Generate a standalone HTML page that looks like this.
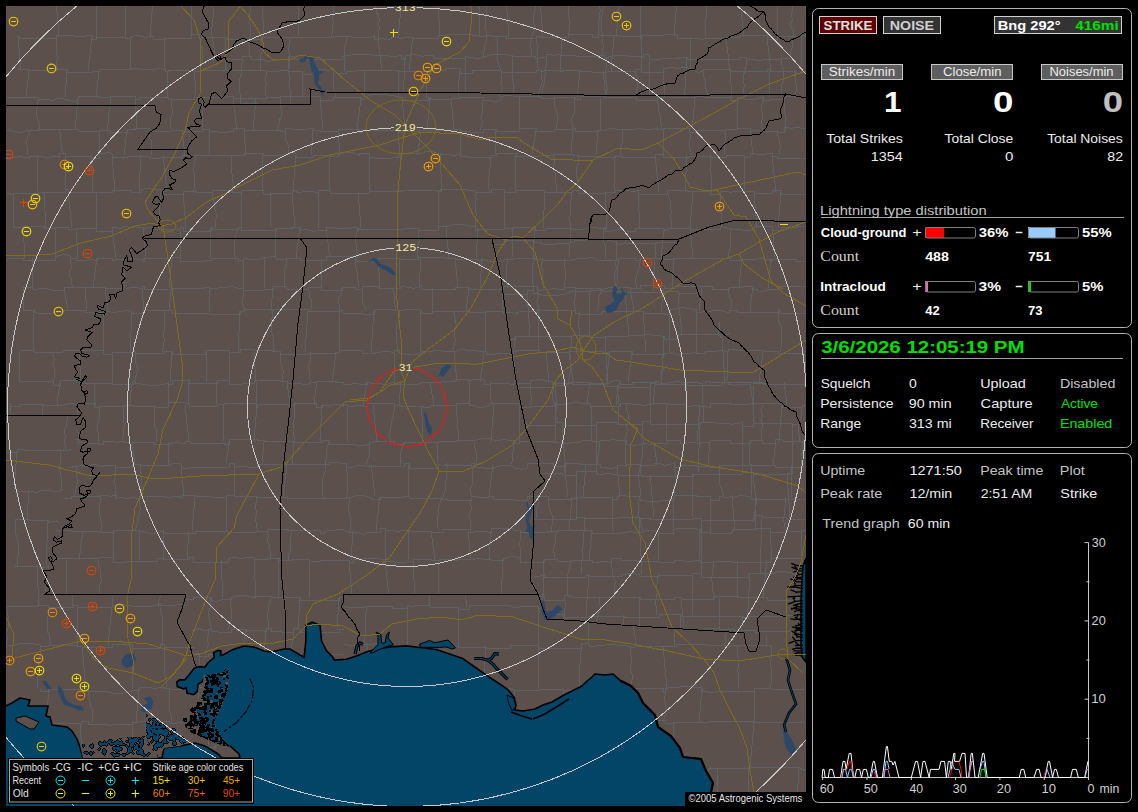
<!DOCTYPE html>
<html><head><meta charset="utf-8"><style>
*{margin:0;padding:0}
html,body{width:1138px;height:812px;background:#000;overflow:hidden;font-family:"Liberation Sans",sans-serif}
</style></head><body>
<svg width="800" height="800" viewBox="6 6 800 800" style="position:absolute;left:6px;top:6px;display:block"><rect x="6" y="6" width="800" height="800" fill="#5b504b"/><defs><clipPath id="cRest"><path clip-rule="evenodd" d="M6,6H806V806H6ZM344,594 L538,594 L547,619 L744,633 L806,640 L806,806 L344,806ZM6,416 L79,416 L44,594 L186,594 L200,680 L150,806 L6,806Z"/></clipPath><clipPath id="cBig"><path d="M344,594 L538,594 L547,619 L744,633 L806,640 L806,806 L344,806ZM6,416 L79,416 L44,594 L186,594 L200,680 L150,806 L6,806Z"/></clipPath><clipPath id="cSmall"><path d="M492,239 L679,239 L663,256 L705,303 L739,343 L766,380 L806,437 L806,633 L744,633 L547,619 L538,594 L530,580 L534,538 L533,503 L545,481 L526,429 L508,328ZM209,6 L806,6 L806,98 L786,94 L636,96 L480,93 L325,92 L310,89 L311,105 L209,104Z"/></clipPath></defs><g clip-path="url(#cRest)"><path d="M18,-3l0,3M474,-3l0,3M556,-3l0,3M624,-3l0,3M56,0l3,37M96,0l1,37M125,0l1,37M153,0l-3,37M191,0l1,37M262,0l2,37M299,0l-1,37M333,0l1,3l0,3l-1,3l0,3l0,3l-1,3l1,3l0,3l-1,3l0,4l0,3l-1,3M374,0l1,3l0,3l1,3l0,3l2,3l1,3l0,3l-1,3l1,3l0,3l-1,3l0,4M402,0l-4,37M438,0l2,37M479,0l1,37M506,0l3,37M540,0l3,37M568,0l0,3l0,3l0,3l0,3l0,3l1,3l0,3l0,3l0,3l0,4l-1,3l0,3M598,0l0,3l1,3l1,3l0,3l-1,3l0,3l0,3l-1,3l0,3l0,4l0,3l0,3M620,0l-4,37M640,0l0,37M677,0l-3,37M707,0l-2,37M740,0l4,37M777,0l1,37M806,0l-1,3l0,3l1,3l1,3l0,3l1,3l-1,3l-1,3l1,4l-1,3l0,3l-1,3M18,37l3,34M56,37l0,3l1,3l-1,3l0,3l0,3l1,3l0,3l0,3l-1,4l1,3l0,3M92,37l-4,34M131,37l-1,34M165,37l-1,34M201,37l0,3l-1,3l1,3l1,3l0,3l1,3l-1,3l0,3l-1,4l-1,3l0,3M225,37l0,34M262,37l-2,34M289,37l0,3l0,3l0,3l-1,3l1,3l1,3l-1,3l0,3l0,4l0,3l-1,3M346,37l0,3l0,3l-1,3l-1,3l0,3l0,3l0,3l0,3l0,3l0,4l0,3M378,37l4,34M413,37l-4,34M497,37l0,3l0,3l0,3l0,3l0,3l0,3l0,4l1,3l1,3l1,3l1,3M536,37l0,3l1,3l0,3l0,3l0,3l0,3l0,3l0,4l0,3l1,3l1,3M562,37l-2,34M614,37l-3,34M641,37l1,34M691,37l-1,34M726,37l4,34M767,37l4,34M801,37l0,34M29,71l-3,27M67,71l-2,27M99,71l-3,27M168,71l-1,27M194,71l0,3l0,3l1,3l0,3l0,3l0,3l0,3l0,3l-1,3M266,71l0,3l0,3l-1,3l1,3l0,3l-1,3l0,3l1,3l0,3M302,71l1,27M333,71l0,3l0,3l0,3l0,3l0,3l1,3l1,3l0,3l0,3M364,71l1,27M398,71l0,27M428,71l-2,27M460,71l-1,3l0,3l0,3l-1,3l0,3l0,3l0,3l1,3l1,3M501,71l0,3l0,3l0,3l0,3l1,3l0,3l-1,3l-2,3l0,3M541,71l0,3l0,3l1,3l0,3l-1,3l-1,3l-1,3l-1,3l0,3M580,71l-3,27M603,71l3,27M635,71l0,3l2,3l0,3l0,3l0,3l0,3l-1,3l0,3l0,3M663,71l2,27M703,71l0,3l1,3l1,3l1,3l-1,3l1,3l1,3l0,3l0,3M730,71l2,27M770,71l-1,27M796,71l-1,3l0,3l0,3l1,3l0,3l0,3l0,3l-1,3l1,3M5,98l-1,3l0,3l-1,4l0,3l0,3l0,3l1,3l0,4l-1,3l0,3M38,98l0,3l-1,3l0,4l-1,3l0,3l1,3l1,3l1,3l0,4l0,3M78,98l-3,32M110,98l0,3l0,3l0,4l-1,3l-1,3l0,3l0,3l0,3l-1,4l0,3M135,98l2,32M171,98l0,3l0,3l1,4l0,3l0,3l-1,3l-1,3l0,3l1,4l0,3M202,98l0,32M233,98l4,32M256,98l-3,32M280,98l0,3l0,3l1,4l0,3l0,3l0,3l-2,3l0,4l-1,3l-1,3M320,98l3,32M361,98l-4,32M402,98l3,32M430,98l-3,32M451,98l3,32M483,98l0,3l-1,3l0,4l0,3l0,3l-1,3l1,3l0,4l-1,3l-1,3M519,98l0,32M554,98l0,3l0,3l1,4l1,3l1,3l0,3l0,3l0,3l-1,4l1,3M575,98l-1,3l0,3l0,4l0,3l0,3l-2,3l-1,3l1,3l1,4l0,3M600,98l1,32M657,98l0,3l1,3l0,4l1,3l1,3l1,3l-1,3l1,3l0,4l0,3M695,98l-3,32M737,98l0,32M763,98l-1,3l0,3l-1,4l1,3l0,3l0,3l0,3l-1,3l1,4l1,3M784,98l2,32M29,130l0,3l-1,3l-1,3l-1,3l1,4l0,3l0,3l1,3M59,130l1,3l0,3l0,3l1,3l0,4l0,3l2,3l0,3M99,130l1,25M127,130l-3,25M149,130l0,3l0,3l1,3l2,3l-1,4l0,3l0,3l1,3M182,130l3,25M209,130l0,25M244,130l2,25M285,130l0,3l0,3l0,3l2,3l1,3l0,4l0,3l0,3M313,130l-2,25M338,130l2,25M398,130l2,25M419,130l1,3l0,3l-1,3l1,4l-2,3l0,3l-1,3l0,3M460,130l1,25M496,130l-1,25M536,130l-4,25M573,130l-2,25M598,130l-2,25M622,130l0,3l0,3l1,3l-1,4l-1,3l-1,3l0,3l0,3M663,130l0,25M689,130l1,3l0,3l0,3l-1,4l0,3l1,3l1,3l1,3M726,130l-2,25M750,130l3,25M777,130l0,3l1,3l1,3l0,3l1,3l0,4l-1,3l0,3M812,130l-1,3l-1,3l0,3l0,3l0,4l0,3l0,3l-1,3M-2,155l1,3l0,3l0,3l1,3l1,3l1,3l-1,3l-1,4l0,3l0,3l0,3l1,3M38,155l-1,37M65,155l1,37M91,155l0,3l0,3l0,3l0,3l1,3l1,3l-1,4l0,3l0,3l0,3l0,3l0,3M112,155l3,37M141,155l-2,37M163,155l4,37M196,155l-1,3l0,3l-1,3l0,3l-1,3l1,3l0,4l0,3l0,3l0,3l0,3l-1,3M231,155l2,37M263,155l-1,37M296,155l-3,37M330,155l-1,37M369,155l0,37M401,155l-3,37M440,155l2,37M491,155l0,3l-1,3l0,3l0,3l-1,3l0,3l0,4l-1,3l0,3l0,3l1,3l0,3M516,155l-1,37M553,155l1,3l0,3l0,3l-1,3l1,4l1,2l0,4l0,3l1,3l0,3l0,3l0,3M578,155l0,3l1,3l-1,3l-1,3l-1,3l0,4l1,3l0,3l1,3l0,3l0,3l1,3M615,155l-1,37M655,155l4,37M687,155l-2,37M710,155l2,37M744,155l1,37M772,155l4,37M812,155l-4,37M13,192l1,36M44,192l2,36M68,192l4,36M96,192l0,36M161,192l-3,36M183,192l3,36M212,192l0,3l1,3l1,3l1,3l-1,3l1,3l1,3l0,3l0,3l-1,3l0,3l0,3M241,192l0,36M271,192l-1,36M292,192l3,36M318,192l1,36M358,192l3,36M438,192l0,36M475,192l0,3l1,3l0,3l-1,3l0,3l0,3l1,3l0,3l-1,3l0,3l0,3l0,3M504,192l0,36M545,192l-2,36M572,192l-1,3l0,3l0,3l-1,3l0,3l0,3l0,3l0,3l-1,3l1,3l0,3l1,3M605,192l2,36M638,192l2,36M667,192l1,3l1,3l1,3l1,3l-1,3l1,3l0,3l-1,3l1,3l0,3l0,3l0,3M693,192l-3,36M720,192l2,36M754,192l3,36M781,192l-3,36M808,192l0,3l1,3l0,3l1,3l0,3l1,3l0,3l0,3l0,3l0,3l0,3l1,3M23,228l2,30M55,228l1,30M76,228l2,30M112,228l4,30M143,228l3,30M180,228l1,30M211,228l-1,30M238,228l-1,3l-1,3l-1,3l0,3l-1,3l1,3l-1,3l0,3l1,3l0,3M276,228l-1,30M300,228l-4,30M326,228l4,30M357,228l0,4l-1,3l-1,3l1,4l1,3l-1,3l1,4l0,3l0,3M418,228l0,4l0,3l1,3l0,4l-1,3l-1,3l0,4l0,3l0,3M446,228l3,30M478,228l-2,30M513,228l-1,30M535,228l-2,30M571,228l-2,30M604,228l-1,4l0,3l0,3l1,4l1,3l0,3l0,4l0,3l0,3M664,228l-3,30M690,228l3,30M730,228l0,4l0,3l0,3l1,4l-1,3l0,3l-1,4l-1,3l0,3M772,228l0,3l1,3l0,3l0,3l0,3l0,3l1,3l1,3l-1,3l0,3M-2,268l-1,3M-2,281l0,4l2,3M32,258l0,30M70,258l0,4l1,3l0,3l-1,3l-1,4l2,3l0,3l1,4l0,3M97,258l-4,30M122,258l1,3l1,4l0,3l0,3l0,4l0,3l0,3l0,3l1,4M172,258l-3,30M243,258l1,30M264,258l1,30M286,258l0,3l0,4l-1,3l-1,3l0,4l0,3l0,3l0,3l0,4M321,258l1,30M355,258l4,30M378,258l2,30M400,258l-1,30M421,258l-2,30M455,258l3,30M482,258l-2,30M507,258l0,3l0,4l-1,3l0,3l0,4l0,3l0,3l1,3l1,4M542,258l0,4l-1,3l0,3l2,3l-1,4l0,3l1,3l0,3l0,4M564,258l0,3l0,4l1,3l0,3l0,4l0,3l0,3l-1,3l0,4M618,258l0,3l0,4l-1,3l0,3l0,4l1,3l-1,3l0,4l-2,3M640,258l0,4l-1,3l0,3l-1,3l-1,3l-1,4l-1,3l1,3l0,4M674,258l-2,30M742,258l-3,30M771,258l-3,30M806,258l2,30M23,288l0,3l0,3l0,4l1,3l-1,4l0,3l1,3M64,288l4,23M85,288l2,23M105,288l3,23M142,288l2,23M172,288l-1,3l-1,3l0,4l0,3l-1,4l0,3l0,3M209,288l0,23M243,288l0,3l0,4l0,3l-1,3l1,4l1,3l2,3M273,288l-2,23M308,288l1,3l0,3l1,4l2,3l-1,3l0,4l-1,3M342,288l-1,3l0,3l-2,4l-1,3l1,3l0,4l1,3M362,288l0,3l0,4l0,3l0,4l2,3l1,3l1,3M392,288l1,3l1,3l0,4l0,3l1,4l0,3l1,3M432,288l0,23M469,288l-3,23M503,288l-1,23M537,288l0,3l1,3l0,4l-1,3l1,4l0,3l1,3M575,288l0,3l0,3l0,4l-1,3l0,4l1,3l0,3M601,288l0,3l-1,3l-2,4l0,3l0,3l0,4l-1,3M630,288l4,23M664,288l-3,23M702,288l-3,23M729,288l-1,3l1,3l1,4l2,3l-1,3l0,4l-1,3M753,288l-1,3l0,3l-1,4l0,3l-1,4l0,3l1,3M808,288l-1,23M34,311l-1,41M103,311l0,41M132,311l-2,41M164,311l0,3l0,4l0,3l0,3l1,3l-1,3l-1,3l0,3l1,3l0,3l-1,4l0,3l-1,3M240,311l-2,41M272,311l0,3l0,4l-1,3l0,3l0,3l0,3l1,3l1,3l0,3l0,3l0,4l1,3l0,3M308,311l-3,41M339,311l0,41M374,311l-3,41M399,311l0,3l0,4l-1,3l0,3l-2,3l0,3l0,3l0,3l0,3l0,3l1,3l0,4l1,3M421,311l-1,41M454,311l0,3l1,4l0,3l1,3l0,3l-1,3l-1,3l0,3l1,3l0,3l-1,4l-1,3l0,3M486,311l-1,41M539,311l-1,41M579,311l0,3l0,4l-1,3l0,3l1,3l0,3l1,3l-1,3l0,3l1,3l0,4l1,3l0,3M643,311l3,41M670,311l-1,41M696,311l1,41M778,311l0,3l0,4l0,3l2,3l1,3l0,3l0,3l0,3l1,3l-1,3l0,3l0,4l-1,3M813,311l0,3l0,4l1,3l-1,3l1,3l0,3l0,3l-1,3l0,3l0,3l1,4l1,3l0,3M19,352l0,30M53,352l0,3l1,3l0,3l-1,3l1,3l1,3l-1,3l0,3l0,3l-1,3M79,352l2,30M112,352l1,30M135,352l0,3l0,3l0,3l1,3l1,3l0,3l0,3l-1,3l-1,3l-1,3M172,352l-2,30M206,352l0,30M229,352l0,30M254,352l2,30M280,352l0,3l1,3l-1,3l1,3l1,3l1,3l0,3l-1,3l0,3l1,3M311,352l-1,3l0,3l0,3l-1,3l-1,3l1,3l0,3l0,3l1,3l0,3M336,352l-4,30M394,352l0,30M454,352l3,30M484,352l-4,30M513,352l3,30M546,352l3,30M569,352l4,30M609,352l0,3l0,3l-1,3l1,3l-1,3l-1,3l0,3l-1,3l0,3l1,3M632,352l-4,30M664,352l-1,3l0,3l-1,3l0,3l1,3l0,3l-1,3l-1,3l0,3l0,3M728,352l-1,3l0,3l0,3l0,3l0,3l0,3l0,3l0,3l0,3l-1,3M763,352l-4,30M804,352l1,3l0,3l0,3l1,3l-1,3l0,3l1,3l0,3l2,3l0,3M60,382l-3,23M94,382l0,4l1,3l-1,3l0,3l0,4l1,3l0,3M133,382l-1,3l-1,4l0,3l-1,3l0,4l0,3l-1,3M168,382l1,23M189,382l-1,23M217,382l-1,23M256,382l0,23M287,382l3,23M316,382l0,4l0,3l-1,3l0,3l-1,3l0,4l0,3M367,382l-4,23M401,382l-2,23M430,382l4,23M469,382l1,23M490,382l0,4l0,3l0,3l0,4l1,3l1,3l2,3M530,382l0,4l1,3l-1,3l1,3l1,3l-1,4l-1,3M552,382l0,4l1,3l0,3l-1,4l1,3l1,3l2,3M590,382l-3,23M620,382l-1,3l-2,4l0,3l0,3l-1,3l0,4l1,3M656,382l-1,4l-1,3l1,3l-1,3l-1,3l0,4l0,3M686,382l1,23M750,382l3,23M784,382l3,23M10,405l4,37M43,405l-3,37M77,405l0,3l0,3l0,3l-1,3l0,3l1,3l-1,4l1,3l1,3l0,3l1,3l1,3M99,405l1,3l-1,3l0,3l1,3l-2,3l0,3l-1,3l0,3l1,3l0,3l0,4l0,3M124,405l-1,3l0,3l0,3l0,3l0,3l1,3l0,3l-1,3l1,4l-1,3l-1,3l0,3M154,405l0,3l0,3l0,3l1,3l-1,3l0,3l0,3l2,3l0,3l0,3l0,4l0,3M185,405l4,37M224,405l-1,37M257,405l-3,37M294,405l1,3l-1,3l0,3l0,3l0,3l-1,3l0,3l0,3l0,3l1,4l0,3l1,3M322,405l-2,37M347,405l1,37M373,405l4,37M394,405l0,3l0,3l-1,3l0,3l-1,3l-1,3l0,3l-1,3l0,3l-1,3l1,3l0,4M422,405l0,3l-1,3l0,3l1,3l0,3l0,3l1,3l-1,3l0,3l1,3l-1,4l0,3M456,405l3,37M494,405l-3,37M519,405l1,37M555,405l1,37M591,405l1,37M626,405l0,3l1,3l1,3l0,3l0,3l-1,3l-1,3l1,3l0,4l-1,3l-1,3l0,3M667,405l-1,37M700,405l-3,37M762,405l0,3l-1,3l1,3l0,3l-1,3l1,3l1,3l-1,3l-1,3l0,3l1,4l0,3M782,405l-3,37M802,405l0,3l-1,3l0,3l0,3l-1,3l-1,3l-1,3l0,3l0,3l1,3l0,4l0,3M10,442l-1,3l-1,3l0,4l-1,3l0,3l1,4l0,3M38,442l1,23M132,442l3,23M169,442l-1,23M229,442l-3,23M264,442l-2,23M294,442l-2,23M329,442l-1,3l-1,3l-1,4l0,3l0,4l-1,3l0,3M369,442l0,3l0,3l1,4l-1,3l-1,4l-1,3l-1,3M404,442l-1,3l-1,3l-1,4l-1,3l0,3l0,4l0,3M438,442l-1,23M474,442l0,3l1,3l1,4l1,3l-1,3l0,4l0,3M514,442l-1,3l0,3l0,4l-1,3l0,4l0,3l-1,3M600,442l-3,23M626,442l-1,23M654,442l3,23M710,442l-2,23M750,442l-1,23M775,442l0,3l0,3l-1,4l0,3l0,3l-1,4l1,3M803,442l-2,23M7,465l1,32M39,465l-3,32M76,465l0,3l0,4l0,3l1,3l0,3l0,4l-1,3l-1,3l0,3l-1,3M115,465l0,3l0,4l0,3l0,3l-1,3l1,4l0,3l0,3l1,3l0,3M140,465l3,32M181,465l3,32M234,465l1,32M287,465l-4,32M325,465l0,3l0,4l-1,3l-1,3l-1,3l1,4l-1,3l0,3l1,3l-1,3M346,465l0,3l1,4l0,3l0,3l0,3l0,4l1,3l-1,3l0,3l-1,3M371,465l4,32M409,465l-1,32M447,465l0,3l-1,4l0,3l0,3l0,3l-1,4l0,3l0,3l-1,3l-1,3M471,465l1,3l0,4l1,3l-1,3l0,3l0,4l-1,3l-1,3l1,3l1,3M493,465l-4,32M564,465l4,32M586,465l-3,32M617,465l3,32M640,465l0,3l-1,4l-1,3l0,3l1,3l0,4l1,3l1,3l-1,3l1,3M674,465l0,3l1,4l0,3l1,3l0,3l0,4l-1,3l-1,3l0,3l0,3M719,465l0,3l1,4l-1,3l0,3l0,4l1,3l1,3l1,3l1,3l0,3M751,465l1,32M792,465l-1,32M813,465l-1,3l-1,4l-1,3l-1,3l0,3l-1,3l0,4l0,3l1,3l0,3M19,497l-4,34M44,497l4,34M100,497l0,3l0,3l-1,4l0,3l0,3l1,3l0,3l1,3l0,3l0,3l0,3M139,497l0,3l0,4l1,3l0,3l-1,3l0,3l-1,3l-1,3l0,3l-1,3l-1,3M195,497l-3,34M226,497l0,34M257,497l-1,3l0,3l-1,4l1,3l1,3l-1,3l-1,3l1,3l0,3l1,3l0,3M349,497l0,3l0,3l-1,4l0,3l1,3l1,3l0,3l0,3l1,3l-1,3l1,3M380,497l-4,34M442,497l-1,3l-1,3l-1,3l-1,3l0,3l0,3l-1,3l0,3l0,4l1,3l0,3M471,497l0,3l-1,3l1,3l0,4l-1,3l-1,3l1,3l1,3l-1,3l0,3l0,3M548,497l0,3l0,3l1,3l1,3l1,3l1,3l0,3l0,3l0,4l-1,3l0,3M572,497l-3,34M612,497l1,34M639,497l0,3l-1,4l1,3l-1,3l0,3l0,3l2,3l0,3l1,3l1,3l0,3M673,497l1,34M710,497l0,34M732,497l3,34M756,497l-1,34M786,497l-1,3l1,3l-1,4l-1,3l0,3l0,3l-1,3l1,3l0,3l1,3l1,3M814,497l-1,3l0,3l-1,3l1,4l0,3l1,3l-1,3l-1,3l-1,3l0,3l0,3M53,531l-1,3l-1,3l0,3l1,4l0,3l0,3l0,3l-1,4l0,3M83,531l-4,29M113,531l1,29M139,531l1,29M163,531l1,29M189,531l-2,29M267,531l1,3l0,3l-1,4l2,3l0,3l1,3l0,3l0,4l0,3M291,531l0,3l0,3l-1,3l0,4l0,3l1,3l-2,3l-1,4l0,3M353,531l-2,29M385,531l0,29M409,531l-1,29M431,531l4,29M468,531l3,29M491,531l-2,29M520,531l0,3l0,3l0,4l-1,3l1,3l0,3l0,3l0,4l1,3M557,531l-1,3l-1,3l0,3l0,4l-1,3l-1,3l1,3l0,4l0,3M592,531l-3,29M658,531l0,3l0,3l0,3l0,4l0,3l0,3l1,3l-1,4l0,3M700,531l-1,29M770,531l2,29M801,531l0,29M6,560l0,38M43,560l3,38M66,560l0,38M98,560l0,3l1,3l1,3l0,4l0,3l1,3l0,3l-1,3l-1,4l0,3l0,3l0,3M221,560l2,38M254,560l2,38M279,560l-1,38M309,560l0,38M349,560l3,38M385,560l4,38M413,560l2,38M439,560l-1,38M503,560l-2,38M544,560l-1,38M571,560l-1,3l0,3l-1,3l-1,4l-1,3l0,3l0,3l0,3l0,3l0,4l1,3l0,3M611,560l0,3l0,3l1,3l0,4l1,3l1,3l1,3l0,3l-1,3l0,4l0,3l0,3M713,560l0,3l0,3l0,3l-1,4l0,3l-1,3l1,3l0,3l0,4l1,3l1,3l0,3M737,560l1,38M767,560l-4,38M802,560l0,3l1,3l1,3l0,4l1,3l0,3l0,3l-1,3l0,4l0,3l0,3l-1,3M15,598l0,3l0,3l0,4l0,3l-1,3l-1,3l-1,3l0,3l0,4l1,3M46,598l0,3l-1,3l0,4l-1,3l1,3l1,3l0,3l1,4l-1,3l-1,3M91,598l1,3l1,3l1,3l0,4l0,3l1,3l0,3l1,3l-1,4l0,3M123,598l0,3l0,3l0,4l-1,3l1,3l-1,3l0,3l0,3l0,4l0,3M149,598l-1,32M187,598l2,32M211,598l-1,3l0,3l0,4l-1,3l-1,3l1,3l0,3l1,3l1,4l0,3M231,598l-1,3l0,3l1,4l0,3l0,3l0,3l0,4l-1,3l-1,3l-1,3M271,598l-1,3l-1,3l-1,3l0,4l-1,3l0,3l1,3l0,3l0,4l0,3M300,598l-2,32M339,598l-2,32M371,598l0,3l0,3l1,4l0,3l1,3l-1,3l0,3l0,3l-1,4l0,3M411,598l-3,32M451,598l0,3l1,3l-1,4l1,3l0,3l-1,3l1,3l0,3l-1,4l0,3M473,598l4,32M499,598l-1,32M523,598l-3,32M564,598l1,3l0,3l0,4l-1,3l0,3l-1,3l1,3l1,3l0,4l0,3M600,598l-1,3l1,4l0,3l0,3l-2,3l0,3l-1,3l-1,3l-1,4l1,3M640,598l-1,32M681,598l3,32M719,598l1,32M798,598l0,3l0,3l-1,4l-1,3l1,3l0,3l0,3l0,3l1,4l1,3M0,630l-1,25M42,630l3,25M72,630l0,25M132,630l0,3l0,3l-1,4l0,3l1,3l1,3l1,3l1,3M153,630l-4,25M180,630l0,3l0,3l0,3l1,3l1,4l0,3l0,3l1,3M208,630l0,3l0,3l-1,3l1,4l0,3l-1,3l-1,3l-1,3M246,630l-4,25M266,630l-2,25M293,630l0,3l0,3l0,3l-1,3l-1,4l0,3l1,3l1,3M320,630l-2,25M355,630l1,25M394,630l-1,25M425,630l3,25M463,630l-1,3l0,3l0,3l0,3l-2,4l0,3l0,3l1,3M492,630l0,3l1,3l0,3l-1,4l0,3l1,3l0,3l0,3M523,630l0,3l0,3l1,3l0,3l0,4l-1,3l1,3l1,3M550,630l-1,25M575,630l2,25M614,630l2,25M648,630l3,25M674,630l-1,25M705,630l-3,25M734,630l2,25M755,630l1,25M791,630l3,25M-3,680l0,3l1,3M17,655l-1,31M46,655l0,3l0,3l-1,3l1,3l-2,3l1,4l1,3l1,3l-1,3l-1,3M71,655l3,31M95,655l2,31M121,655l-2,31M161,655l0,3l-1,3l0,3l-1,3l-2,3l0,3l0,3l1,4l-1,3l0,3M199,655l1,31M237,655l0,3l1,3l2,3l0,3l-1,3l2,3l0,3l0,4l0,3l0,3M277,655l0,3l0,3l0,3l1,4l-1,3l0,3l1,3l2,3l1,3l0,3M300,655l-1,3l0,3l-1,3l-1,3l0,3l0,4l1,3l1,3l0,3l0,3M325,655l0,3l0,3l0,3l-1,4l1,3l0,3l-1,3l-1,3l-1,3l-1,3M346,655l1,31M366,655l0,31M400,655l0,31M461,655l-2,31M500,655l0,3l-1,3l-1,3l-1,3l0,3l-1,3l0,3l0,4l1,3l0,3M527,655l0,3l0,3l0,3l1,3l2,3l-1,3l1,4l0,3l-1,3l-1,3M552,655l0,3l1,3l0,4l0,3l-1,3l0,3l0,3l-1,3l-1,3l-1,3M611,655l-3,31M651,655l0,31M700,655l-2,31M724,655l-1,31M746,655l-3,31M785,655l-2,31M806,655l2,31M19,686l0,3l0,3l0,4l0,3l1,3l1,3l1,3l0,3l1,3M46,686l1,28M83,686l1,28M113,686l0,3l0,3l1,4l-1,3l-1,3l-1,3l0,3l0,3l-1,3M175,686l1,28M198,686l1,28M220,686l3,28M258,686l0,3l0,3l1,4l0,3l0,3l-1,3l-2,3l-1,3l0,3M281,686l2,28M303,686l1,28M326,686l1,28M358,686l0,3l0,3l1,4l-2,3l1,3l-1,3l-1,3l-1,3l-1,3M393,686l1,3l0,3l1,3l1,3l-1,4l0,3l0,3l1,3l0,3M424,686l0,3l0,3l1,3l0,4l0,3l-1,3l-1,3l-1,3l-1,3M457,686l4,28M488,686l2,28M582,686l0,3l1,3l1,3l-1,4l0,3l0,3l0,3l2,3l1,3M609,686l1,3l0,3l1,3l1,3l1,3l-1,4l0,3l0,3l-1,3M651,686l-4,28M681,686l1,28M716,686l-4,28M739,686l1,3l0,3l0,3l2,3l1,3l1,4l-1,3l0,3l0,3M774,686l3,28M810,686l0,3l1,3l0,3l0,3l0,4l-1,3l0,3l1,3l1,3M33,714l0,3l1,3l1,3l0,4l1,3l0,3l0,3l-1,3l-1,3l0,3M61,714l0,3l0,3l0,4l0,3l1,3l1,3l-1,3l0,3l0,3l1,3M95,714l-1,31M136,714l-4,31M206,714l0,3l1,3l0,4l1,3l1,3l0,3l0,3l0,3l0,3l-1,3M258,714l0,3l0,4l0,3l1,3l0,3l-1,3l0,3l0,3l2,3l0,3M330,714l2,31M355,714l-4,31M385,714l-3,31M419,714l1,31M454,714l0,3l1,4l-1,3l-1,3l1,3l0,3l0,3l-1,3l0,3l0,3M475,714l-3,31M514,714l1,31M576,714l1,31M615,714l0,31M648,714l3,31M680,714l0,31M708,714l0,3l0,3l0,4l-1,3l0,3l0,3l0,3l0,3l0,3l0,3M736,714l-1,31M811,714l1,31M28,745l-3,39M68,745l-2,39M109,745l-3,39M149,745l-1,39M177,745l0,3l0,3l0,4l1,3l0,3l1,3l1,3l0,4l-1,3l-1,3l0,3l0,4M215,745l-4,39M250,745l3,39M290,745l-1,39M326,745l-3,39M364,745l-3,39M402,745l0,39M470,745l1,39M520,745l3,39M558,745l-1,3l0,3l-1,4l1,3l-1,3l0,3l1,4l1,3l0,3l1,3l0,3l0,4M580,745l0,3l1,3l0,4l1,3l0,3l0,3l0,3l1,4l-1,3l0,3l0,3l1,4M607,745l0,3l0,3l0,4l-1,3l0,3l1,3l-1,4l0,3l2,3l0,3l0,3l1,4M641,745l0,3l0,3l0,4l1,3l1,3l0,3l-1,3l1,4l0,3l-1,3l0,3l-1,4M716,745l-3,39M751,745l4,39M783,745l0,3l0,3l0,4l2,3l-1,3l1,3l-1,3l0,4l-1,3l0,3l0,3l0,4M4,784l-1,29M30,784l-3,29M70,784l-2,29M101,784l-2,29M135,784l0,3l1,3l0,4l1,3l0,3l-1,3l-1,4l-1,3l-1,3M187,784l0,3l1,3l0,3l0,4l1,3l0,3l1,4l0,3l0,3M227,784l0,3l0,3l-2,3l-1,4l-1,3l0,3l0,3l0,4l1,3M268,784l-3,29M297,784l-1,29M323,784l-1,29M364,784l1,29M395,784l-1,29M456,784l0,3l0,3l0,4l1,3l0,3l0,4l-1,3l-1,3l-1,3M489,784l1,3l0,3l1,3l0,4l1,3l1,3l0,3l0,4l-1,3M515,784l3,29M536,784l0,3l0,3l0,4l-1,3l2,3l1,3l0,4l1,3l0,3M566,784l4,29M607,784l0,3l-1,3l-1,3l0,4l0,3l1,3l0,4l1,3l1,3M637,784l0,3l0,3l1,3l0,4l1,3l0,3l1,4l0,3l1,3M662,784l3,29M697,784l2,29M737,784l-1,3l0,3l-1,3l-1,4l0,3l-1,3l1,4l0,3l1,3M773,784l1,29M799,784l0,29M19,-1l0,1l1,0l3,0l3,-1l3,1l3,-1l3,-1l3,0l3,0l3,0l3,1l3,0l3,1l3,0l0,1l1,0l36,0l0,-2l3,0l3,0l3,0l4,0l3,1l3,1l3,0l4,-1l3,0l3,-1l0,2l1,0l0,-1l27,0l5,0l0,1l3,-1l3,1l3,0l3,-1l3,1l3,-1l3,1l3,0l3,0l3,0l3,0l0,1l8,0l0,-4l28,0l0,3l3,1l4,0l4,0l3,-1l0,1l3,0l3,1l3,0l3,-1l3,0l3,0l3,0l0,1l6,0l0,-1l26,0l0,-4l5,0l0,1l32,0l0,1l2,0l0,2l19,0l0,-4l3,0l3,0l3,1l4,1l3,-1l3,0l3,-1l0,2l7,0l0,-1l21,0l0,-1l3,1l3,0l3,0l3,-1l3,0l3,0l3,0l3,0l3,0l0,4l9,0l0,-2l13,0l0,2l3,-1l4,1l3,-1l3,1l3,-1l3,1l4,0l3,0l0,-1l2,0l27,0l0,-1l9,0l25,0l0,2l3,-1l3,-1l3,0l3,1l3,1l0,-1l3,1l4,0l3,0l3,-1l0,-2l24,0l0,3l3,-1l3,1l0,-2l3,0l3,0l3,1l4,0l3,1l3,-1l3,-1l0,1l4,0l0,1l16,0l0,-4l18,0l0,4l19,0l0,-1l9,0l0,-1l21,0l0,-2l3,0l0,4l29,0l0,-3l1,0l0,1l35,0l0,-1l2,0l0,-1l20,0l0,4l3,0l3,-1l3,1l0,-4M18,36l0,1l2,0l0,1l36,0l0,-3l3,0l3,0l3,0l3,0l3,0l3,1l3,1l3,-1l3,0l3,0l3,-1l3,0l0,4l4,0l0,-2l29,0l0,1l3,1l3,-1l0,-2l3,0l3,-1l3,1l4,1l3,0l3,-1l3,0l0,3l12,0l0,-1l26,0l0,-4l10,0l0,3l24,0l0,1l2,0l0,1l35,0l0,-2l27,0l10,0l20,0l14,0l0,-1l13,0l3,0l3,1l3,0l3,1l4,-1l3,1l3,-1l3,0l3,-1l0,3l4,0l0,-1l3,0l3,1l3,1l3,-1l3,-2l3,0l3,1l3,0l0,-1l11,0l0,1l25,0l0,-3l7,0l0,-1l27,0l0,1l7,0l0,2l3,-1l3,0l3,-1l3,1l3,0l3,1l0,-1l9,0l0,2l30,0l0,-2l4,0l0,1l22,0l6,0l0,-3l24,0l0,3l6,0l0,-1l3,-1l3,0l4,0l3,0l3,1l0,-1l6,0l0,1l20,0l0,2l1,0l0,-3l22,0l0,-1l14,0l0,4l14,0l3,0l3,0l4,1l3,0l3,-1l19,0l0,-1l14,0l0,-2l27,0l0,4l10,0l0,-3l24,0l0,-1l5,0l0,4M18,70l0,-1l11,0l0,1l27,0l0,-1l11,0l0,3l25,0l0,-1l7,0l0,-2l32,0l0,-1l8,0l0,1l3,0l4,0l3,0l3,0l3,0l3,-1l4,1l3,0l0,2l3,0l0,-1l26,0l0,1l7,0l0,-1l24,0l0,-1l1,0l0,1l36,0l4,0l0,1l3,0l4,0l3,0l3,0l3,-1l4,0l3,1l13,0l0,2l3,1l4,0l3,0l4,-1l3,0l0,-4l3,0l4,1l4,0l3,-1l0,4l13,0l0,-2l3,0l3,0l3,0l3,-1l3,0l3,1l0,-1l4,0l3,0l3,0l4,0l20,0l0,1l15,0l15,0l0,-1l3,0l4,0l3,-2l4,2l3,0l0,-2l15,0l0,5l12,0l0,-3l25,0l4,0l0,2l35,0l0,-2l5,0l0,1l3,0l3,-1l3,0l3,0l3,0l3,1l3,0l0,-1l3,0l3,0l3,0l3,0l3,0l3,0l0,2l3,-1l3,0l3,0l3,1l11,0l4,0l3,-1l4,1l0,-1l21,0l0,-2l3,0l3,0l0,3l22,0l0,-3l3,-1l3,0l3,-1l3,1l4,0l3,-1l3,0l3,1l3,1l0,1l3,1l3,1l3,0l3,-2l0,-1l23,0l4,0l0,2l37,0l0,-2l3,0l0,2l26,0l0,2l5,0l0,-4M5,98l0,-1l24,0l9,0l0,2l3,0l3,0l4,0l3,1l3,0l3,-1l4,-1l3,1l3,0l0,1l4,1l3,1l4,-2l0,-4l21,0l0,1l11,0l0,-1l25,0l0,3l4,0l0,-2l29,0l0,2l3,0l23,0l0,-2l4,0l4,0l24,0l0,-1l4,0l3,0l0,2l23,0l10,0l0,-1l14,0l0,-1l22,0l18,0l0,4l13,0l0,-3l28,0l0,2l3,0l0,-3l3,0l3,-1l3,-1l3,0l3,0l4,0l3,0l3,1l3,0l3,1l3,0l0,1l4,0l0,3l26,0l0,-3l2,0l0,2l21,0l0,-1l9,0l0,-1l23,0l0,3l3,1l3,-1l3,1l3,0l3,0l3,-1l0,-3l3,-1l3,-1l3,0l3,1l3,0l3,1l0,-1l22,0l0,2l13,0l0,-1l21,0l0,2l5,0l0,-3l20,0l3,0l0,2l3,-1l3,0l4,0l3,0l3,0l3,0l3,0l4,1l3,-1l3,1l1,0l0,2l21,0l0,-3l6,0l32,0l0,-1l8,0l0,1l27,0l0,3l7,0l0,-3l3,1l4,1l3,0l3,1l3,-1l3,0l4,-1l3,-1l0,3l7,0l0,-1l14,0l0,-3l12,0l0,2M-1,130l0,-2l6,0l0,2l3,0l3,1l3,0l3,1l3,0l3,0l3,-1l3,-1l9,0l0,-1l21,0l19,0l0,2l21,0l0,-1l11,0l0,2l17,0l0,-3l8,0l0,-1l14,0l0,3l22,0l4,-1l3,0l4,1l20,0l0,-2l7,0l0,2l3,0l3,0l3,1l3,0l3,0l3,0l3,-1l3,0l0,-3l4,1l3,-1l4,0l0,2l12,0l24,0l0,1l5,0l0,-3l3,0l3,1l3,1l3,-1l4,0l3,0l3,0l3,-1l3,0l0,2l7,0l0,2l3,-1l3,0l3,0l3,1l3,-1l3,1l0,-3l21,0l0,3l2,0l0,-2l37,0l0,2l4,0l0,-1l17,0l4,-1l3,1l4,0l0,-1l21,0l0,-1l9,0l0,3l3,-1l4,0l3,1l3,0l3,0l4,0l3,0l0,-3l13,0l0,2l23,0l0,-3l17,0l0,3l18,0l0,-2l19,0l0,-1l2,0l0,3l23,0l0,-1l2,0l3,0l3,0l3,-1l4,-1l3,1l3,0l3,1l0,-1l14,0l0,-1l3,0l3,1l3,0l3,1l3,-1l3,0l3,-1l0,1l3,0l3,0l0,-1l26,0l0,4l6,0l0,-2l31,0l4,-1l3,0l4,1l0,-2l13,0l0,3l3,0l3,-1l4,1l3,0l14,0l0,1l7,0l0,-5l3,0l3,1l3,0l3,-1l4,1l3,1l3,-1l3,-1l3,0M-2,155l0,-2l1,0l0,5l3,-1l3,0l3,0l3,1l3,-1l3,0l3,-1l3,1l3,0l3,1l0,-2l9,0l0,1l3,-1l3,1l3,1l3,-1l3,-1l3,0l3,1l0,-4l6,0l0,3l26,0l0,2l8,0l0,-4l3,-1l4,0l3,-1l3,2l0,3l15,0l0,-1l14,0l8,0l0,1l3,1l4,1l4,-1l3,-1l19,0l0,-2l14,0l13,0l22,0l13,0l0,-2l19,0l0,2l22,0l0,-1l4,-1l3,-1l4,2l0,3l17,0l0,-2l3,0l4,1l3,-1l4,1l3,-1l0,1l8,0l0,-1l3,-1l3,-1l3,-1l3,0l3,1l3,1l3,1l0,-2l10,0l0,4l3,0l3,1l4,0l3,0l3,1l3,-1l4,0l3,-1l3,0l0,-3l3,0l0,-1l18,0l3,0l3,-1l3,-1l3,0l3,1l3,1l3,0l0,1l3,0l4,0l3,1l3,0l4,0l3,-1l0,2l4,0l4,0l0,1l23,0l0,-2l5,0l0,-2l20,0l0,3l20,0l3,0l4,-1l3,0l4,0l3,1l0,-2l20,0l0,1l5,0l0,1l20,0l0,1l3,0l4,0l3,0l4,0l3,0l0,-1l7,0l0,1l33,0l0,-3l8,0l0,3l24,0l2,0l0,-1l21,0l0,1l16,0l0,-2l18,0l0,2l3,1l3,-1l0,-4l3,0l3,1l3,0l4,1l3,-1l3,-1l3,0l0,3l5,0l0,2l35,0M-2,194l3,-1l3,1l3,-1l3,1l3,0l0,-1l25,0l0,-1l6,0l21,0l0,-3l3,0l0,3l23,0l5,0l16,0l0,-2l3,1l3,-1l4,0l3,0l3,0l3,0l0,2l10,0l0,-2l3,-1l4,-1l3,1l3,0l4,0l3,1l0,1l2,0l0,3l20,0l0,-3l3,0l4,0l3,1l3,-1l0,1l16,0l0,-2l19,0l0,2l10,0l0,-2l22,0l0,4l4,0l4,0l0,-1l21,0l0,-3l4,0l0,2l3,1l3,-1l3,-1l4,0l3,0l3,1l3,0l0,-2l12,0l0,3l28,0l11,0l0,-2l29,0l3,0l0,-1l37,0l0,1l2,0l0,-2l28,0l0,2l4,-1l3,1l0,1l16,0l0,-3l13,0l0,3l12,0l0,-2l29,0l0,3l4,-1l4,1l0,-1l19,0l0,-1l3,-1l3,1l0,2l27,0l0,-1l10,0l0,-2l3,0l4,0l3,0l3,0l3,1l4,0l3,-1l0,4l17,0l12,0l0,-4l20,0l0,1l6,0l17,0l0,3l3,0l4,1l3,-1l0,-3l3,0l3,0l3,1l3,0l3,-1l3,1l3,-1l3,0l10,0l0,2l18,0l0,-3l9,0l0,4l27,0l4,0l0,-1M13,227l10,0l0,-1l21,0l0,2l11,0l0,-1l13,0l0,2l8,0l0,-1l20,0l0,3l16,0l0,-4l3,0l3,1l4,0l3,-2l3,1l3,0l12,0l0,1l3,0l3,-1l3,1l3,1l3,0l3,-1l0,1l19,0l0,-2l3,0l0,4l28,0l0,-4l1,0l0,2l26,0l0,-2l3,0l0,3l30,0l5,0l0,-2l16,0l0,-1l8,0l0,3l3,0l3,-1l3,1l3,1l3,0l3,-1l8,0l0,-3l3,0l3,0l3,1l3,0l4,1l3,-1l3,1l3,-1l3,-1l3,0l0,1l1,0l0,1l38,0l2,0l3,0l4,0l3,-1l3,0l4,0l3,1l0,1l20,0l0,-4l4,1l4,-1l3,0l3,-1l4,-1l3,0l3,0l3,1l4,1l3,0l3,0l0,4l3,0l0,-1l26,0l0,-1l9,0l0,-1l22,0l0,3l10,0l0,-2l26,0l0,1l1,0l3,0l3,0l4,1l3,-1l3,-1l3,-1l3,0l4,1l3,0l3,1l0,-2l1,0l0,4l3,0l3,0l3,-1l3,0l3,-1l3,1l3,1l3,0l3,0l3,0l0,-3l3,0l26,0l0,2l3,0l0,-2l23,0l0,2l3,0l0,-1l27,0l0,-1l3,-1l4,1l3,0l0,1l3,0l3,0l3,0l3,1l3,1l3,-1l3,0l3,-1l0,-3l18,0l0,4l3,0l3,0l3,0l0,-3l15,0l0,-1l12,0l0,3M-1,258l3,1l3,1l3,-1l3,-1l3,0l3,1l3,-1l3,0l0,2l9,0l23,0l0,-4l3,0l3,-1l3,-1l3,1l3,1l0,2l6,0l0,2l3,0l3,1l3,-1l3,0l3,-1l3,1l3,0l0,-2l15,0l0,2l3,0l4,-1l3,1l0,-1l3,0l3,0l3,-1l3,0l3,1l3,0l3,0l0,2l1,0l0,-3l28,0l0,-1l8,0l0,4l24,0l0,-1l7,0l0,-2l27,0l0,2l5,0l0,-2l3,0l3,1l3,0l3,1l3,-1l3,0l3,-1l3,-1l3,0l3,-1l3,2l0,1l10,0l0,-1l14,0l0,2l21,0l5,0l0,-4l29,0l0,3l2,0l0,2l21,0l0,-3l18,0l4,0l0,1l18,0l0,-2l3,0l3,0l3,1l3,-1l4,0l3,0l3,0l3,0l3,0l0,1l9,0l0,1l23,0l0,1l4,0l0,-1l3,1l3,1l3,0l3,0l4,0l3,0l3,-1l3,-1l6,0l0,-1l22,0l0,1l3,1l4,-1l0,1l22,0l7,0l0,-1l3,0l3,0l3,-1l4,1l3,-1l3,-1l3,1l3,1l0,1l8,0l14,0l0,-2l17,0l0,2l5,0l0,-2l24,0l0,1l10,0l0,-1l16,0l22,0l18,0l0,2l12,0l0,-1l3,0l3,0l4,0l3,0l3,0l3,-1l4,1l3,0l3,0l0,2l1,0l0,-2l24,0l0,2l10,0l0,-1M23,286l0,1l9,0l0,3l3,-1l3,0l4,-1l3,0l3,1l3,1l3,0l4,0l3,0l3,0l0,-3l6,0l15,0l12,0l4,0l4,0l0,1l17,0l0,1l3,0l4,-1l3,-1l3,0l4,1l3,1l0,-3l2,0l0,3l28,0l0,-1l32,0l0,-1l5,0l0,1l3,1l3,-1l3,0l3,-1l3,0l4,0l3,-1l3,1l3,1l3,0l3,0l0,2l21,0l0,-1l3,0l3,0l3,0l0,-3l13,0l0,3l22,0l0,-2l13,0l0,3l21,0l0,-3l13,0l0,2l7,0l0,-3l16,0l0,2l14,0l8,0l0,-2l3,0l3,1l3,0l3,1l3,0l3,-1l3,-1l0,3l11,0l23,0l0,-2l14,0l0,2l13,0l21,0l0,-3l4,0l30,0l0,4l5,0l3,-1l3,1l3,-1l4,-1l3,1l3,0l3,1l0,-3l11,0l0,1l21,0l5,0l0,1l3,0l4,-1l3,-1l4,1l3,1l0,-2l12,0l0,1l10,0l0,-3l24,0l0,3l3,1l4,-1l3,0l0,-2l28,0l10,0l0,3l17,0l0,-2l13,0l0,-1l11,0l0,3l3,0l3,2l3,0l3,0l3,-1l3,-1l8,0l0,-3l27,0l0,-1l2,0l0,5M23,311l0,-1l11,0l0,2l3,1l3,0l3,0l3,0l4,0l3,0l3,-1l3,0l3,0l0,-2l2,0l21,0l0,2l3,0l3,0l3,1l3,0l3,-1l3,0l0,2l2,0l0,-2l3,-1l3,1l3,1l3,-1l3,-1l3,0l3,-1l3,1l3,1l0,1l10,0l0,-3l22,0l8,0l0,3l33,0l4,0l0,1l31,0l0,-3l3,0l0,-2l29,0l0,1l1,0l0,-1l35,0l0,2l31,0l0,-1l3,0l0,3l20,0l0,1l12,0l0,-5l18,0l0,1l7,0l3,0l3,0l3,-1l4,0l3,0l3,0l3,1l0,3l11,0l0,-2l22,0l15,0l0,1l17,0l0,-1l17,0l0,3l3,-1l4,-1l3,1l3,1l0,-1l3,-1l3,-1l3,0l3,0l3,0l3,1l3,1l0,-4l2,0l0,1l36,0l0,3l4,0l0,1l22,0l0,-1l1,0l0,-2l28,0l13,0l0,2l21,0l0,1l6,0l0,-5l3,0l3,0l4,-1l3,-1l3,1l4,0l3,1l3,0l0,3l6,0l3,-1l3,0l3,0l3,-1l3,0l3,0l3,1l3,1l3,0l0,-2l4,1l4,-1l0,2l3,0l3,0l4,0l3,0l3,0l25,0l0,-3l1,0l0,4l29,0l0,-3l5,0M19,350l15,0l0,2l19,0l9,0l0,-2l17,0l24,0l0,4l3,1l3,-1l3,0l0,-2l20,0l0,-1l3,0l0,2l29,0l0,-2l8,0l0,3l33,0l0,-4l1,0l23,0l0,2l4,0l3,0l4,0l0,-3l14,0l0,1l18,0l0,1l8,0l0,3l28,0l0,-1l3,0l25,0l0,-1l3,0l0,-2l23,0l0,4l3,-1l3,0l3,0l3,1l0,-1l3,-1l4,0l3,-1l3,0l4,1l3,1l0,-3l5,0l0,4l3,-1l3,1l3,0l4,0l3,0l3,0l0,-1l3,0l0,-2l3,0l3,1l3,-1l3,0l3,-1l3,0l3,1l3,0l3,0l3,0l3,0l3,0l3,-1l3,-1l3,1l3,1l3,-1l3,0l3,1l3,0l3,0l2,0l0,3l3,0l3,0l3,0l3,-1l3,1l3,-1l3,0l3,1l3,0l0,-3l3,0l0,-1l23,0l0,2l7,0l23,0l3,-1l4,0l3,1l0,-1l23,0l0,1l4,1l3,-1l0,-1l23,0l0,3l11,0l21,0l0,-1l6,0l0,-1l3,1l3,1l4,0l3,-1l3,0l4,0l3,0l3,-1l0,2l3,-1l3,0l3,1l0,-3l3,1l4,-1l3,0l3,0l3,-1l4,1l3,0l0,-2l9,0l0,1l26,0l0,1l15,0l0,2l26,0l0,-2l3,1l3,1l3,-2l0,1M19,381l1,0l33,0l0,4l7,0l0,-5l19,0l0,3l15,0l18,0l0,1l21,0l0,-3l2,0l0,2l3,0l3,1l3,0l3,1l3,0l3,0l3,0l3,0l3,-1l3,0l3,-1l0,1l4,0l0,-4l3,0l4,1l3,-1l4,1l3,-1l0,3l17,0l11,0l0,-3l12,0l0,4l3,0l3,0l3,0l4,0l3,-1l3,0l3,0l3,1l0,-3l2,0l0,-1l24,0l0,1l7,0l0,2l3,0l3,0l3,0l3,0l3,1l3,0l3,0l3,-1l0,-1l5,0l0,-1l20,0l0,1l7,0l0,2l3,0l3,0l3,0l4,-1l3,1l3,0l5,0l0,-2l3,1l3,0l3,0l3,0l3,1l3,0l3,0l3,-1l3,-1l0,2l7,0l17,0l0,-1l3,0l3,-1l3,0l3,1l0,-1l3,0l3,0l3,1l3,-1l3,-1l3,0l3,0l3,1l0,-1l3,-1l3,-1l3,0l3,0l3,2l0,-1l3,0l3,-1l3,0l3,0l3,1l0,4l6,0l3,-1l4,1l3,-1l3,0l3,0l4,1l3,0l0,-1l17,0l0,-3l3,0l3,0l4,-1l3,1l3,0l0,1l6,0l0,2l3,1l4,2l3,-1l4,0l3,-2l0,-1l21,0l0,2l3,-1l3,1l4,-1l3,0l3,0l3,1l0,-3l4,0l3,-1l4,1l0,3l12,0l0,-2l24,0l0,2l4,1l4,-1l22,0l0,1l19,0l0,-4l5,0l0,1l18,0l0,2l3,0l3,1l3,0l4,-1l3,1l3,-1l3,0l0,-2l13,0l0,2l21,0l0,1l3,-1l4,0l3,1l3,-1l4,0l3,1l0,-4l5,0l0,2M10,403l0,3l10,0l0,-2l23,0l0,1l17,0l3,0l4,-1l3,-1l4,1l3,1l0,-2l17,0l0,4l5,0l0,-1l25,0l0,-1l9,0l0,1l21,0l0,1l4,0l3,0l3,1l4,-1l0,-4l3,-1l4,0l3,0l4,0l3,1l4,0l0,3l28,0l0,-2l7,0l0,-1l32,0l0,4l1,0l0,-3l30,0l0,1l7,0l0,-2l22,0l0,4l3,0l3,0l0,-1l3,-1l3,0l3,0l3,-1l3,0l3,1l3,1l0,-2l4,0l0,3l3,-1l4,0l3,-1l3,0l4,1l3,1l0,-4l6,0l21,0l0,2l7,0l0,1l21,0l0,1l8,0l0,-2l26,0l0,-2l13,0l0,2l3,0l3,1l3,1l3,0l3,0l3,-1l3,-1l0,-2l4,0l25,0l0,4l4,0l3,0l4,0l0,-1l22,0l0,-1l3,0l0,-1l3,0l3,0l4,0l3,-1l3,0l3,-1l3,0l3,1l4,0l3,0l3,1l0,3l1,0l0,-1l29,0l0,-2l3,-1l3,1l0,-1l3,0l3,1l3,1l3,-1l3,1l3,0l3,0l3,-1l3,0l3,-1l11,0l0,1l19,0l0,2l4,1l3,-1l3,-1l4,1l0,1l3,-1l4,1l3,0l0,-4l3,1l4,-1l3,0l3,0l4,1l3,-1l0,1l20,0l0,-1l12,0l20,0l0,4l2,0l18,0l0,-1l4,-1l3,1l0,-3M0,441l3,1l4,0l3,0l0,-2l28,0l5,0l0,2l29,0l0,-3l5,0l0,4l3,0l3,-1l3,1l4,0l3,0l3,0l3,0l0,1l4,0l0,-3l3,0l3,0l3,0l3,1l3,1l3,-2l3,0l0,1l4,0l4,0l22,0l0,2l15,0l0,-1l3,0l3,-1l4,1l3,0l3,0l0,-2l5,0l0,2l34,0l0,1l5,0l0,-5l28,0l0,1l7,0l0,1l30,0l0,1l28,0l0,-2l7,0l0,4l18,0l3,0l3,0l3,1l4,0l3,0l3,0l3,-1l0,-2l4,0l0,-1l21,0l0,3l10,0l0,-2l18,0l16,0l0,-1l18,0l0,-1l18,0l3,0l4,-1l3,-1l3,0l4,1l3,1l3,0l4,0l3,-1l3,1l4,0l3,0l0,3l5,0l0,-2l34,0l0,1l2,0l3,0l3,1l3,0l3,0l3,0l3,-1l3,0l3,0l0,-1l3,0l3,-1l3,0l3,1l3,1l3,-1l3,0l0,-1l3,0l3,1l4,-1l3,-1l3,1l4,0l3,0l3,0l0,4l3,0l3,1l3,0l3,0l4,-1l3,-1l3,1l3,0l3,0l0,-1l13,0l0,-3l13,0l0,4l3,-1l4,0l3,-1l3,0l4,1l3,1l0,-2l10,0l0,-2l20,0l0,3l20,0l0,-3l12,0l0,3l13,0l0,-3l3,-1l4,1l0,1l20,0l0,2l1,0l0,-4M7,467l0,-2l3,0l0,-1l28,0l0,1l1,0l0,2l33,0l0,-1l4,0l3,0l3,-1l3,1l3,0l3,-1l3,-1l3,1l3,1l3,0l0,-1l12,0l0,2l3,0l4,0l3,0l4,0l3,0l0,-3l4,0l4,0l0,1l29,0l0,-1l3,0l3,-1l3,0l3,1l0,4l9,0l0,-1l21,0l18,0l0,-4l5,0l0,4l3,0l4,-1l3,0l3,1l3,0l4,0l3,0l0,-3l7,0l23,0l0,1l3,-1l4,1l0,-1l31,0l4,0l0,-1l3,-1l4,0l3,1l4,0l3,0l0,4l3,0l4,0l3,-1l3,-1l3,0l4,1l3,1l0,-2l2,0l0,1l33,0l0,-3l5,0l0,5l29,0l0,-4l3,1l3,1l3,-2l0,1l24,0l0,-2l3,0l0,5l3,-1l3,0l4,1l3,0l3,0l3,0l0,-1l3,0l3,-1l3,-1l3,0l3,0l3,1l3,1l0,1l3,0l3,1l4,0l3,-1l0,-5l26,0l0,3l4,0l3,0l4,0l0,-3l3,0l3,0l3,0l3,0l3,0l0,1l7,0l14,0l0,3l3,0l4,1l3,1l4,-1l3,-1l0,-2l9,0l0,-1l14,0l0,1l14,0l0,-2l3,0l4,1l3,1l3,0l4,-1l3,-1l0,4l6,0l0,-2l16,0l0,1l14,0l0,1l9,0l0,-2l31,0l0,-1l1,0l0,1l24,0l0,2l17,0l4,0l3,1l4,-1l0,-1l3,0l4,-1l3,1l0,1M-3,500l3,-1l4,0l3,-1l0,1l12,0l0,-2l3,0l4,0l3,1l3,-1l4,0l3,0l0,2l5,0l0,-1l27,0l0,-2l5,0l24,0l0,-1l3,0l3,0l3,1l3,0l3,-1l0,3l3,0l3,-1l3,1l3,0l3,0l3,-1l3,1l3,0l0,-1l1,0l0,-1l25,0l0,2l3,-1l3,0l4,-1l3,0l3,2l0,-3l14,0l0,1l16,0l0,2l3,-1l3,1l3,-1l3,0l3,1l0,-3l8,0l0,1l23,0l0,1l30,0l0,1l37,0l0,-1l1,0l0,1l21,0l0,-1l3,0l3,0l3,-1l3,-1l4,0l3,1l3,1l3,0l0,2l9,0l0,-2l23,0l0,-1l6,0l0,2l33,0l0,1l5,0l0,1l24,0l0,-4l3,0l3,0l3,2l4,-1l3,1l3,-2l3,0l0,3l20,0l0,1l3,0l4,0l4,1l3,-1l0,-4l21,0l0,3l16,0l8,0l0,-1l4,0l3,0l3,-1l4,1l0,-1l26,0l0,2l5,0l0,-3l3,0l3,-1l3,1l4,0l3,0l3,0l3,0l0,3l1,0l0,1l3,0l3,1l3,0l3,0l3,0l3,1l3,-1l3,-1l3,0l3,0l3,0l0,-2l1,0l0,-3l22,0l0,1l4,0l3,0l3,0l4,0l0,4l9,0l0,-4l3,1l4,1l3,-1l3,-1l0,2l3,-1l3,-1l4,-1l3,1l3,0l3,2l0,1l5,0l30,0l3,0l3,0l21,0l0,-3l1,0l0,3M11,529l0,2l8,0l0,-2l3,0l3,0l3,-1l4,-1l3,1l3,0l3,0l3,1l0,2l9,0l0,-1l18,0l0,1l3,0l3,0l3,0l3,0l17,0l0,1l13,0l0,-2l26,0l0,1l3,0l3,1l3,1l3,0l3,0l3,0l3,-1l3,-1l0,1l2,0l0,1l24,0l6,0l0,-2l31,0l2,0l0,1l29,0l3,-1l4,0l3,1l0,-3l20,0l0,1l4,0l29,0l0,3l4,0l0,-2l3,0l3,-1l3,0l3,0l4,-1l3,1l3,1l3,0l0,1l4,0l3,0l3,1l3,1l3,0l3,-2l3,1l3,-1l3,0l3,0l0,-4l5,0l0,2l3,0l3,0l3,1l3,1l3,-1l3,-1l6,0l0,1l22,0l0,1l11,0l0,-3l26,0l0,3l3,0l3,0l4,-1l3,0l3,0l4,1l3,0l0,-4l22,0l0,2l7,0l0,2l28,0l0,-1l9,0l0,-1l15,0l20,0l0,3l20,0l9,0l0,-1l3,0l3,0l3,-1l3,1l3,0l3,0l3,0l3,-1l3,-1l4,0l3,1l3,1l0,1l3,0l3,0l3,0l3,0l3,0l0,-4l3,0l3,-1l3,0l3,0l3,0l3,0l3,0l3,1l3,0l0,3l10,0l0,1l21,0l0,-1l1,0l0,-3l24,0l0,-1l4,0l3,0l3,0l4,0l0,4l16,0l0,-1l15,0l0,-1l13,0M6,562l0,-4l5,0l0,3l3,0l3,0l4,-2l3,0l3,1l3,1l3,0l4,0l3,0l3,0l0,-1l10,0l0,-2l13,0l17,0l15,0l0,-1l15,0l0,5l13,0l0,-1l13,0l18,0l0,-2l3,-1l3,1l26,0l0,-2l4,0l0,5l28,0l7,0l0,-4l3,0l3,-1l4,1l3,0l3,0l4,-1l3,0l3,1l0,1l3,1l3,-1l4,0l3,0l0,-1l12,0l0,2l12,0l0,-1l18,0l0,2l11,0l0,-1l29,0l0,2l4,0l0,-3l3,1l3,-1l4,0l3,-1l3,0l3,0l3,0l4,1l3,0l3,0l0,2l3,0l3,0l3,1l3,0l3,0l3,0l3,0l3,-1l4,0l0,-2l18,0l0,1l8,0l0,-1l3,0l3,0l4,0l3,1l3,1l3,-1l4,-1l3,0l3,0l4,0l3,0l3,-1l4,1l3,0l3,0l3,0l0,1l12,0l0,-2l3,0l4,-1l3,-1l4,1l3,1l0,4l24,0l0,-3l3,1l3,-1l4,1l3,-1l0,2l14,0l0,-1l21,0l0,2l3,0l3,1l4,-2l3,0l3,1l3,0l0,-4l10,0l0,2l15,0l0,1l3,0l3,0l3,0l4,1l3,-1l3,0l3,0l0,1l16,0l0,-2l3,0l3,0l4,1l3,0l3,1l4,-1l3,-1l3,0l0,2l13,0l0,-1l18,0l0,1l6,0l30,0l3,0l0,-4l31,0l0,1l1,0l0,-1l3,0l3,0l4,-1l3,-1M-0,597l3,0l3,0l3,0l3,-1l3,1l0,1l28,0l0,-1l3,0l0,3l20,0l0,-3l4,0l0,3l3,1l3,1l3,-1l3,1l3,0l3,-1l3,-1l0,-3l7,0l0,2l25,0l3,0l0,-3l23,0l0,4l8,0l0,-1l3,-1l3,-1l3,0l3,0l3,0l3,0l3,1l3,1l3,0l3,0l6,0l0,-2l18,0l0,3l3,1l4,0l3,-1l0,-1l10,0l0,-2l3,0l4,-1l3,-1l3,0l3,1l4,1l3,0l0,-1l17,0l0,1l8,0l3,0l3,0l3,0l3,0l3,0l3,0l3,0l0,3l9,0l30,0l0,-3l10,0l0,1l3,0l3,1l3,-1l4,1l3,0l3,-1l3,0l0,-1l14,0l0,3l26,0l0,-4l2,0l0,1l26,0l3,-1l3,0l3,1l3,0l0,1l21,0l0,-2l1,0l0,1l26,0l0,3l4,0l0,-1l20,0l0,-3l21,0l0,4l20,0l0,-4l4,-1l3,1l0,1l29,0l11,0l25,0l4,0l0,2l34,0l0,-2l7,0l0,2l32,0l0,-3l6,0l18,0l0,1l21,0l9,0l0,3l31,0l0,-4l4,0l0,4M0,629l0,-1l3,-1l3,1l3,0l3,0l3,0l0,4l3,0l3,-1l3,0l3,1l3,0l3,1l3,0l3,0l3,-1l0,-5l4,0l0,4l24,0l2,0l3,0l3,0l4,-1l3,1l3,0l3,0l0,-2l6,0l0,3l26,0l0,-1l3,1l3,1l3,-2l0,-2l3,-1l4,0l3,1l4,0l3,0l0,2l4,0l0,-3l27,0l0,3l4,-1l3,1l3,0l3,-1l3,0l3,-2l3,2l3,0l3,1l0,-2l3,0l0,3l3,-1l4,1l3,0l3,0l4,0l3,0l0,-3l15,0l0,3l3,-1l4,-1l3,0l3,0l4,1l3,1l0,-4l5,0l0,4l3,-1l3,1l3,-1l4,2l3,-1l3,0l3,0l0,-2l3,-2l4,2l0,2l3,0l4,0l3,-2l3,0l4,2l3,0l19,0l0,-2l3,-1l3,0l4,1l3,0l3,0l0,-2l3,0l3,0l4,1l3,-1l3,0l0,1l23,0l3,0l4,-2l3,1l4,0l3,1l0,-1l3,0l4,0l4,-1l3,1l0,2l3,-1l4,0l3,-1l3,0l3,0l3,1l4,0l3,1l0,1l12,0l0,1l10,0l19,0l0,-4l4,-1l3,1l3,0l3,-1l3,0l3,-1l3,1l3,1l3,0l3,0l0,2l27,0l0,1l14,0l0,-4l4,1l3,0l4,-1l0,4l25,0l0,-3l4,-1l3,0l3,0l4,1l0,1l26,0l0,2l4,-1l4,1l0,1l3,0l3,0l4,-1l3,-1l3,0l4,0l3,1l3,1l0,-3l7,0l0,3l24,0l0,-4l14,0l0,1l15,0l0,1l21,0l0,2l3,0l0,-1l33,0l7,0l0,-3M0,656l17,0l0,-1l25,0l0,1l4,0l0,1l25,0l1,0l23,0l0,1l2,0l0,-4l24,0l0,1l11,0l0,1l21,0l0,1l8,0l0,-4l19,0l19,0l0,3l9,0l0,-2l29,0l0,2l9,0l0,-2l20,0l0,3l4,0l3,0l4,0l0,1l16,0l0,-4l3,1l4,-1l0,1l3,0l4,0l3,1l3,0l4,-1l3,0l0,-1l5,0l0,2l3,-1l3,0l3,-1l3,0l3,0l3,1l3,1l0,-2l9,0l0,3l4,1l3,1l4,-2l0,-1l28,0l3,-2l3,2l25,0l0,-3l4,0l0,3l3,0l3,0l4,-1l3,1l3,-2l3,2l3,-1l4,1l3,0l3,0l0,-1l2,0l0,-2l29,0l0,4l8,0l0,1l23,0l0,-3l4,0l0,-2l3,1l4,0l3,0l3,0l3,0l4,0l3,-1l0,4l2,0l0,-1l3,0l4,0l3,0l3,1l3,0l4,-1l3,0l0,1l15,0l0,-2l21,0l0,2l3,0l0,-3l34,0l3,0l0,4l23,0l0,-4l5,0l21,0l0,3l5,0l0,-2l19,0l0,-1l10,0l0,1l12,0l0,-1l3,-1l3,0l3,1l0,2l30,0l0,-1l6,0l0,2l15,0l0,-3M17,686l0,1l2,0l0,-2l3,0l3,0l3,0l3,1l3,0l3,1l3,-1l3,0l3,-1l25,0l0,1l12,0l0,2l3,0l3,1l3,0l3,-1l0,-1l18,0l0,-2l8,0l28,0l0,2l12,0l0,-2l14,0l0,-2l3,1l4,0l3,-1l3,2l3,-2l4,0l3,0l0,1l1,0l0,3l21,0l0,1l17,0l21,0l0,-1l3,0l3,-1l4,-1l3,1l3,0l3,1l0,-2l4,0l0,1l19,0l3,0l0,-2l3,0l3,0l3,1l4,1l3,-1l3,0l3,-1l0,2l1,0l0,-2l20,0l0,3l3,1l3,-1l3,1l3,-1l0,-1l4,1l4,-1l0,1l27,0l0,1l7,0l0,-3l24,0l0,-1l5,0l0,3l3,1l3,1l3,0l3,0l4,0l3,-1l3,0l3,0l3,-1l0,-3l4,0l3,1l3,0l3,0l3,0l3,-1l3,1l3,0l3,-1l3,0l3,-1l3,1l3,0l3,0l0,3l24,0l0,-1l3,0l0,-2l25,0l0,4l6,0l0,-2l24,0l8,0l0,-1l3,0l3,0l4,1l3,1l3,0l3,-2l0,1l2,0l40,0l0,-2l28,0l0,2l2,0l0,-2l19,0l0,4l16,0l0,-3l8,0l0,1l15,0l0,-2l7,0l0,3l3,-1l3,1l3,-1l3,1l4,-1l3,1l3,0l3,0l3,0l4,0l3,0l4,0l0,-2l3,1l3,-1l3,0l3,1l3,0l3,0l3,-1l4,0l0,1M4,713l0,3l15,0l0,-3l14,0l0,1l13,0l0,-1l3,0l3,0l3,0l3,0l3,0l3,1l3,-1l3,1l4,-1l3,1l3,0l3,-1l12,0l0,2l18,0l0,1l3,0l4,0l3,0l3,0l3,-1l4,1l3,0l0,-4l13,0l25,0l0,3l1,0l0,1l3,0l4,-1l3,0l3,1l3,0l4,0l3,0l8,0l0,-3l4,-1l3,-1l3,1l4,1l8,0l30,0l0,2l23,0l0,-3l11,0l0,4l11,0l0,-4l3,0l4,0l3,0l3,0l3,1l4,-1l3,0l0,2l4,0l0,1l25,0l0,-3l3,0l0,1l27,0l0,1l4,0l4,0l0,2l26,0l0,-4l5,0l0,3l30,0l0,-1l3,0l0,3l3,-1l3,0l3,1l3,0l3,0l3,0l0,-3l13,0l3,0l3,0l4,1l3,0l3,-1l4,-1l3,1l3,0l0,-2l10,0l13,0l0,3l3,1l3,1l3,0l3,0l3,0l3,-1l3,-1l0,-1l3,0l3,0l3,-1l3,1l3,0l3,0l6,0l0,-1l27,0l0,2l6,0l0,-3l33,0l0,4l3,0l0,-1l29,0l0,1l1,0l0,-2l3,0l3,0l3,0l3,0l3,0l3,-1l3,1l3,0l3,0l4,1l4,-1l3,0l4,0l3,-2l3,1l4,1l3,0l0,1l3,0l0,-1l3,0l3,1l4,0l3,0l3,-1l3,0l3,1l3,0l4,0l3,-1l3,0l0,-2l2,0l0,1l3,0l3,-1l3,0l3,-1l3,0l4,0l3,1l3,0l3,1l3,0l3,0l0,-1l1,0l0,3l3,0M-2,746l3,-1l3,-1l0,-1l24,0l0,1l5,0l0,-1l28,0l0,4l7,0l0,-4l27,0l0,4l3,1l4,-1l4,0l3,0l0,-1l27,0l13,0l0,1l25,0l0,-2l3,0l29,0l0,2l9,0l0,-1l3,-1l4,0l3,1l3,0l0,-3l22,0l0,1l8,0l32,0l0,-1l2,0l0,2l34,0l0,-2l4,0l0,1l3,0l3,0l3,-1l3,-1l4,0l3,0l3,1l3,1l3,0l3,0l3,0l3,0l3,-1l3,0l3,0l3,1l3,0l3,0l0,3l17,0l3,0l4,0l3,-1l4,1l3,0l0,-4l3,1l3,0l4,-1l3,0l3,0l0,4l3,0l3,1l3,1l4,0l3,-1l3,-1l0,-2l16,0l0,2l5,0l0,-4l17,0l0,2l22,0l0,-1l3,1l3,-1l0,-1l3,1l4,1l3,0l4,-1l3,-1l0,1l3,0l3,0l3,1l3,-1l3,1l3,0l3,-1l18,0l0,2l4,0l27,0l0,1l8,0l0,-3l26,0l0,3l7,0l23,0l0,-1l9,0l13,0l0,-1l3,0l3,1l3,1l3,-1l3,-1l0,-1l4,0l4,0l0,-1l20,0l0,4l15,0l0,-1l3,0l3,0l3,0l4,-1l3,0l3,1l3,-1l3,1l0,1l7,0l0,-3l28,0l0,1M4,784l3,-1l3,1l3,-1l3,0l3,0l3,1l3,0l3,0l0,-2l2,0l0,3l3,0l3,0l4,0l3,0l3,-1l3,-1l3,0l3,0l3,1l4,0l3,1l3,0l2,0l0,-2l31,0l0,2l8,0l0,-2l26,0l0,3l14,0l0,-3l9,0l19,0l0,2l10,0l28,0l0,-1l12,0l23,0l0,-1l18,0l0,1l3,0l3,0l3,-1l4,1l3,0l3,0l3,0l4,1l3,-1l0,-2l3,0l4,0l3,-1l3,0l3,-1l3,1l4,1l3,0l0,1l3,0l0,1l38,0l0,1l31,0l0,-1l7,0l0,1l3,1l3,-1l3,-1l3,0l3,0l3,0l3,0l3,0l3,1l3,0l3,0l0,-3l21,0l0,4l14,0l0,-2l19,0l0,2l3,0l0,-3l23,0l0,-1l5,0l0,-1l3,0l3,1l4,0l3,-1l3,0l0,1l22,0l0,1l8,0l14,0l27,0l30,0l0,1l4,0l0,-3l21,0l0,5l9,0l0,-4l22,0l0,-1l4,0l0,3l19,0l0,2l3,-1l3,-1l3,0l3,0l3,0l3,1l3,1l0,-3l3,-1l4,1l4,0l3,0l0,-1l3,1l3,0l3,-1l4,0l3,-1l3,1l3,0l0,4l10,0l16,0l0,-1M-1,813l5,0l0,-1l25,0l0,1l1,0l3,0l3,0l3,0l3,1l3,1l3,0l3,-1l3,1l3,-1l3,-1l3,0l3,0l4,0l0,1l17,0l14,0l0,-3l3,1l4,1l3,-2l0,1l24,0l0,2l5,0l18,0l0,1l22,0M187,812l28,0M227,814l23,0M268,811l20,0l0,3l3,0M324,812l21,0l0,1l19,0l3,0l3,0l3,-1l3,-1l3,0l3,1l3,1l0,-1l10,0l0,3l27,0M435,815l11,0l0,-1l3,1M480,813l9,0M509,815l3,-1l3,1l3,-1l3,1M530,815l6,0l0,-4l3,1l3,0l3,0l3,0l3,1l3,0l3,0l3,-1l3,0l3,-1l0,2l2,0M595,812l3,0l3,-1l3,1l3,0l0,2l22,0l0,-2l4,-1l4,1l0,-1l3,0l3,0l3,0l4,1l3,1l3,-1l3,0l3,-1l0,2l5,0l3,0l3,-1l3,0l3,1l3,-1l3,1l3,-1l3,0l3,0l3,1l0,2l10,0l0,-2l30,0l0,1l2,0M769,812l4,0l0,2l16,0l0,1l10,0l0,-3l13,0l0,-1" fill="none" stroke="#5e6264" stroke-width="1" shape-rendering="crispEdges"/></g><g clip-path="url(#cBig)"><path d="M68,414l-1,3l0,3l-1,3l0,3l-1,3l-1,3l1,3l0,4l-1,3l1,3l0,3l0,3M101,414l0,3l0,3l0,3l0,3l-1,3l1,4l-2,3l0,3l0,3l0,3l-1,3l0,3M138,414l0,3l1,3l-1,3l0,3l1,3l-1,3l-2,4l0,3l1,3l0,3l-1,3l0,3M348,414l-1,3l0,3l-1,3l0,3l1,3l1,3l-1,4l0,3l0,3l0,3l-1,3l0,3M431,414l0,3l-1,3l1,3l0,3l-1,3l0,3l1,4l0,3l1,3l-1,3l-1,3l0,3M467,414l0,3l0,3l-1,3l-1,3l-1,3l-1,3l0,3l0,4l0,3l1,3l0,3l0,3M518,414l0,3l0,3l1,3l-1,3l0,3l0,3l1,4l-1,3l0,3l0,3l0,3l0,3M641,414l0,3l0,3l-1,3l1,3l-1,3l1,3l0,4l0,3l0,3l0,3l-1,3l0,3M673,413l1,4l1,3l-1,3l0,3l-1,3l-1,4l0,3l2,3l0,3l0,3l1,3l0,3M17,451l-3,39M60,451l1,4l-1,3l0,3l0,3l-1,4l1,3l0,3l1,3l0,4l0,3l0,3l1,3M102,451l2,39M151,451l0,3l0,3l0,3l-1,3l1,3l1,3l0,3l-1,3l0,3l-1,3l-1,3l-1,3l0,3M184,451l-3,39M215,451l0,4l1,3l1,3l0,3l1,3l-1,4l1,3l0,3l-1,3l0,4l0,3l-1,3M256,451l0,4l0,3l1,3l1,3l-1,4l1,3l0,3l0,3l0,4l0,3l0,3l0,3M289,451l0,4l0,3l0,3l-1,3l0,4l0,3l0,3l1,3l0,4l1,3l0,3l0,3M327,451l-1,39M357,451l1,39M399,451l3,39M449,451l0,4l0,3l0,3l1,3l0,4l-1,3l1,3l0,3l1,4l0,3l0,3l1,3M500,451l-3,39M553,451l0,3l-1,3l0,3l-1,3l1,3l0,3l0,3l1,3l-2,3l0,3l0,3l-1,3l0,3M595,451l-1,39M636,451l1,39M684,451l0,39M728,451l4,39M759,451l0,39M797,451l0,4l-1,3l0,3l-1,3l1,4l1,3l-1,3l1,3l0,4l1,3l0,3l0,3M29,490l-2,30M68,490l1,30M121,490l1,30M173,490l3,30M203,490l0,4l1,3l1,3l1,3l0,4l-1,3l1,3l-1,4l0,3M285,490l-2,30M386,490l0,30M436,490l1,30M462,490l-2,30M513,490l1,30M579,490l0,4l0,3l1,3l-1,4l-1,3l0,3l-1,3l0,4l0,3M665,490l-1,4l0,3l1,3l0,4l1,3l-1,3l-1,3l0,4l-1,3M696,490l-3,30M727,490l-2,30M781,490l1,30M808,490l0,30M15,520l0,3l1,3l-1,3l0,3l1,3l1,3l1,4l0,3l0,3l0,3l0,3l0,3l-1,3l0,3l0,3M48,520l-2,46M126,520l1,46M159,520l-1,46M203,520l0,3l0,3l1,3l0,3l0,3l-1,4l-1,3l1,3l-1,3l1,3l0,3l-1,3l0,3l0,3l0,3M239,520l2,46M265,520l1,46M298,520l0,3l-1,3l0,3l-1,3l1,3l-1,3l1,4l0,3l-1,3l-1,3l0,3l1,3l0,3l-1,3l0,3M347,520l3,46M413,520l0,3l1,3l1,3l1,3l0,3l0,3l0,3l1,4l-1,3l1,3l-1,3l0,3l0,3l0,3l0,3M466,520l1,3l0,3l0,3l0,3l0,3l1,4l0,3l0,3l0,3l-1,3l-1,3l1,3l0,3l0,3l0,3M511,520l-1,3l0,3l0,3l-1,3l-1,3l0,3l0,4l0,3l0,3l0,3l1,3l0,3l1,3l0,3l0,3M555,520l-4,46M607,520l0,3l0,3l1,3l1,3l0,3l0,3l-1,4l-1,3l0,3l1,3l0,3l1,3l1,3l0,3l0,3M659,520l0,3l-1,3l0,3l0,3l0,3l-1,3l-1,3l-1,3l-1,4l0,3l1,3l0,3l0,3l0,3l0,3M747,520l0,3l1,3l1,3l1,3l0,3l1,3l0,3l0,4l0,3l-1,3l1,3l0,3l0,3l-1,3l0,3M781,520l-3,46M37,566l2,41M73,566l-1,41M116,566l-4,41M160,566l0,3l-1,3l1,4l0,3l0,3l1,3l1,3l-2,3l1,3l-1,3l-1,3l-1,4l1,3M213,566l0,41M257,566l-3,41M294,566l0,3l0,3l1,4l0,3l1,3l-1,3l0,3l-1,3l0,3l-1,3l1,3l-1,4l0,3M430,566l-1,41M469,566l0,3l-1,3l0,4l-1,3l0,3l-2,3l1,3l-1,3l0,3l0,3l1,3l0,3l0,4M652,566l0,3l0,3l-1,4l0,3l-1,3l0,3l0,3l-1,3l1,3l1,3l0,3l0,4l0,3M688,566l1,41M725,566l0,3l0,3l0,4l-1,3l-1,3l0,3l0,3l0,3l0,3l0,3l1,3l0,4l0,3M759,566l1,3l1,3l-1,4l0,3l0,3l1,3l1,3l0,3l0,3l-1,3l0,3l0,4l-1,3M803,566l-4,41M6,607l1,3l0,3l1,3l0,3l0,3l1,3l-1,3l-2,3l0,3l1,3l0,3l-1,3l0,3M48,607l0,3l0,3l0,3l-1,3l0,3l0,3l0,3l0,3l2,3l0,3l0,3l1,3l0,3M77,607l1,39M112,607l-4,39M160,607l0,3l1,3l1,3l0,3l1,3l-1,3l0,3l0,3l1,3l-1,3l0,3l0,3l0,3M200,607l-1,39M253,607l-2,39M328,607l0,39M366,607l0,3l0,3l-1,3l0,3l0,3l0,3l0,3l0,3l0,3l0,3l-1,3l0,3l0,3M407,607l1,39M458,607l0,39M538,607l0,39M589,607l-1,39M634,607l1,3l-1,3l1,3l-1,3l-1,3l0,3l0,3l1,3l0,3l1,3l0,3l1,3l1,3M676,607l-2,39M728,607l0,3l-1,3l-1,3l0,3l0,3l-1,3l0,3l1,3l0,3l-1,3l0,3l0,3l-1,3M765,607l2,39M40,646l0,3l0,3l0,3l-1,3l-1,3l0,3l0,3l1,4l-1,3l-1,3l1,3l-1,3l0,3l0,3M82,646l4,43M132,646l0,43M164,646l0,3l0,3l0,3l0,3l0,3l1,3l-1,4l0,3l1,3l0,3l1,3l0,3l0,3l1,3M210,646l-3,43M259,646l0,43M288,646l0,3l0,3l1,3l0,3l1,3l-1,3l1,4l0,3l0,3l0,3l0,3l-1,3l0,3l-1,3M338,646l0,3l-1,3l1,3l0,3l1,3l0,3l1,3l0,4l-1,3l0,3l0,3l0,3l1,3l0,3M367,646l0,3l0,3l0,3l0,3l0,3l-1,3l0,4l0,3l1,3l-1,3l1,3l1,3l0,3l1,3M395,646l2,43M434,646l2,43M486,646l-3,43M539,646l-1,43M581,646l0,3l0,3l-1,3l0,3l0,3l0,3l-1,3l0,4l0,3l0,3l0,3l0,3l0,3l0,3M630,646l0,3l0,3l1,3l0,3l1,3l-1,3l-1,4l1,3l1,3l0,3l0,3l-1,3l0,3l-1,3M663,646l4,43M738,646l0,3l-1,3l0,3l1,3l0,3l0,3l0,4l-1,3l2,3l-1,3l0,3l0,3l0,3l1,3M771,646l0,3l0,3l0,3l0,3l-1,3l0,3l1,4l1,3l-1,3l0,3l0,3l0,3l-1,3l0,3M49,689l-3,33M88,689l0,4l1,3l0,3l1,3l0,4l2,3l0,3l0,3l0,4l0,3M139,689l-3,33M169,689l0,3l0,4l1,3l-1,3l0,4l0,3l1,3l1,3l0,4l0,3M210,689l2,33M252,689l-3,33M279,689l-1,33M328,689l1,3l0,4l0,3l0,3l0,4l1,3l-1,3l0,3l0,4l0,3M362,689l-1,33M414,689l0,3l0,4l-1,3l-1,3l0,4l0,3l1,3l1,3l0,4l1,3M466,689l-1,33M514,689l3,33M563,689l1,33M598,689l0,3l1,4l0,3l1,3l-1,4l-1,3l1,3l0,3l0,4l-1,3M628,689l0,3l1,4l0,3l1,3l0,4l0,3l0,3l-1,3l-1,4l0,3M665,689l0,3l0,4l-1,3l1,3l0,4l1,3l0,3l-1,3l-1,4l-1,3M702,689l-3,33M754,689l1,33M42,722l0,3l0,3l0,3l-1,4l0,3l0,3l0,3l-1,3l0,3l1,3l0,4l1,3l0,3l0,3l0,3M81,722l0,3l-1,3l0,3l0,4l1,3l0,3l0,3l1,3l0,3l0,4l-1,3l0,3l-1,3l-1,3l0,3M132,722l0,47M185,722l4,47M223,722l4,47M274,722l0,3l-1,3l0,3l-1,3l0,4l0,3l-1,3l1,3l0,3l-1,3l0,3l0,4l1,3l0,3l0,3M320,722l-1,47M364,722l0,47M405,722l0,3l0,3l0,3l-1,4l1,3l0,3l1,3l-1,3l0,3l1,3l-1,4l0,3l0,3l0,3l1,3M457,722l1,3l0,3l0,3l1,3l0,4l0,3l0,3l0,3l-1,3l0,3l0,4l0,3l1,3l0,3l0,3M494,722l1,47M523,722l0,3l0,3l1,3l0,4l0,3l2,3l-1,3l1,3l1,3l1,3l0,3l0,4l-1,3l0,3l0,3M551,722l0,3l0,3l-1,3l0,4l0,3l1,3l1,3l0,3l1,3l0,3l0,4l-1,3l0,3l0,3l0,3M600,722l-3,47M641,722l-2,47M674,722l-2,47M754,722l-4,47M34,769l2,31M82,769l0,3l0,3l1,4l-1,3l0,3l-1,3l0,3l0,3l0,3l-1,3M145,769l3,31M192,769l-4,31M229,769l-1,3l0,3l0,3l0,4l-2,3l1,3l0,3l0,3l0,3l0,3M345,769l2,31M380,769l0,31M412,769l-4,31M459,769l1,31M487,769l3,31M516,769l3,31M543,769l-3,31M591,769l0,3l0,3l-1,4l0,3l1,3l0,3l0,3l0,3l0,3l0,3M627,769l-1,3l0,3l-1,3l-1,3l-1,3l-1,4l0,3l0,3l1,3l0,3M659,769l0,3l0,3l-1,3l0,4l-2,3l-1,3l0,3l0,3l0,3l0,3M685,769l0,3l0,3l0,4l0,3l-1,3l0,3l1,3l1,3l0,3l0,3M718,769l-1,31M748,769l0,31M799,769l-2,31M64,800l0,3l1,4M131,800l1,3l0,4M274,800l0,3l1,4M344,800l0,3l0,4M379,800l0,3l0,4M457,800l0,3l0,4M669,800l-1,3l0,4M5,451l3,1l3,1l3,-1l3,0l0,-3l7,0l0,1l36,0l9,0l0,-1l32,0l0,4l1,0l0,-3l37,0l0,3l12,0l0,-3l33,0l0,2l3,0l3,1l3,0l3,1l4,0l3,0l3,0l3,-1l3,-1l3,0l12,0l0,2l29,0l0,-3l14,0l0,-2l19,0l0,5l8,0l0,-5l3,0l3,0l3,1l3,0l3,-1l3,1l3,1l3,-1l3,0l3,-1l0,5l21,0l0,-4l3,-1l3,-1l3,2l0,2l42,0l31,0l0,1l3,0l3,0l4,-1l3,0l3,0l3,1l0,-2l3,0l3,1l3,-1l3,1l3,0l3,-1l0,-1l3,0l3,0l3,1l3,0l3,0l3,0l3,0l3,-1l3,0l3,0l3,0l0,3l19,0l0,1l3,0l3,0l3,0l3,0l3,-1l4,0l3,0l3,0l3,0l3,0l3,1l0,-2l4,0l0,1l38,0l0,-4l41,0l5,0l0,1l31,0l0,1l12,0l0,-1l38,0l6,0l0,2l3,0l4,-1l3,0l3,-1l4,1l3,1l0,-2l11,0l0,2l17,0l0,-2l21,0M17,488l0,3l12,0l3,0l3,1l3,0l3,-1l3,-1l4,0l3,1l3,0l3,0l3,0l0,-2l8,0l0,1l3,0l3,1l3,-1l3,-1l3,-1l4,0l3,0l3,0l3,1l3,1l3,0l0,2l19,0l0,-3l30,0l0,1l22,0l0,-2l4,0l3,-1l4,1l0,1l19,0l0,-1l12,0l0,5l31,0l0,-1l10,0l0,-2l29,0l0,1l4,0l0,1l3,0l3,0l3,-1l4,0l3,0l3,-1l3,1l3,0l4,1l3,0l3,0l3,0l0,-4l3,1l4,-1l0,1l3,0l4,0l3,1l3,1l3,-1l4,0l3,-1l0,1l29,0l0,1l13,0l0,1l37,0l0,-4l13,0l0,3l13,0l0,-1l3,0l3,1l4,-1l3,-1l3,0l3,-1l3,0l3,1l3,1l4,0l3,0l3,0l0,3l13,0l0,-1l31,0l0,-4l3,0l3,0l3,0l0,2l3,0l4,1l3,-1l3,0l3,-1l3,0l4,1l3,0l0,3l16,0l0,-5l21,0l0,1l20,0l0,2l3,1l3,-1l4,0l3,-1l3,0l3,1l4,0l3,0l3,0l0,1l19,0l0,-1l12,0l0,1l31,0l0,-3l1,0l0,2l31,0l0,-1l22,0l0,-2l16,0l4,-1l3,1l4,0M15,519l14,0l0,1l19,0l0,2l3,0l4,-1l3,0l3,1l4,0l3,0l0,-4l3,1l3,1l3,-2l0,1l44,0l0,1l5,0l0,1l33,0l0,-1l14,0l0,-2l3,0l3,0l3,-1l3,-1l3,0l3,0l3,1l3,0l3,1l3,0l0,1l36,0l0,1l3,0l4,0l0,2l19,0l0,-3l20,0l0,1l13,0l0,2l3,0l3,-1l3,0l3,-1l3,0l3,0l3,0l3,0l3,0l3,1l3,1l3,0l13,0l0,-3l38,0l0,2l1,0l0,-1l3,1l3,-1l3,0l3,0l3,-1l3,1l3,0l3,0l3,0l0,1l3,-1l4,0l3,1l3,0l3,1l4,-1l3,0l0,-2l26,0l0,1l4,0l0,1l3,0l3,0l3,-1l3,0l3,1l3,-1l3,1l3,1l3,0l3,-1l3,0l3,0l3,0l3,0l3,0l0,-1l2,0l0,-1l31,0l0,1l11,0l24,0l0,1l28,0l0,-2l9,0l43,0l0,2l6,0l0,-2l3,0l3,0l3,1l3,-1l3,0l4,1l3,0l3,0l3,-1l3,0l0,1l4,1l3,-1l3,0l4,0l0,1l17,0l3,-1l4,-1l3,1l3,-1l4,1l3,1l3,0l3,0l3,0l3,0l3,1l4,0l3,1l3,0l3,-1l3,0l3,-1l0,-2l27,0l0,2M15,565l0,1l22,0l4,1l3,1l4,-2l0,2l3,0l3,1l3,0l3,0l4,-1l3,1l3,-1l3,0l4,0l0,-2l39,0l0,1l3,0l4,0l3,0l33,0l0,2l1,0l0,-4l43,0l0,2l3,-1l4,0l3,1l0,-2l26,0l0,1l18,0l0,3l8,0l0,-3l29,0l0,2l4,0l0,-1l48,0l1,0l0,2l38,0l0,-2l7,0l0,-2l3,-1l3,1l3,0l3,-1l3,1l3,0l3,0l0,2l3,-1l4,0l3,0l4,1l3,0l0,1l36,0l0,-2l3,0l0,-1l3,0l3,1l3,0l3,0l3,1l3,-1l3,1l3,0l3,-1l3,0l3,0l3,-1l3,0l3,0l0,1l12,0l0,-2l32,0l21,0l0,3l26,0l5,0l0,-2l3,0l3,0l3,0l3,0l3,1l3,1l3,0l3,0l3,0l3,-1l3,0l3,0l3,0l3,-1l3,0l0,3l7,0l0,-2l29,0l0,-1l22,0l15,0l0,3l22,0l0,-1l3,0l3,0l3,1l3,-1l0,1l3,0l3,1l3,0l4,1l3,0l3,-1l3,-1l0,-1l22,0l0,-1M6,608l0,-2l31,0l0,-1l11,0l0,2l25,0l0,-2l4,0l0,2l35,0l0,-2l4,0l0,-1l3,0l3,0l3,1l4,0l3,1l3,0l3,0l3,0l3,0l3,0l4,0l3,-1l3,0l3,-1l0,1l3,0l3,0l3,0l3,0l3,0l3,-1l4,0l3,1l3,1l3,0l3,0l3,-1l3,0l0,1l3,0l3,0l4,-1l3,1l0,1l40,0l4,0l0,-1l37,0l0,-1l5,0l0,1l29,0l18,0l0,1l20,0l0,-1l26,0l0,2l15,0l0,-3l3,1l4,0l3,-1l3,0l3,1l4,-1l3,0l0,2l28,0l0,2l11,0l0,-4l41,0l0,1l3,1l3,0l4,0l3,-1l15,0l0,2l38,0l0,-4l3,0l3,1l4,0l3,-1l0,4l13,0l0,-1l3,-1l3,0l4,-1l3,0l3,0l3,2l3,0l4,0l3,-1l3,1l3,0l3,-1l3,1l3,-1l3,0l3,1l24,0l0,2l12,0l0,-3l3,-1l3,1l3,-1l3,-1l3,0l3,-1l4,0l3,1l3,0l3,1l3,0l3,1l0,-1l3,0l0,-1l31,0l0,4l6,0l3,0l3,0l3,-1l4,0l3,0l3,0l3,1l3,1l4,-1l3,0l3,0l3,0l0,-2M6,648l0,-3l3,0l3,0l3,0l3,-1l3,-1l4,0l3,0l3,0l3,1l3,0l3,1l0,1l8,0l0,-1l3,0l3,0l4,0l3,0l3,-1l3,1l4,0l3,0l3,0l0,1l5,0l0,1l30,0l0,-3l20,0l0,4l28,0l0,-4l4,0l0,3l36,0l0,1l3,-1l4,0l3,1l0,-4l43,0l0,4l3,-1l3,1l3,0l3,1l4,0l3,0l3,1l3,-1l4,0l3,-1l3,0l11,0l0,-1l29,0l0,-2l10,0l0,-1l3,0l3,0l3,1l3,0l4,0l3,1l3,-1l3,0l3,-1l0,1l1,0l3,-1l3,0l3,-1l3,1l4,-1l3,0l3,0l3,1l3,1l12,0l0,3l3,0l3,0l3,1l3,0l3,0l3,-1l3,0l3,0l3,0l0,-2l24,0l0,1l28,0l0,1l24,0l0,-3l28,0l0,2l1,0l0,1l42,0l0,-4l4,-1l4,1l0,2l3,0l3,0l3,-1l4,0l3,0l3,-1l3,0l3,0l3,1l4,0l3,0l3,1l3,0l0,1l4,0l0,-1l29,0l13,0l0,-2l31,0l0,1l21,0l0,2l3,-1l4,-1l3,2l0,-2l27,0l3,0l3,0l0,2M40,689l0,2l9,0l0,-2l33,0l0,2l3,0l3,0l3,0l3,0l3,0l4,0l3,0l3,1l3,0l3,1l3,0l3,0l4,0l3,-1l3,0l3,-1l0,-1l7,0l0,-3l3,0l3,0l3,0l4,1l3,0l3,0l3,-1l3,0l0,1l5,0l0,1l3,0l3,0l3,0l4,0l3,-1l3,0l3,1l3,1l3,-1l4,1l3,0l3,0l3,-1l0,1l42,0l0,-2l4,0l3,0l20,0l0,3l9,0l0,-3l40,0l10,0l0,3l24,0l0,-3l5,0l0,-1l28,0l0,4l3,0l3,1l3,1l4,-1l3,-1l3,0l20,0l0,-2l32,0l0,1l20,0l3,0l3,-1l3,-1l3,0l4,0l3,0l3,0l3,1l3,1l25,0l0,-1l24,0l0,1l18,0l0,-1l17,0l30,0l0,-2l2,0l0,1l33,0l0,4l2,0l0,-4l3,0l3,-1l3,0l3,0l3,0l4,-1l3,1l3,-1l3,1l3,0l3,0l3,1l0,3l5,0l0,1l3,0l3,0l3,0l3,-1l3,0l4,0l3,0l3,0l3,0l3,1l0,-1l16,0l0,-3l17,0l0,1l32,0l0,-2M42,721l0,-1l7,0l0,3l32,0l0,-2l3,0l4,0l0,3l3,0l3,0l3,1l4,-1l3,1l3,-1l3,2l3,-1l3,-1l3,0l4,0l3,1l3,-1l3,0l0,-2l4,1l3,-1l0,-1l30,0l0,3l3,-1l3,1l4,-2l3,1l3,1l0,-2l25,0l0,-1l13,0l0,-1l29,0l0,2l22,0l5,0l0,-2l3,0l3,0l3,0l4,0l3,0l3,0l3,0l3,1l3,-1l4,0l3,0l3,0l3,0l0,3l8,0l0,-2l34,0l0,-1l2,0l0,2l41,0l0,1l3,-1l3,0l3,1l0,-3l43,0l0,2l3,0l3,-1l3,1l0,-1l28,0l0,-1l3,0l4,-1l3,1l3,0l4,1l3,-1l0,2l9,0l0,-2l28,0l12,0l0,4l35,0l0,-1l2,0l0,-1l28,0l3,-1l3,-1l4,0l3,2l0,-2l24,0l0,3l9,0l0,-1l28,0l7,0l0,-1l45,0l0,1l47,0l0,-1l2,0l0,3M34,769l0,3l8,0l0,-3l39,0l1,0l0,1l3,0l3,0l4,-1l3,-1l3,0l3,0l3,1l4,1l3,0l3,0l3,0l3,-1l3,0l3,1l3,-1l3,1l0,-1l13,0l0,1l3,0l3,0l3,0l3,-1l3,-1l3,0l4,0l3,0l3,0l3,1l3,0l3,1l3,0l0,1l7,0l0,1l31,0l0,-1l6,0l0,-1l29,0l0,1l3,-1l3,-1l4,1l3,0l3,1l0,-3l3,1l3,0l3,0l4,0l3,1l3,-1l3,-1l0,2l24,0l25,0l0,2l19,0l0,-4l16,0l0,2l25,0l0,1l7,0l0,-1l45,0l0,1l2,0l0,-2l28,0l0,-1l7,0l0,-1l3,-1l3,0l3,0l4,1l3,0l3,0l3,0l0,4l4,0l3,0l0,-3l20,0l0,1l4,0l4,0l0,-1l40,0l0,-1l9,0l3,0l3,0l3,0l3,1l3,-1l3,0l3,0l3,0l3,0l0,2l14,0l18,0l15,0l0,3l4,0l3,-1l4,1l0,-3l24,0l0,-1l9,0l30,0l0,-1l6,0l45,0l0,1l2,0l0,1l3,1l3,-1M3,799l3,-1l3,0l3,0l4,0l3,2l3,-1l3,0l3,1l3,0l3,-1l0,2l3,0l0,-3l27,0l0,4l18,0l0,-1l4,0l3,0l3,0l4,0l0,1l3,1l3,-1l3,1l3,0l3,0l3,-1l17,0l0,-2l3,0l4,0l4,0l3,0l0,-1l3,0l4,0l3,1l3,1l3,-1l4,0l3,-1l0,2l3,0l3,0l3,0l3,1l3,0l3,-1l3,0l3,0l0,-1l10,0l0,2l27,0l0,-3l17,0l0,1l12,0l0,-2l3,0l3,1l4,-1l3,0l3,0l22,0l7,0l0,1l41,0l0,2l1,0l0,-2l34,0l1,0l0,1l3,0l3,-1l4,0l3,0l3,0l3,1l3,0l4,-1l3,0l3,1l0,2l11,0l0,-1l34,0l0,-1l2,0l0,1l3,0l3,0l3,0l3,-1l4,1l3,1l3,1l3,-1l3,-1l0,-1l3,0l3,-1l3,0l3,1l3,0l0,-1l4,0l3,0l3,1l4,-1l0,3l3,0l3,0l3,0l3,-1l3,0l3,0l3,0l3,0l3,1l0,-1l3,0l4,-1l3,1l0,-2l3,0l3,0l3,0l3,-1l3,-1l3,1l3,1l3,-1l3,-1l3,1l3,1l3,0l0,3l2,0l0,-3l31,0l0,1l5,0l0,-2l32,0l0,1l10,0l0,2l16,0l0,-3l14,0l0,4l19,0l0,-3l21,0l0,3l9,0l0,-2l3,0l3,0l3,-1l3,0l3,-1l3,1l4,-1l3,0l3,1l3,0l3,0l3,1l3,0l3,0l0,1l4,-1l4,1l0,-3" fill="none" stroke="#5e6264" stroke-width="1" shape-rendering="crispEdges"/></g><g clip-path="url(#cSmall)"><path d="M212,6l1,3l0,3l0,3l0,3l-1,3l1,3l-1,3l-1,3l0,3l1,3l0,3l1,3l0,3l1,3l0,3l1,3l0,3M251,6l-1,3l0,3l-1,3l0,3l0,3l1,3l0,3l0,3l0,3l0,3l-1,3l-1,3l1,3l0,3l0,3l0,3l0,3M486,6l0,3l0,3l0,3l-1,3l0,3l0,3l0,3l1,3l0,3l1,3l-1,3l0,3l-1,3l-1,3l0,3l-1,3l0,3M535,6l0,3l-1,3l0,3l-1,3l0,3l1,3l0,3l0,3l-1,3l-1,3l-1,3l0,3l-1,3l1,3l0,3l0,3l0,3M604,6l-1,3l-1,3l0,3l-1,3l1,3l-1,3l1,3l-1,3l1,3l0,3l0,3l0,3l1,3l0,3l-1,3l0,3l-1,3M792,6l0,3l0,3l-1,3l1,3l0,3l-2,3l1,3l2,3l0,3l0,3l0,3l-1,3l0,3l0,3l-1,3l-1,3l0,3M242,57l0,3l0,3l-1,3l0,3l0,3l0,3l-1,3l-1,3l0,3l0,3l0,3l1,3l0,3l0,3l0,4l1,3M288,57l3,49M405,57l-2,49M465,57l0,49M512,57l2,49M546,57l0,3l0,3l0,3l-1,3l1,3l-1,3l-1,3l0,3l0,3l-1,3l-1,3l0,3l0,3l0,3l1,4l0,3M606,57l0,3l0,3l0,3l0,3l-1,3l1,3l-1,3l1,3l0,3l1,3l0,3l-1,3l1,3l-1,4l0,3l0,3M649,57l0,49M687,57l-3,49M746,57l0,3l0,3l0,3l-1,3l0,3l-2,3l1,3l-1,3l1,3l0,3l-1,3l1,3l-1,3l0,4l0,3l-1,3M781,57l0,3l0,3l1,3l1,3l0,3l0,3l0,3l0,3l-1,3l-1,3l0,3l0,3l0,3l-1,4l0,3l0,3M221,106l0,3l-1,3l-1,3l-1,3l0,3l1,3l-1,3l1,4l-1,3l1,3l-1,3l0,3l1,3l-1,4l-1,3M257,106l2,47M302,106l1,47M344,106l3,47M406,106l-1,47M441,106l-2,47M500,106l2,47M552,106l0,3l0,3l0,3l0,3l0,3l-1,3l0,4l2,3l1,3l-1,3l-1,3l1,3l0,3l0,4l0,3M586,106l0,47M620,106l0,3l0,3l0,3l0,3l0,3l0,3l0,4l0,3l1,3l0,3l0,3l0,3l1,3l0,4l0,3M719,106l1,47M752,106l0,47M237,153l2,40M328,153l0,3l-1,3l0,3l0,3l-1,3l1,4l1,3l0,3l1,3l0,3l0,3l1,3l0,3M363,153l0,40M401,153l0,3l0,3l0,3l-1,3l-1,3l0,4l0,3l2,3l-1,3l1,3l1,3l0,3l1,3M433,153l-2,40M489,153l3,40M525,153l0,40M598,153l3,40M669,153l-3,40M708,153l-2,40M761,153l-4,40M228,193l-2,49M286,193l-3,49M319,193l1,49M355,193l1,3l0,4l0,3l1,3l1,3l1,3l0,3l0,3l1,3l0,3l-1,3l0,3l0,3l0,3l0,3l0,3M413,193l-3,49M462,193l-3,49M504,193l0,3l1,4l0,3l1,3l1,3l0,3l0,3l0,3l0,3l1,3l-1,3l0,3l-1,3l0,3l0,3l0,3M540,193l0,3l0,4l1,3l0,3l0,3l1,3l-1,3l1,3l-1,3l1,3l0,3l0,3l-1,3l0,3l-1,3l1,3M574,193l0,3l0,4l-1,3l-1,3l0,3l0,3l0,3l0,3l0,3l0,3l1,3l0,3l0,3l1,3l0,3l1,3M623,193l0,3l-1,4l1,3l0,3l1,3l1,3l1,3l0,3l0,3l0,3l0,3l0,3l-1,3l0,3l0,3l0,3M738,193l0,3l1,4l1,3l0,3l1,3l-1,3l-1,3l0,3l1,3l1,3l0,3l1,3l0,3l0,3l-1,3l0,3M793,193l2,49M244,242l-3,49M284,242l0,3l0,3l0,4l-1,3l1,3l1,3l-1,3l-1,3l-1,3l1,3l0,3l0,3l1,3l0,3l1,3l1,3M322,242l3,49M362,242l-3,49M397,242l0,3l0,3l0,3l0,4l0,3l-1,3l0,3l1,3l1,3l0,3l0,3l0,3l-1,3l1,3l-1,3l0,3M451,242l-1,3l0,3l1,4l-1,3l1,3l-1,3l-2,3l1,3l-1,3l-1,3l0,3l0,3l-1,3l1,3l0,3l0,3M483,242l0,3l-1,3l-1,3l0,3l0,4l0,3l0,3l0,3l0,3l-2,3l0,3l1,3l0,3l1,3l-1,3l0,3M533,242l0,3l0,3l0,3l1,4l0,3l0,3l-1,3l-1,3l0,3l0,3l0,3l0,3l0,3l1,3l0,3l0,3M616,242l1,3l-1,3l0,3l0,4l0,3l0,3l-1,3l1,3l0,3l-1,3l-1,3l0,3l1,3l0,3l1,3l0,3M656,242l-3,49M699,242l-1,49M746,242l1,49M781,242l-3,49M243,291l0,3l0,3l-1,3l0,3l-1,3l0,3l0,4l0,3l1,3l1,3l0,3l0,3l0,3l0,3l0,3M277,291l-1,46M387,291l0,46M496,291l-3,46M527,291l3,46M590,291l-1,46M625,291l4,46M678,291l1,3l0,3l-1,3l0,4l0,3l1,2l0,4l1,3l0,3l0,3l1,3l0,3l0,3l0,3l1,3M720,291l0,3l-1,3l1,3l0,3l1,4l-1,3l1,3l0,3l0,3l-1,3l-1,3l0,3l0,3l-1,3l0,3M756,291l-1,46M792,291l-1,3l0,3l0,3l1,3l-1,3l-1,3l0,3l0,3l0,4l0,3l0,3l1,3l-1,3l-1,3l0,3M254,337l2,48M316,337l1,48M351,337l1,3l1,3l1,3l0,3l0,3l0,3l0,3l1,3l1,3l0,2l0,4l0,3l0,3l-1,3l0,3l0,3M397,337l0,3l0,3l0,3l1,3l1,3l0,3l0,3l1,3l-1,3l0,3l-1,3l1,3l1,3l0,3l-1,3l0,3M437,337l0,3l-1,3l0,3l0,3l0,4l0,3l0,3l-1,3l1,3l1,4l-1,3l1,3l-1,3l0,3l-1,4M474,337l0,3l0,3l1,3l1,3l0,3l1,3l0,3l1,3l1,2l0,4l0,3l-1,3l0,3l0,3l0,3l0,3M515,337l-4,48M572,337l-1,3l0,3l0,3l0,3l-2,3l1,3l0,3l1,3l-1,3l0,3l0,3l0,3l-1,3l0,3l-1,3l0,3M605,337l3,48M664,337l-3,48M722,337l3,48M775,337l4,48M222,385l-1,38M260,385l0,3l0,3l0,3l1,4l1,3l-1,3l1,3l0,3l-1,4l0,3l0,3l0,3M314,385l-3,38M373,385l2,38M461,385l2,38M518,385l-2,38M555,385l1,3l-1,3l0,3l1,4l0,3l0,3l0,3l0,4l-1,3l1,3l1,3l1,3M617,385l0,3l0,3l1,3l0,4l0,3l1,3l0,3l-1,4l0,3l0,3l0,3l0,3M650,385l0,38M702,385l2,38M753,385l1,38M799,385l-2,38M242,423l3,51M297,423l0,4l0,3l0,3l0,3l0,3l0,3l1,3l0,4l0,3l1,3l1,3l-1,3l1,3l0,3l0,3l0,4M338,423l0,4l0,3l0,3l0,3l2,3l0,3l0,3l1,3l1,4l-1,3l0,3l-1,3l1,3l0,3l-1,3l0,4M377,423l0,4l1,3l0,3l1,3l-1,3l-1,3l1,3l0,4l-1,3l1,3l0,3l-1,3l0,3l-1,3l0,3l-1,4M433,423l1,51M486,423l0,4l1,3l0,3l1,3l0,3l0,3l1,3l0,3l0,4l1,3l0,3l0,3l-1,3l0,3l0,3l0,4M526,423l0,4l0,3l1,3l0,3l1,3l0,3l0,3l-1,4l1,3l-1,3l-1,3l-1,3l0,3l-1,3l0,3l1,4M562,423l4,51M596,423l0,51M642,423l0,4l0,3l0,3l0,3l1,3l0,3l0,3l-1,4l0,3l0,3l0,3l-1,3l0,3l0,3l-1,3l0,4M700,423l-2,51M742,423l1,51M792,423l0,51M263,474l-3,44M315,474l0,3l1,3l-1,3l0,3l0,3l-1,4l1,3l-1,3l1,3l0,3l0,3l1,3l1,4l0,3M374,474l3,44M464,474l0,3l0,3l-1,3l1,3l1,3l0,3l0,4l0,3l0,3l0,3l0,3l0,3l0,4l0,3M499,474l-3,44M536,474l0,3l-1,3l1,3l0,3l1,3l0,3l1,4l0,3l0,3l0,3l-1,3l-1,3l0,4l0,3M576,474l0,44M650,474l4,44M693,474l-1,44M753,474l0,3l0,3l1,3l1,3l-1,3l1,3l1,4l0,3l0,3l0,3l-1,3l0,3l-1,4l0,3M787,474l3,44M233,518l0,56M292,518l2,56M342,518l-3,56M399,518l1,56M446,518l-4,56M484,518l0,3l0,3l0,3l-1,3l-1,3l0,4l0,3l1,3l-1,3l1,3l0,3l0,3l-1,4l-1,3l0,3l1,3l0,3l0,3M585,518l-4,56M639,518l3,56M701,518l0,56M762,518l-2,56M216,574l0,3l0,4l0,3l0,3l0,3l1,3l-1,4l-1,3l-1,3l0,3l0,3l0,3l0,3M263,574l0,3l0,4l-1,3l0,3l-1,3l1,3l0,3l0,4l1,3l-1,3l0,3l0,3l0,3M301,574l-1,3l0,4l1,3l-1,3l0,3l-1,3l-1,3l1,4l-1,3l0,3l0,3l1,3l0,3M352,574l-1,3l1,4l-1,3l-1,3l0,3l0,3l1,4l1,3l0,3l1,3l0,3l0,3l0,3M382,574l4,41M420,574l-1,41M468,574l-3,41M544,574l-2,41M589,574l-3,41M659,574l-1,3l-1,4l0,3l-1,3l1,3l0,3l-1,3l0,4l-1,3l1,3l0,3l0,3l1,3M692,574l0,41M748,574l1,3l0,4l0,3l0,3l0,3l-1,3l0,3l0,4l0,3l0,3l0,3l-1,3l0,3M795,574l2,41M227,615l1,51M305,615l1,51M347,615l-3,51M397,615l-1,4l0,3l0,3l0,3l-1,3l0,3l0,4l0,3l0,3l-1,3l0,3l-1,3l-1,4l1,3l0,3l0,3M471,615l1,51M513,615l-3,51M564,615l2,51M624,615l-3,51M680,615l0,4l0,3l0,3l1,3l0,3l0,3l-1,4l1,3l-1,3l1,3l0,3l-1,4l1,3l0,3l1,3l1,3M743,615l-4,51M787,615l-1,51M245,666l0,3l0,4l0,3l-1,3l-1,3l-1,3l1,4l0,3l1,3l0,3l1,4l-1,3l0,3M290,666l3,42M345,666l0,3l0,4l0,3l0,3l0,3l1,4l-1,3l1,3l0,3l0,3l-1,4l0,3l-1,3M399,666l4,42M451,666l4,42M492,666l4,42M530,666l-3,42M576,666l0,42M632,666l1,42M668,666l2,42M699,666l-3,42M733,666l0,3l-1,4l0,3l1,3l-1,3l-1,3l0,4l1,3l0,3l0,3l0,4l-1,3l0,3M206,753l0,3M258,708l-3,48M292,708l-3,48M348,708l1,3l0,3l0,3l-1,3l0,3l0,3l0,3l0,3l0,3l0,3l1,3l1,3l1,3l0,3l0,3l1,3M392,708l0,3l0,3l-1,3l1,3l-1,3l1,3l0,3l0,3l0,3l-1,3l0,3l1,3l0,3l0,3l-1,3l0,3M427,708l2,48M490,708l0,3l0,3l-1,3l-1,3l-1,3l0,3l0,3l-1,3l0,3l1,3l0,3l0,3l0,3l0,3l0,3l0,3M525,708l0,48M560,708l0,3l0,3l-1,3l-1,3l-1,3l1,3l0,3l-1,3l1,3l1,3l0,3l-1,3l0,3l0,3l1,3l-1,3M619,708l1,48M673,708l3,48M706,708l2,48M757,708l0,3l0,3l0,3l1,3l0,3l0,3l-1,3l1,3l-1,3l0,3l1,3l-1,3l0,3l-1,3l0,3l0,3M802,708l-3,48M249,756l2,43M391,756l0,3l-1,3l-1,3l0,3l-1,3l0,3l1,4l1,3l-1,3l0,3l0,3l0,3l0,3l0,3M424,756l-1,43M470,756l0,3l0,3l0,3l1,3l0,4l1,3l0,3l1,3l0,3l1,3l0,3l-1,3l0,3l0,3M505,756l2,43M559,756l0,3l0,3l0,3l0,4l0,3l-1,3l0,3l1,3l1,3l0,3l0,3l1,3l1,3l0,3M597,756l3,43M686,756l3,43M742,756l4,43M795,756l3,43M337,799l0,3l0,3l0,3M398,799l0,3l0,3l1,3M672,799l0,3l0,3l1,3M212,3l39,0M294,3l3,0l3,0l3,0M315,3l3,0l27,0l0,1l4,0M401,4l3,0M433,4l3,0l3,0l3,-1l3,1l4,0l3,-1l3,0l3,1l3,0l0,1l3,0l4,1l3,0l3,-1l3,1l3,0l4,-1l3,0M535,4l11,0M604,5l36,0l0,-1l3,0M678,5l3,0l3,0l3,0l3,0l3,0l3,1l3,-1l3,0l0,-1l31,0l6,0M771,3M212,57l0,2l30,0l0,-3l9,0l0,3l3,0l3,0l3,0l3,0l3,2l4,0l3,-1l3,0l3,0l3,-1l3,0l3,0l0,-3l3,0l3,0l0,3l48,0l0,-3l3,0l0,-1l3,0l3,0l3,-1l3,0l4,0l3,0l3,0l3,0l3,1l3,0l3,0l3,0l3,0l4,1l3,0l3,0l3,0l3,-1l0,4l4,0l0,-4l3,0l3,0l3,-1l3,1l4,1l3,0l3,-1l3,0l3,0l0,3l32,0l0,-2l3,1l3,0l3,1l4,0l3,0l3,-1l3,-1l0,-1l3,0l3,-1l3,0l4,0l3,0l3,0l3,1l3,0l0,1l23,0l0,2l4,0l3,-1l4,1l0,-3l3,-1l3,1l3,0l3,-1l3,1l3,0l3,0l3,0l3,0l3,1l3,0l3,0l3,0l4,1l3,-1l3,0l3,0l3,-1l3,0l0,3l2,0l0,-1l3,0l3,-1l3,-1l3,0l3,1l3,-1l4,1l3,1l3,-1l3,0l3,0l3,1l0,-3l3,0l3,0l0,5l3,0l3,0l4,0l3,0l3,-1l3,0l4,0l3,0l3,1l0,-2l9,0l0,2l52,0l0,-2l3,0l4,0l0,2l3,0l3,0l4,1l3,0l3,0l3,-1l3,0l3,1l4,-1l3,0l3,0l0,-1l11,0l0,1M221,106l21,0l0,-3l15,0l0,5l31,0l0,-1l14,0l0,-3l3,1l3,0l3,0l3,-1l3,0l3,0l4,0l3,0l3,0l3,0l3,0l3,0l3,0l2,0l0,2l61,0l0,1l1,0l0,-3l35,0l0,3l3,-1l3,0l3,-1l3,1l3,1l3,1l3,-1l3,0l0,-2l3,0l3,0l4,0l3,-1l3,0l3,0l3,0l3,1l4,1l3,-1l3,0l12,0l3,0l3,-1l3,1l3,-1l3,0l4,1l3,0l3,0l3,0l3,0l3,0l6,0l34,0l0,-1l3,0l4,0l3,0l3,-1l4,1l3,0l14,0l0,3l3,0l3,0l4,-1l3,-1l3,0l3,0l4,1l3,1l3,0l0,-1l33,0l0,-1l5,0l0,2l32,0l27,0l0,-1l6,0l0,-1l3,0l3,0l4,1l3,0l3,-1l3,1l4,1l3,-1l3,-1l0,2l11,0l0,1M221,153l3,0l3,0l4,1l3,0l3,-1l0,-3l20,0l0,2l18,0l27,0l0,3l26,0l0,-4l3,-1l3,0l4,0l3,1l3,0l0,3l3,0l3,1l4,0l3,-2l3,0l3,1l0,1l38,0l5,0l0,-2l27,0l0,1l8,0l0,-3l3,-1l3,0l3,-1l3,0l3,0l3,0l3,-1l3,0l3,0l3,1l3,0l3,0l3,0l3,1l3,1l3,0l11,0l3,1l3,0l3,-1l3,-1l4,-1l3,1l3,1l3,0l0,3l3,1l3,0l3,1l3,-1l3,1l3,0l3,0l3,-1l3,-1l0,-3l8,0l26,0l0,2l12,0l0,-2l22,0l0,3l3,0l4,1l3,0l4,-1l3,0l3,1l3,-1l4,0l3,-1l3,-1l3,1l3,0l4,0l3,1l3,0l0,-2l13,0l26,0l0,-1l4,0l3,1l4,-1l0,3l33,0l0,-3l9,0l3,0l3,0l3,0l3,0l3,0l4,0l3,0l3,0l3,0l3,0l0,2M228,194l0,-3l3,0l3,0l3,0l3,0l3,0l3,2l4,-1l3,0l3,-1l3,0l3,-1l4,0l3,1l3,0l3,0l0,4l11,0l0,-1l33,0l0,-1l3,-1l3,1l3,0l0,3l27,0l8,0l38,0l12,0l0,-5l3,-1l4,0l3,0l3,1l4,0l3,0l29,0l0,4l27,0l0,-4l15,0l0,4l21,0l0,1l15,0l0,-5l20,0l0,4l14,0l0,-2l24,0l0,1l3,0l3,-1l3,-1l3,0l4,0l3,1l3,1l3,0l0,-1l14,0l0,-1l32,0l0,2l3,-1l4,1l0,2l32,0l0,-1l30,0l0,-2l23,0l0,-2l3,0l3,0l4,1l3,-1l3,1l3,1l3,-1l4,-1l3,0l3,0l0,3M208,243l0,-3l3,0l4,1l3,1l3,-1l4,0l3,-1l0,4l3,0l3,1l4,1l3,-1l3,-1l0,-2l3,0l3,1l3,0l3,1l3,0l3,0l4,0l3,0l3,-1l3,-1l3,0l3,0l3,0l0,1l2,0l3,0l3,0l3,1l3,1l3,0l3,0l3,0l3,0l3,-1l3,0l3,-1l0,2l3,0l0,-2l3,1l3,0l3,0l3,1l3,0l3,-1l3,0l3,0l3,0l3,0l3,-1l3,-1l4,1l0,-3l3,0l3,-1l4,-1l3,1l3,0l3,-1l3,1l3,0l4,0l3,0l3,1l0,4l16,0l38,0l0,-2l11,0l0,2l3,0l3,-1l3,1l3,-1l3,0l3,1l3,0l21,0l0,-4l29,0l0,2l7,0l0,1l3,1l3,0l4,0l3,0l3,0l3,-1l4,1l3,-1l3,0l0,-1l5,0l0,-1l3,-1l3,0l3,0l3,0l3,-1l3,0l3,0l3,0l3,0l3,0l3,1l3,0l3,1l3,0l0,2l4,2l3,-2l33,0l0,-1l20,0l0,-2l23,0l0,2l3,0l3,0l3,0l3,1l3,-1l3,0l3,1l3,1l3,-1l3,0l3,0l3,-1l3,0l0,2l8,0l0,-3l3,0l3,0l4,0l3,-1l3,-1l3,1l3,1l3,-1l4,0l3,0l3,1l0,1l12,0l0,-1M208,290l0,1l35,0l1,0l0,-1l33,0l0,1l3,0l4,0l0,-2l3,0l3,0l4,1l3,-1l3,-1l3,-1l3,0l3,1l3,0l4,1l3,0l3,0l3,0l3,0l3,0l3,0l3,0l0,1l3,1l3,0l3,0l4,-1l3,0l3,0l3,0l3,0l25,0l0,2l10,0l0,-2l50,0l0,1l4,0l0,1l32,0l13,0l0,2l31,0l0,-4l6,0l0,3l3,0l3,1l3,1l3,0l3,0l3,0l3,0l3,0l3,0l3,-1l3,0l3,-1l0,-2l21,0l0,-1l3,0l3,0l4,0l3,1l3,1l4,-1l3,-1l3,0l0,1l9,0l0,1l31,0l3,0l3,0l3,0l4,-1l3,0l3,0l3,1l0,1l21,0l0,-1l21,0l0,-1l26,0l0,3l10,0l0,-1l25,0l0,-3l11,0M207,334l3,0l3,-1l3,-1l3,1l3,0l3,0l3,-1l3,1l3,0l3,0l3,1l3,0l0,4l4,0l3,0l4,0l0,-1l3,0l4,0l3,0l3,0l3,0l4,0l3,0l0,-3l39,0l0,3l21,0l0,-1l14,0l0,-1l3,0l3,0l3,1l3,0l3,1l3,0l3,0l3,0l3,-1l3,0l3,-1l3,0l0,4l10,0l0,-1l40,0l0,-3l3,1l4,-1l3,0l0,3l27,0l22,0l0,1l19,0l0,-3l12,0l45,0l0,-1l18,0l0,2l15,0l0,-1l20,0l3,0l3,-1l3,0l3,1l3,-1l3,0l3,-1l3,0l3,1l3,0l3,0l3,1l3,0l0,3l14,0l0,-5l42,0l0,3l2,0l0,-2l3,-1l3,0l3,-1l3,0l3,0l4,0l3,0l3,1l3,0l3,0l3,1l0,4l19,0l0,-2l17,0l0,1M207,388l3,1l3,0l3,0l3,-1l3,-1l32,0l0,-1l6,0l0,-1l3,0l3,-1l3,0l3,0l3,0l3,-1l3,0l3,0l3,1l3,-1l3,0l3,0l3,1l3,1l3,0l3,-1l3,1l3,0l2,0l35,0l0,2l3,-1l3,-1l3,1l4,0l3,1l3,0l3,0l0,-4l3,0l3,0l3,0l3,1l3,-1l3,0l3,0l3,0l0,2l3,0l3,-1l4,1l3,0l3,0l3,1l4,-1l3,0l3,0l4,0l3,1l4,-1l0,-3l24,0l0,5l3,0l4,-1l3,1l3,0l0,-2l3,0l3,-1l3,0l4,0l3,-1l3,1l3,-1l3,1l3,1l4,-1l3,1l3,-1l3,1l0,-2l3,0l0,4l37,0l0,-4l17,0l0,1l33,0l0,2l12,0l0,1l33,0l0,-4l4,0l3,-2l3,2l4,0l3,0l3,-1l4,0l3,-1l3,1l3,1l3,-1l3,0l3,0l4,0l3,1l3,0l0,2l20,0l0,-3l31,0l0,1l22,0l0,4l24,0l0,-3l3,0l4,2M206,424l3,0l3,0l4,0l3,0l3,1l0,-2l20,0l0,-1l18,0l0,3l37,0l0,-2l17,0l0,-1l24,0l0,2l35,0l0,2l4,0l0,-1l49,0l0,-1l4,1l3,-1l28,0l0,-2l25,0l0,-1l32,0l0,1l8,0l0,3l29,0l0,-3l7,0l0,3l34,0l0,-3l21,0l0,2l25,0l0,-3l4,1l4,-1l0,3l50,0l0,-2l2,0l3,0l3,0l3,1l3,-1l3,1l3,0l4,1l3,-1l3,1l3,0l3,-1l3,0l3,-1l0,4l11,0l0,-3l39,0l0,1l7,0l0,1M206,473l3,1l4,-1l3,-1l3,1l3,1l4,-1l3,0l3,0l10,0l0,1l21,0l34,0l0,-1l3,0l3,-1l3,-1l3,0l3,1l3,1l3,0l4,-1l3,0l3,1l3,-1l4,1l3,0l0,2l3,0l3,0l3,1l3,0l3,1l3,0l3,-1l3,0l3,0l3,0l3,-1l3,0l0,-4l3,0l0,4l56,0l0,-3l31,0l0,2l22,0l13,0l0,1l27,0l0,-2l10,0l26,0l0,2l14,0l0,-4l20,0l0,3l3,0l3,0l3,0l3,-1l3,1l3,0l3,0l0,1l25,0l0,1l8,0l43,0l0,-2l7,0l42,0l0,-2l4,0l3,0l4,0l0,2l34,0l0,-1l5,0l0,-1M232,516l0,-1l1,0l0,3l30,0l29,0l0,-2l3,0l4,-1l3,-1l3,0l3,1l4,1l3,0l0,4l3,-1l3,0l3,0l3,0l3,1l3,0l3,0l3,0l3,0l0,-1l32,0l0,-4l25,0l0,2l34,0l0,1l13,0l0,1l18,0l20,0l15,0l37,0l7,0l33,0l0,-2l9,0l0,1l32,0l0,-1l22,0l0,1l11,0l0,1l43,0l0,-1l8,0l0,2l52,0l0,-5l9,0l0,2l25,0l0,2l22,0M207,572l3,-1l3,0l3,1l17,0l0,3l3,0l3,1l3,-1l3,0l3,0l3,-1l3,1l3,0l3,0l3,0l0,-2l29,0l9,0l41,0l0,3l10,0l0,-3l30,0l0,1l17,0l0,1l21,0l0,-1l3,0l3,0l4,0l3,0l3,-1l4,0l3,1l3,0l0,2l22,0l0,-1l16,0l0,1l21,0l0,-1l3,0l3,0l3,0l4,2l3,-1l3,1l3,0l3,0l4,0l3,-1l3,0l3,-1l0,-2l1,0l0,4l41,0l0,-2l4,0l0,1l32,0l0,-2l3,0l3,0l3,-1l3,0l3,1l3,0l0,2l20,0l0,-1l33,0l0,-2l9,0l0,4l47,0l0,-4l14,0l3,0l3,0l3,0l3,0l3,-1l3,-1l3,0l3,1l3,0l3,1l3,0l0,2l14,0M207,618l3,0l3,0l3,-1l0,-2l11,0l0,1l3,0l3,0l3,1l3,-1l3,0l3,1l3,1l3,0l3,0l3,-1l3,0l3,-1l0,-2l2,0l0,1l36,0l0,1l4,0l42,0l0,-2l5,0l0,3l3,1l3,0l3,0l3,0l3,0l3,0l3,0l3,0l3,0l3,-1l0,-4l15,0l0,5l23,0l0,-1l4,1l4,-1l40,0l3,0l34,0l8,0l0,-3l3,0l3,0l3,-1l3,1l3,1l4,1l3,-1l3,0l3,0l3,-1l20,0l0,3l25,0l0,-1l32,0l3,0l0,1l35,0l0,-3l21,0l0,2l12,0l51,0l0,1l5,0l0,-1l39,0l0,-1l4,1l4,-1l3,0l3,0l3,-1l3,0M227,665l0,-1l3,0l3,0l3,-1l3,1l3,0l3,0l0,4l20,0l0,-1l3,-1l3,1l3,-1l4,1l3,0l3,-1l3,0l3,1l0,-1l15,0l0,2l40,0l0,-4l2,0l50,0l0,1l2,0l0,2l29,0l0,-3l3,0l4,0l3,1l3,-1l3,0l4,0l3,0l0,4l20,0l0,-2l3,0l3,1l3,-1l3,0l3,1l3,0l3,-1l21,0l0,1l3,0l4,-1l3,1l4,1l3,-1l0,-1l3,0l3,0l3,0l3,1l3,-2l4,0l3,1l3,-1l3,1l3,0l3,0l0,-2l12,0l0,4l48,0l0,-2l4,1l4,-1l0,2l3,0l3,0l3,1l3,-1l3,-1l3,-1l3,0l3,0l3,1l3,0l3,1l3,0l0,-3l12,0l0,-1l19,0l0,1l34,0l3,0l4,0l3,0l0,3l3,0l3,0l3,1l4,0l3,0l3,0l3,0l3,-1l0,-4l19,0l0,2M208,708l3,1l3,0l3,0l3,1l3,0l4,0l3,-1l3,0l3,-1l3,0l3,0l3,0l0,2l3,0l4,0l3,1l3,-1l0,-3l32,0l0,3l2,0l0,-3l53,0l3,0l0,1l44,0l7,0l0,-2l28,0l0,3l3,-1l3,0l3,0l3,0l3,-1l3,1l3,0l3,1l0,1l3,0l3,-1l3,0l3,0l3,0l3,1l3,-1l3,0l3,1l3,0l3,0l3,0l3,0l2,0l0,-4l33,0l0,1l5,0l30,0l0,3l16,0l0,-4l43,0l0,3l13,0l0,1l36,0l0,-4l5,0l0,2l26,0l7,0l27,0l0,1l24,0l0,-3l11,0l3,1l3,-1l3,0l3,-1l3,0l4,-1l3,0l3,1l3,0l3,1l3,0l0,4M249,756l0,-2l9,0l0,2l34,0l0,2l4,0l0,-2l52,0l0,-1l8,0l0,3l35,0l0,-1l1,0l0,-1l32,0l0,-2l3,0l43,0l20,0l0,1l15,0l0,-1l20,0l34,0l0,3l1,0l0,1l3,0l3,1l3,0l3,-1l3,0l3,0l4,0l3,1l3,1l3,-1l3,0l3,-1l0,-3l3,0l3,-1l3,-1l4,1l3,1l3,0l3,0l16,0l0,3l3,0l3,0l3,0l4,-1l3,0l3,0l3,0l3,0l4,-1l3,1l3,1l3,0l0,-3l3,-1l4,1l3,1l3,-1l0,1l20,0l0,2l36,0l3,0l3,0l3,0l3,1l3,-1l0,-3l3,0l3,0l3,1l4,0l3,0l3,-1l3,0l3,1l4,0l3,0l3,0l3,-1l0,4l3,-1l4,1l0,-1M247,800l2,0l0,-3l47,0l6,0l3,0l3,0l4,0l3,-1l3,0l3,2l3,0l3,-1l4,0l3,0l3,0l0,2l19,0l0,1l3,1l3,0l4,1l3,0l3,0l3,0l3,0l3,0l4,-1l3,0l3,-1l0,-2l7,0l0,2l3,-1l3,1l4,0l3,-1l3,0l4,-1l3,1l3,1l0,-1l37,0l0,-2l3,-1l3,0l3,1l0,2l3,-1l3,1l4,0l3,1l3,-1l3,-1l4,0l3,1l3,0l0,-1l3,0l3,0l0,3l31,0l0,-2l23,0l0,-2l3,0l3,-1l3,1l29,0l18,0l0,5l20,0l3,0l3,0l3,0l3,1l3,1l4,0l3,0l3,-1l3,0l3,0l3,-1l3,0l0,-3l14,0l0,2l38,0l0,-2l18,0l0,2l17,0l0,-1l3,0l3,0l3,-1l3,1l3,0l3,1l3,1l3,-1l3,0l3,-1l3,0l3,0l0,-2" fill="none" stroke="#5e6264" stroke-width="1" shape-rendering="crispEdges"/></g><path d="M299.5,59.2 L303.6,58.6 L304.9,56.5 L307.6,55.2 L312.4,56.5 L314.4,57.9 L313.7,60.6 L316.4,66.7 L319.1,70.7 L323.2,71.4 L322.5,73.5 L319.1,74.1 L319.1,78.9 L317.8,82.9 L322.5,89 L323.9,92.4 L322.5,96.5 L321.2,92.4 L318.5,89 L314.4,82.9 L314.4,76.2 L311.7,70.7 L310.3,66.7 L309.6,60.6 L308.3,58.6 L305.6,59.9 L304.2,62.6 L301.5,62.6 L299.5,60.6Z" fill="#2b4868"/><path d="M368.1,261.8 L371.1,259.2 L374,258.1 L377.4,259.6 L380.7,264 L385.9,265.5 L390.7,267.7 L395.1,272.9 L396.6,276.6 L393.2,275.1 L389.6,272.9 L385.9,270.3 L381.8,268.5 L377.7,265.9 L374.8,261.8 L371.1,261.1 L368.9,262.6Z" fill="#2b4868"/><path d="M438.3,377.2 L441.6,368.3 L447.2,363.9 L451.6,366.1 L447.2,371.6 L442.7,377.2 L440.5,375Z" fill="#2b4868"/><path d="M423.9,412.6 L426,413 L427.2,417.1 L428.8,422.6 L432.1,428.2 L431,434.8 L427.2,431.5 L425,421.5Z" fill="#2b4868"/><path d="M526.1,502.4 L527.9,502.4 L527.9,505.5 L530.4,507.3 L532.9,500.5 L534.1,501.2 L533.5,507.3 L531,513.5 L528.6,520.9 L531,526.4 L536.6,525.2 L532.3,530.1 L534.7,533.8 L532.9,539.4 L529.8,537.5 L529.2,532.6 L525.5,531.4 L527.3,527 L525.5,519.6 L527.3,513.5 L528.6,509.2 L526.7,506.7Z" fill="#2b4868"/><path d="M604.8,306.9 L609.7,304.5 L614.6,300.8 L612.8,295.9 L612.8,288.5 L614.6,285.4 L618.3,289.7 L615.9,292.2 L617.1,294.6 L622,293.4 L620.8,286.6 L623.3,290.9 L627.6,293.4 L623.9,296.5 L623.3,299.6 L618.9,303.3 L616.5,310 L609.7,313.1 L606.6,312.5Z" fill="#2b4868"/><path d="M541,600 L544,601 L546,612 L552,611 L557,605 L563,609 L557,614 L549,620 L545,620 L542,612Z" fill="#2b4868"/><path d="M122,659.2 L126.4,653.7 L133,653.7 L136.2,658.1 L133,665.7 L126.4,667.9 L122,664.6Z" fill="#2b4868"/><path d="M42.5,681 L45.8,681 L50.2,686.4 L51.3,689.7 L46.9,688.6 L43.6,684.2Z" fill="#2b4868"/><path d="M58.9,685.3 L63.2,690.8 L64.3,696.2 L67.6,701.6 L74.1,705 L81.8,706 L83.9,710.4 L79.6,710.4 L70.9,707.1 L64.3,704.9 L61.1,698.4 L57.8,691.8Z" fill="#2b4868"/><path d="M143.8,698.4 L150.4,696.2 L153.6,701.6 L151.5,708.2 L144.9,712.5 L140.6,710.4 L142.8,706 L148.2,702.7Z" fill="#2b4868"/><path d="M783,730 L788,733 L793,742 L796,750 L792,755 L786,748 L784,740Z" fill="#2b4868"/><path d="M0,706 L6,706 L12,703 L20,698 L30,700 L28,706 L45,706 L48,706 L46,716 L50,717 L52,725 L60,726 L67,727 L72,731 L77,739 L80,747 L83,758 L162,758 L164,748 L180,746 L195,743 L205,746 L218,754 L222,758 L240,758 L239,754 L230,746 L218,744 L199,736 L187,731 L182,717 L194,705 L201.8,697.6 L204.7,685.8 L205.5,676 L204.7,677 L202.5,681.4 L198.1,684.3 L197.3,691.7 L193.7,694.7 L187,693.2 L186.3,688 L183.3,688.8 L177.4,686.6 L176.7,682.1 L179.6,679.9 L184.8,679.9 L188.5,675.5 L194.4,668.1 L199.6,666.6 L204.7,667.3 L208.4,662.2 L214.3,657.7 L213.6,652.6 L218,650.3 L221,651.1 L220.3,655.5 L223.2,654.8 L234.3,648.9 L244,646 L254,647 L264,651 L271,652 L284,649 L290,649 L300,655 L304.2,657 L305.8,641.1 L305.8,625.3 L312.2,622.2 L320,625.3 L321.6,641.1 L326.4,650.6 L332.7,657 L334.3,660.1 L346.5,659.3 L357,655.8 L367.6,651.6 L378.2,648.7 L392.2,646.6 L406.3,645.9 L420,647.5 L436.4,649.5 L462.7,658.5 L485.4,674.5 L507.6,689.3 L514,697 L516,705 L515,710 L523,711 L535,709 L543,705 L552,702 L564,695 L574,690 L582,686 L586,682 L592,677 L595,674 L605,675 L613,674 L621,681 L631,686 L638,693 L643,703 L655,715 L658,727 L671,736 L680,748 L683,757 L701,759 L706,771 L713,783 L711,792 L711,812 L0,812Z" fill="#024567" stroke="#000" stroke-width="1.6"/><path d="M806,558 L803,566 L802,580 L801,600 L801,625 L801,645 L802,657 L806,662Z" fill="#024567" stroke="#000" stroke-width="1.5"/><path d="M370,653 L378,644.5 L378,636 L376,632 L381,634.7 L381.7,643 L385,643 L386.6,634.7 L389.4,632 L388,638 L392,643 L393.6,644.5 L385,647.3 L378,650 L372.6,653Z" fill="#024567" stroke="#000" stroke-width="1"/><path d="M419.5,644.2 L429.5,640.5 L434.8,642.7 L448,640 L453.8,645.8 L455.3,647.9 L452.2,649 L445.8,646.9 L439.5,647.4 L431.1,647.4 L420.5,647.4Z" fill="#024567" stroke="#000" stroke-width="1"/><path d="M507,695 L513.7,698 L515.7,706 L512.4,711 L508.5,703Z" fill="#024567" stroke="#000" stroke-width="1"/><path d="M355,654 L357,646 L360,643 L363,644.5M474.3,658.5 L481.7,658.5 L487.9,660.3 L491.6,658.5 L494.7,653.6 L499,654.2M487.9,660.3 L492.8,664 L497,669 L507.6,679.4" fill="none" stroke="#000" stroke-width="3.2" stroke-linejoin="round"/><path d="M355,654 L357,646 L360,643 L363,644.5M474.3,658.5 L481.7,658.5 L487.9,660.3 L491.6,658.5 L494.7,653.6 L499,654.2M487.9,660.3 L492.8,664 L497,669 L507.6,679.4" fill="none" stroke="#024567" stroke-width="1.2"/><path d="M230,746 L222,738 L214,722 L222,705 L228,690 L229,670 L226,668 L222,672.5 L206.5,675.7 L206.4,675.6 L206.4,675.5 L206.3,675.3 L206.3,675.2 L206.2,675.1 L206.1,675 L206,674.9 L205.9,674.8 L205.7,674.7 L205.6,674.6 L205.5,674.6 L205.3,674.5 L205.2,674.5 L205,674.5 L204.9,674.5 L204.8,674.5 L204.6,674.6 L204.5,674.6 L204.3,674.7 L204.2,674.7 L204.1,674.8 L204,674.9 L203.9,675 L203.8,675.1 L203.7,675.3 L203.6,675.4 L203.6,675.5 L203.5,675.7 L203.5,675.8 L203.5,676 L203.2,685.6 L200.4,696.8 L193,703.9 L192.9,703.9 L180.9,715.9 L180.8,716.1 L180.7,716.2 L180.7,716.3 L180.6,716.5 L180.6,716.6 L180.5,716.7 L180.5,716.9 L180.5,717.1 L180.5,717.2 L180.5,717.4 L180.6,717.5 L185.6,731.5 L185.6,731.6 L185.7,731.8 L185.8,731.9 L185.9,732 L186,732.1 L186.1,732.2 L186.3,732.3 L186.4,732.4 L198.4,737.4 L217.4,745.4 L217.6,745.4 L217.7,745.5 L217.8,745.5 L218,745.5 L218.1,745.5 L218.3,745.5 L218.4,745.4 L218.6,745.4 L218.7,745.3 L218.8,745.3 L218.9,745.2 L219.1,745.1 L219.2,745 L219.2,744.8 L219.3,744.7 L219.4,744.6 L219.4,744.4 L219.5,744.3 L219.5,744.2 L230,746Z" fill="#5b504b"/><path d="M226,668h1v1h-1zM226,669h2v1h-2zM225,670h3v1h-3zM223,671h3v1h-3zM228,671h1v1h-1zM225,672h1v1h-1zM228,672h1v1h-1zM226,673h3v1h-3zM216,674h1v1h-1zM226,674h3v1h-3zM216,675h3v1h-3zM226,675h1v1h-1zM205,676h3v1h-3zM216,676h10v1h-10zM208,677h1v1h-1zM218,677h8v1h-8zM208,678h4v1h-4zM219,678h4v1h-4zM225,678h2v1h-2zM208,679h4v1h-4zM219,679h4v1h-4zM225,679h4v1h-4zM209,680h1v1h-1zM218,680h10v1h-10zM209,681h1v1h-1zM220,681h8v1h-8zM209,682h1v1h-1zM221,682h7v1h-7zM209,683h2v1h-2zM221,683h6v1h-6zM208,684h3v1h-3zM215,684h1v1h-1zM220,684h5v1h-5zM206,685h5v1h-5zM213,685h4v1h-4zM219,685h6v1h-6zM208,686h9v1h-9zM219,686h7v1h-7zM208,687h12v1h-12zM223,687h3v1h-3zM213,688h7v1h-7zM223,688h2v1h-2zM213,689h8v1h-8zM223,689h2v1h-2zM213,690h5v1h-5zM223,690h2v1h-2zM213,691h5v1h-5zM223,691h2v1h-2zM213,692h5v1h-5zM221,692h4v1h-4zM207,693h15v1h-15zM206,694h15v1h-15zM206,695h4v1h-4zM212,695h3v1h-3zM218,695h3v1h-3zM204,696h3v1h-3zM209,696h1v1h-1zM212,696h2v1h-2zM218,696h3v1h-3zM202,697h1v1h-1zM205,697h2v1h-2zM209,697h5v1h-5zM218,697h5v1h-5zM206,698h1v1h-1zM209,698h5v1h-5zM218,698h7v1h-7zM206,699h1v1h-1zM209,699h10v1h-10zM223,699h1v1h-1zM211,700h8v1h-8zM212,701h7v1h-7zM212,702h1v1h-1zM220,703h1v1h-1zM200,704h1v1h-1zM210,704h1v1h-1zM200,705h1v1h-1zM207,705h3v1h-3zM214,705h1v1h-1zM218,705h1v1h-1zM207,706h3v1h-3zM214,706h1v1h-1zM207,707h3v1h-3zM207,708h3v1h-3zM212,708h2v1h-2zM217,708h1v1h-1zM196,709h3v1h-3zM207,709h7v1h-7zM217,709h3v1h-3zM196,710h8v1h-8zM206,710h3v1h-3zM215,710h2v1h-2zM194,711h1v1h-1zM197,711h7v1h-7zM206,711h3v1h-3zM198,712h5v1h-5zM207,712h4v1h-4zM200,713h3v1h-3zM207,713h3v1h-3zM201,714h2v1h-2zM207,714h3v1h-3zM197,715h1v1h-1zM201,715h11v1h-11zM215,715h1v1h-1zM197,716h16v1h-16zM215,716h2v1h-2zM197,717h2v1h-2zM203,717h2v1h-2zM208,717h8v1h-8zM192,718h1v1h-1zM196,718h3v1h-3zM209,718h6v1h-6zM197,719h4v1h-4zM209,719h4v1h-4zM185,720h1v1h-1zM197,720h3v1h-3zM209,720h4v1h-4zM192,721h1v1h-1zM208,721h4v1h-4zM206,722h6v1h-6zM206,723h6v1h-6zM214,723h1v1h-1zM195,724h2v1h-2zM201,724h1v1h-1zM206,724h1v1h-1zM210,724h5v1h-5zM205,725h2v1h-2zM210,725h2v1h-2zM215,725h1v1h-1zM205,726h1v1h-1zM209,726h3v1h-3zM215,726h1v1h-1zM191,727h1v1h-1zM209,727h8v1h-8zM213,728h4v1h-4zM214,729h1v1h-1zM214,730h1v1h-1zM207,731h1v1h-1zM210,731h1v1h-1zM214,731h2v1h-2zM204,732h5v1h-5zM211,732h5v1h-5zM201,733h6v1h-6zM212,733h3v1h-3zM218,733h2v1h-2zM202,734h5v1h-5zM214,734h1v1h-1zM219,734h1v1h-1zM202,735h6v1h-6zM214,735h2v1h-2zM205,736h3v1h-3zM214,736h3v1h-3zM213,737h2v1h-2zM218,737h2v1h-2zM211,738h4v1h-4zM218,738h2v1h-2zM211,739h4v1h-4zM218,739h2v1h-2zM218,740h1v1h-1zM218,741h1v1h-1zM222,741h1v1h-1zM215,742h5v1h-5zM222,742h1v1h-1zM222,743h1v1h-1z" fill="#024567"/><path d="M225,669h1v1h-1zM224,670h1v1h-1zM228,670h1v1h-1zM226,671h2v1h-2zM222,672h3v1h-3zM226,672h2v1h-2zM217,673h3v1h-3zM223,673h3v1h-3zM212,674h4v1h-4zM217,674h9v1h-9zM207,675h3v1h-3zM211,675h5v1h-5zM219,675h7v1h-7zM227,675h2v1h-2zM208,676h8v1h-8zM226,676h2v1h-2zM205,677h3v1h-3zM209,677h9v1h-9zM226,677h3v1h-3zM206,678h2v1h-2zM212,678h3v1h-3zM216,678h3v1h-3zM223,678h2v1h-2zM227,678h2v1h-2zM206,679h2v1h-2zM212,679h7v1h-7zM223,679h2v1h-2zM206,680h3v1h-3zM210,680h8v1h-8zM207,681h2v1h-2zM210,681h10v1h-10zM206,682h3v1h-3zM210,682h11v1h-11zM205,683h4v1h-4zM211,683h10v1h-10zM227,683h1v1h-1zM205,684h3v1h-3zM211,684h4v1h-4zM216,684h4v1h-4zM225,684h3v1h-3zM205,685h1v1h-1zM211,685h2v1h-2zM217,685h2v1h-2zM225,685h3v1h-3zM205,686h3v1h-3zM217,686h2v1h-2zM226,686h2v1h-2zM204,687h4v1h-4zM220,687h3v1h-3zM226,687h2v1h-2zM205,688h8v1h-8zM220,688h3v1h-3zM225,688h2v1h-2zM206,689h3v1h-3zM210,689h3v1h-3zM221,689h2v1h-2zM225,689h2v1h-2zM204,690h9v1h-9zM218,690h5v1h-5zM225,690h3v1h-3zM203,691h10v1h-10zM218,691h5v1h-5zM225,691h2v1h-2zM203,692h10v1h-10zM218,692h3v1h-3zM225,692h1v1h-1zM204,693h3v1h-3zM222,693h5v1h-5zM203,694h3v1h-3zM221,694h5v1h-5zM202,695h4v1h-4zM210,695h2v1h-2zM215,695h3v1h-3zM221,695h5v1h-5zM202,696h2v1h-2zM207,696h2v1h-2zM210,696h2v1h-2zM214,696h4v1h-4zM221,696h4v1h-4zM203,697h2v1h-2zM207,697h2v1h-2zM214,697h4v1h-4zM223,697h2v1h-2zM201,698h5v1h-5zM207,698h2v1h-2zM214,698h4v1h-4zM203,699h3v1h-3zM207,699h2v1h-2zM219,699h4v1h-4zM203,700h8v1h-8zM219,700h5v1h-5zM207,701h5v1h-5zM219,701h4v1h-4zM197,702h5v1h-5zM207,702h5v1h-5zM213,702h9v1h-9zM197,703h5v1h-5zM204,703h16v1h-16zM221,703h1v1h-1zM197,704h3v1h-3zM201,704h1v1h-1zM204,704h6v1h-6zM211,704h11v1h-11zM196,705h4v1h-4zM201,705h1v1h-1zM204,705h3v1h-3zM210,705h4v1h-4zM215,705h3v1h-3zM219,705h2v1h-2zM196,706h11v1h-11zM210,706h4v1h-4zM215,706h6v1h-6zM192,707h1v1h-1zM194,707h13v1h-13zM210,707h11v1h-11zM191,708h16v1h-16zM210,708h2v1h-2zM214,708h3v1h-3zM218,708h2v1h-2zM190,709h6v1h-6zM199,709h8v1h-8zM214,709h3v1h-3zM190,710h6v1h-6zM204,710h2v1h-2zM209,710h6v1h-6zM217,710h2v1h-2zM191,711h3v1h-3zM195,711h2v1h-2zM204,711h2v1h-2zM209,711h3v1h-3zM213,711h6v1h-6zM192,712h6v1h-6zM203,712h4v1h-4zM211,712h1v1h-1zM213,712h3v1h-3zM194,713h6v1h-6zM203,713h4v1h-4zM210,713h7v1h-7zM194,714h7v1h-7zM203,714h4v1h-4zM210,714h8v1h-8zM190,715h3v1h-3zM194,715h3v1h-3zM198,715h3v1h-3zM212,715h3v1h-3zM216,715h1v1h-1zM190,716h7v1h-7zM213,716h2v1h-2zM190,717h7v1h-7zM199,717h4v1h-4zM205,717h3v1h-3zM183,718h4v1h-4zM190,718h2v1h-2zM193,718h3v1h-3zM199,718h10v1h-10zM215,718h1v1h-1zM183,719h4v1h-4zM190,719h7v1h-7zM201,719h4v1h-4zM206,719h3v1h-3zM213,719h2v1h-2zM183,720h2v1h-2zM186,720h1v1h-1zM190,720h7v1h-7zM200,720h9v1h-9zM213,720h2v1h-2zM184,721h3v1h-3zM189,721h3v1h-3zM193,721h15v1h-15zM212,721h2v1h-2zM188,722h18v1h-18zM212,722h2v1h-2zM187,723h19v1h-19zM212,723h2v1h-2zM185,724h10v1h-10zM197,724h1v1h-1zM199,724h2v1h-2zM202,724h4v1h-4zM207,724h3v1h-3zM185,725h13v1h-13zM199,725h6v1h-6zM207,725h3v1h-3zM212,725h3v1h-3zM185,726h2v1h-2zM188,726h6v1h-6zM200,726h5v1h-5zM206,726h3v1h-3zM212,726h3v1h-3zM186,727h1v1h-1zM188,727h3v1h-3zM192,727h2v1h-2zM199,727h10v1h-10zM188,728h5v1h-5zM199,728h6v1h-6zM206,728h7v1h-7zM193,729h3v1h-3zM199,729h15v1h-15zM215,729h3v1h-3zM190,730h6v1h-6zM198,730h16v1h-16zM215,730h2v1h-2zM190,731h6v1h-6zM198,731h9v1h-9zM208,731h2v1h-2zM211,731h3v1h-3zM216,731h3v1h-3zM191,732h5v1h-5zM198,732h6v1h-6zM209,732h2v1h-2zM216,732h3v1h-3zM193,733h3v1h-3zM197,733h4v1h-4zM207,733h5v1h-5zM215,733h3v1h-3zM197,734h5v1h-5zM207,734h7v1h-7zM215,734h4v1h-4zM198,735h4v1h-4zM208,735h2v1h-2zM211,735h3v1h-3zM216,735h5v1h-5zM200,736h5v1h-5zM208,736h6v1h-6zM217,736h4v1h-4zM203,737h10v1h-10zM215,737h3v1h-3zM220,737h2v1h-2zM205,738h3v1h-3zM209,738h2v1h-2zM215,738h3v1h-3zM220,738h2v1h-2zM207,739h1v1h-1zM209,739h2v1h-2zM215,739h3v1h-3zM220,739h3v1h-3zM210,740h8v1h-8zM219,740h5v1h-5zM212,741h6v1h-6zM219,741h3v1h-3zM223,741h2v1h-2zM214,742h1v1h-1zM220,742h2v1h-2zM223,742h3v1h-3zM217,743h5v1h-5zM223,743h4v1h-4zM221,744h4v1h-4zM226,744h2v1h-2zM227,745h2v1h-2z" fill="#000"/><path d="M146,712 L165,722 L180,730 L190,740 L180,746 L164,748 L158,756 L146,745 L146,712Z" fill="#5b504b"/><path d="M146,715h1v1h-1zM149,719h2v1h-2zM152,719h5v1h-5zM149,720h1v1h-1zM153,720h3v1h-3zM154,721h1v1h-1zM153,722h3v1h-3zM157,722h1v1h-1zM146,723h1v1h-1zM153,723h2v1h-2zM156,723h3v1h-3zM146,724h4v1h-4zM153,724h2v1h-2zM157,724h2v1h-2zM160,724h3v1h-3zM146,725h5v1h-5zM152,725h3v1h-3zM157,725h1v1h-1zM161,725h3v1h-3zM146,726h4v1h-4zM151,726h14v1h-14zM147,727h15v1h-15zM163,727h2v1h-2zM146,728h6v1h-6zM154,728h2v1h-2zM158,728h2v1h-2zM147,729h8v1h-8zM158,729h5v1h-5zM164,729h3v1h-3zM172,729h3v1h-3zM147,730h3v1h-3zM152,730h16v1h-16zM172,730h3v1h-3zM146,731h5v1h-5zM152,731h17v1h-17zM171,731h2v1h-2zM148,732h3v1h-3zM152,732h16v1h-16zM171,732h1v1h-1zM148,733h5v1h-5zM155,733h13v1h-13zM175,733h1v1h-1zM148,734h6v1h-6zM157,734h2v1h-2zM162,734h6v1h-6zM173,734h3v1h-3zM147,735h9v1h-9zM157,735h2v1h-2zM164,735h3v1h-3zM170,735h9v1h-9zM146,736h4v1h-4zM153,736h7v1h-7zM165,736h1v1h-1zM169,736h9v1h-9zM147,737h3v1h-3zM153,737h7v1h-7zM165,737h18v1h-18zM153,738h6v1h-6zM165,738h1v1h-1zM168,738h7v1h-7zM176,738h7v1h-7zM154,739h4v1h-4zM164,739h2v1h-2zM169,739h6v1h-6zM179,739h4v1h-4zM146,740h1v1h-1zM152,740h1v1h-1zM155,740h3v1h-3zM163,740h3v1h-3zM173,740h2v1h-2zM180,740h6v1h-6zM151,741h2v1h-2zM162,741h5v1h-5zM174,741h1v1h-1zM180,741h7v1h-7zM151,742h1v1h-1zM157,742h2v1h-2zM162,742h6v1h-6zM173,742h3v1h-3zM181,742h2v1h-2zM148,743h1v1h-1zM157,743h6v1h-6zM173,743h3v1h-3zM182,743h1v1h-1zM148,744h1v1h-1zM155,744h8v1h-8zM173,744h3v1h-3zM154,745h9v1h-9zM154,746h6v1h-6zM161,746h1v1h-1zM154,747h2v1h-2zM154,748h3v1h-3zM153,749h1v1h-1zM155,749h2v1h-2z" fill="#024567"/><path d="M146,714h1v1h-1zM147,715h1v1h-1zM146,716h1v1h-1zM149,718h2v1h-2zM152,718h5v1h-5zM148,719h1v1h-1zM151,719h1v1h-1zM157,719h1v1h-1zM148,720h1v1h-1zM150,720h1v1h-1zM152,720h1v1h-1zM156,720h1v1h-1zM149,721h1v1h-1zM153,721h1v1h-1zM155,721h1v1h-1zM157,721h1v1h-1zM146,722h1v1h-1zM152,722h1v1h-1zM156,722h1v1h-1zM158,722h1v1h-1zM147,723h3v1h-3zM152,723h1v1h-1zM155,723h1v1h-1zM159,723h4v1h-4zM150,724h1v1h-1zM152,724h1v1h-1zM155,724h2v1h-2zM159,724h1v1h-1zM163,724h1v1h-1zM151,725h1v1h-1zM155,725h2v1h-2zM158,725h3v1h-3zM164,725h1v1h-1zM150,726h1v1h-1zM165,726h1v1h-1zM146,727h1v1h-1zM162,727h1v1h-1zM165,727h1v1h-1zM152,728h2v1h-2zM156,728h2v1h-2zM160,728h7v1h-7zM172,728h3v1h-3zM146,729h1v1h-1zM155,729h3v1h-3zM163,729h1v1h-1zM167,729h1v1h-1zM171,729h1v1h-1zM175,729h1v1h-1zM146,730h1v1h-1zM150,730h2v1h-2zM168,730h1v1h-1zM171,730h1v1h-1zM175,730h1v1h-1zM151,731h1v1h-1zM169,731h2v1h-2zM173,731h2v1h-2zM146,732h2v1h-2zM151,732h1v1h-1zM168,732h1v1h-1zM170,732h1v1h-1zM172,732h1v1h-1zM175,732h1v1h-1zM147,733h1v1h-1zM153,733h2v1h-2zM168,733h1v1h-1zM171,733h1v1h-1zM173,733h2v1h-2zM176,733h1v1h-1zM147,734h1v1h-1zM154,734h3v1h-3zM159,734h3v1h-3zM168,734h1v1h-1zM170,734h3v1h-3zM176,734h3v1h-3zM146,735h1v1h-1zM156,735h1v1h-1zM159,735h1v1h-1zM162,735h2v1h-2zM167,735h1v1h-1zM169,735h1v1h-1zM179,735h1v1h-1zM150,736h3v1h-3zM160,736h1v1h-1zM164,736h1v1h-1zM166,736h3v1h-3zM178,736h5v1h-5zM146,737h1v1h-1zM150,737h1v1h-1zM152,737h1v1h-1zM160,737h1v1h-1zM164,737h1v1h-1zM183,737h1v1h-1zM147,738h3v1h-3zM152,738h1v1h-1zM159,738h1v1h-1zM164,738h1v1h-1zM166,738h2v1h-2zM175,738h1v1h-1zM183,738h1v1h-1zM146,739h1v1h-1zM152,739h2v1h-2zM158,739h1v1h-1zM163,739h1v1h-1zM166,739h1v1h-1zM168,739h1v1h-1zM175,739h4v1h-4zM183,739h3v1h-3zM147,740h1v1h-1zM151,740h1v1h-1zM153,740h2v1h-2zM158,740h1v1h-1zM162,740h1v1h-1zM166,740h1v1h-1zM169,740h4v1h-4zM175,740h1v1h-1zM179,740h1v1h-1zM186,740h1v1h-1zM146,741h1v1h-1zM150,741h1v1h-1zM153,741h1v1h-1zM155,741h4v1h-4zM161,741h1v1h-1zM167,741h1v1h-1zM173,741h1v1h-1zM175,741h1v1h-1zM179,741h1v1h-1zM148,742h1v1h-1zM150,742h1v1h-1zM152,742h1v1h-1zM156,742h1v1h-1zM159,742h3v1h-3zM168,742h1v1h-1zM172,742h1v1h-1zM176,742h1v1h-1zM180,742h1v1h-1zM183,742h3v1h-3zM147,743h1v1h-1zM149,743h1v1h-1zM151,743h1v1h-1zM155,743h2v1h-2zM163,743h5v1h-5zM172,743h1v1h-1zM176,743h1v1h-1zM181,743h1v1h-1zM183,743h1v1h-1zM147,744h1v1h-1zM149,744h1v1h-1zM154,744h1v1h-1zM163,744h1v1h-1zM172,744h1v1h-1zM176,744h1v1h-1zM148,745h1v1h-1zM153,745h1v1h-1zM163,745h1v1h-1zM173,745h3v1h-3zM153,746h1v1h-1zM160,746h1v1h-1zM162,746h1v1h-1zM153,747h1v1h-1zM156,747h4v1h-4zM161,747h1v1h-1zM153,748h1v1h-1zM157,748h1v1h-1zM152,749h1v1h-1zM154,749h1v1h-1zM157,749h1v1h-1zM153,750h1v1h-1zM155,750h2v1h-2zM157,755h1v1h-1z" fill="#000"/><path d="M80,745 L100,740 L120,738 L146,736 L150,748 L158,758 L83,758 L80,745Z" fill="#5b504b"/><path d="M143,736h1v1h-1zM128,737h3v1h-3zM134,737h1v1h-1zM120,738h1v1h-1zM129,738h2v1h-2zM134,738h3v1h-3zM138,738h2v1h-2zM141,738h1v1h-1zM129,739h9v1h-9zM141,739h2v1h-2zM109,740h3v1h-3zM117,740h1v1h-1zM129,740h9v1h-9zM139,740h4v1h-4zM104,741h1v1h-1zM108,741h3v1h-3zM116,741h3v1h-3zM121,741h1v1h-1zM126,741h2v1h-2zM129,741h8v1h-8zM139,741h4v1h-4zM99,742h2v1h-2zM104,742h1v1h-1zM107,742h4v1h-4zM114,742h8v1h-8zM129,742h2v1h-2zM132,742h3v1h-3zM141,742h2v1h-2zM99,743h9v1h-9zM110,743h13v1h-13zM130,743h4v1h-4zM140,743h3v1h-3zM83,744h1v1h-1zM92,744h1v1h-1zM99,744h8v1h-8zM110,744h3v1h-3zM115,744h2v1h-2zM119,744h6v1h-6zM130,744h4v1h-4zM136,744h2v1h-2zM139,744h4v1h-4zM148,744h1v1h-1zM83,745h1v1h-1zM90,745h3v1h-3zM100,745h2v1h-2zM106,745h1v1h-1zM126,745h1v1h-1zM130,745h3v1h-3zM136,745h2v1h-2zM140,745h2v1h-2zM83,746h1v1h-1zM90,746h3v1h-3zM126,746h2v1h-2zM130,746h3v1h-3zM135,746h3v1h-3zM140,746h2v1h-2zM91,747h2v1h-2zM113,747h7v1h-7zM127,747h1v1h-1zM129,747h2v1h-2zM134,747h4v1h-4zM140,747h1v1h-1zM99,748h1v1h-1zM113,748h9v1h-9zM128,748h3v1h-3zM134,748h7v1h-7zM98,749h2v1h-2zM103,749h2v1h-2zM113,749h2v1h-2zM117,749h5v1h-5zM128,749h3v1h-3zM134,749h1v1h-1zM137,749h5v1h-5zM103,750h3v1h-3zM117,750h3v1h-3zM128,750h4v1h-4zM140,750h3v1h-3zM103,751h3v1h-3zM116,751h2v1h-2zM128,751h4v1h-4zM137,751h1v1h-1zM139,751h4v1h-4zM84,752h4v1h-4zM90,752h2v1h-2zM93,752h1v1h-1zM102,752h4v1h-4zM127,752h3v1h-3zM137,752h6v1h-6zM86,753h2v1h-2zM90,753h2v1h-2zM104,753h1v1h-1zM111,753h3v1h-3zM126,753h2v1h-2zM133,753h1v1h-1zM137,753h6v1h-6zM148,753h2v1h-2zM90,754h2v1h-2zM104,754h1v1h-1zM113,754h7v1h-7zM122,754h3v1h-3zM141,754h4v1h-4zM147,754h2v1h-2zM113,755h6v1h-6zM123,755h2v1h-2zM143,755h2v1h-2zM147,755h1v1h-1zM114,756h1v1h-1z" fill="#024567"/><path d="M142,736h1v1h-1zM144,736h1v1h-1zM127,737h1v1h-1zM131,737h1v1h-1zM133,737h1v1h-1zM135,737h2v1h-2zM138,737h2v1h-2zM141,737h1v1h-1zM143,737h1v1h-1zM119,738h1v1h-1zM121,738h1v1h-1zM128,738h1v1h-1zM131,738h3v1h-3zM137,738h1v1h-1zM140,738h1v1h-1zM142,738h1v1h-1zM109,739h3v1h-3zM117,739h1v1h-1zM120,739h1v1h-1zM128,739h1v1h-1zM138,739h3v1h-3zM143,739h1v1h-1zM104,740h1v1h-1zM108,740h1v1h-1zM112,740h1v1h-1zM116,740h1v1h-1zM118,740h1v1h-1zM121,740h1v1h-1zM126,740h3v1h-3zM138,740h1v1h-1zM143,740h1v1h-1zM99,741h2v1h-2zM103,741h1v1h-1zM105,741h1v1h-1zM107,741h1v1h-1zM111,741h1v1h-1zM114,741h2v1h-2zM119,741h2v1h-2zM122,741h1v1h-1zM125,741h1v1h-1zM128,741h1v1h-1zM137,741h2v1h-2zM143,741h1v1h-1zM98,742h1v1h-1zM101,742h3v1h-3zM105,742h2v1h-2zM111,742h3v1h-3zM122,742h1v1h-1zM126,742h3v1h-3zM131,742h1v1h-1zM135,742h2v1h-2zM139,742h2v1h-2zM143,742h1v1h-1zM92,743h1v1h-1zM98,743h1v1h-1zM108,743h2v1h-2zM123,743h2v1h-2zM129,743h1v1h-1zM134,743h1v1h-1zM136,743h2v1h-2zM139,743h1v1h-1zM143,743h1v1h-1zM82,744h1v1h-1zM84,744h1v1h-1zM90,744h2v1h-2zM93,744h1v1h-1zM98,744h1v1h-1zM107,744h1v1h-1zM109,744h1v1h-1zM113,744h2v1h-2zM117,744h2v1h-2zM125,744h2v1h-2zM129,744h1v1h-1zM134,744h2v1h-2zM138,744h1v1h-1zM143,744h1v1h-1zM147,744h1v1h-1zM82,745h1v1h-1zM84,745h1v1h-1zM89,745h1v1h-1zM93,745h1v1h-1zM99,745h1v1h-1zM102,745h4v1h-4zM107,745h1v1h-1zM110,745h3v1h-3zM115,745h2v1h-2zM119,745h7v1h-7zM127,745h1v1h-1zM129,745h1v1h-1zM133,745h1v1h-1zM135,745h1v1h-1zM138,745h2v1h-2zM142,745h1v1h-1zM148,745h1v1h-1zM82,746h1v1h-1zM84,746h1v1h-1zM89,746h1v1h-1zM93,746h1v1h-1zM100,746h2v1h-2zM106,746h1v1h-1zM113,746h7v1h-7zM125,746h1v1h-1zM128,746h2v1h-2zM133,746h2v1h-2zM138,746h2v1h-2zM142,746h1v1h-1zM83,747h1v1h-1zM90,747h1v1h-1zM93,747h1v1h-1zM99,747h1v1h-1zM112,747h1v1h-1zM120,747h2v1h-2zM126,747h1v1h-1zM128,747h1v1h-1zM131,747h3v1h-3zM138,747h2v1h-2zM141,747h1v1h-1zM91,748h2v1h-2zM98,748h1v1h-1zM100,748h1v1h-1zM103,748h2v1h-2zM112,748h1v1h-1zM122,748h1v1h-1zM127,748h1v1h-1zM131,748h1v1h-1zM133,748h1v1h-1zM141,748h1v1h-1zM97,749h1v1h-1zM100,749h1v1h-1zM102,749h1v1h-1zM105,749h1v1h-1zM112,749h1v1h-1zM115,749h2v1h-2zM122,749h1v1h-1zM127,749h1v1h-1zM131,749h1v1h-1zM133,749h1v1h-1zM135,749h2v1h-2zM142,749h1v1h-1zM98,750h2v1h-2zM102,750h1v1h-1zM106,750h1v1h-1zM113,750h2v1h-2zM116,750h1v1h-1zM120,750h2v1h-2zM127,750h1v1h-1zM132,750h1v1h-1zM134,750h1v1h-1zM137,750h3v1h-3zM143,750h1v1h-1zM84,751h4v1h-4zM90,751h2v1h-2zM93,751h1v1h-1zM102,751h1v1h-1zM106,751h1v1h-1zM115,751h1v1h-1zM118,751h2v1h-2zM127,751h1v1h-1zM132,751h1v1h-1zM136,751h1v1h-1zM138,751h1v1h-1zM143,751h1v1h-1zM83,752h1v1h-1zM88,752h2v1h-2zM92,752h1v1h-1zM94,752h1v1h-1zM101,752h1v1h-1zM106,752h1v1h-1zM111,752h3v1h-3zM116,752h2v1h-2zM126,752h1v1h-1zM130,752h2v1h-2zM133,752h1v1h-1zM136,752h1v1h-1zM143,752h1v1h-1zM148,752h2v1h-2zM84,753h2v1h-2zM88,753h2v1h-2zM92,753h2v1h-2zM102,753h2v1h-2zM105,753h1v1h-1zM110,753h1v1h-1zM114,753h6v1h-6zM122,753h4v1h-4zM128,753h2v1h-2zM132,753h1v1h-1zM134,753h1v1h-1zM136,753h1v1h-1zM143,753h2v1h-2zM147,753h1v1h-1zM150,753h1v1h-1zM86,754h2v1h-2zM89,754h1v1h-1zM92,754h1v1h-1zM103,754h1v1h-1zM105,754h1v1h-1zM111,754h2v1h-2zM120,754h2v1h-2zM125,754h3v1h-3zM133,754h1v1h-1zM137,754h4v1h-4zM145,754h2v1h-2zM149,754h1v1h-1zM90,755h2v1h-2zM104,755h1v1h-1zM112,755h1v1h-1zM119,755h1v1h-1zM122,755h1v1h-1zM125,755h1v1h-1zM141,755h2v1h-2zM145,755h2v1h-2zM148,755h1v1h-1zM113,756h1v1h-1zM115,756h4v1h-4zM123,756h2v1h-2zM143,756h2v1h-2zM147,756h1v1h-1zM114,757h1v1h-1z" fill="#000"/><path d="M803,566 L797.1,565.5 L791.2,563.3M803,568.0160876352028 L797.3,569.6 L791.5,567.1M797.3,569.6 L794.4,565.9M803,570.9636366461914 L798.2,570.8 L793.3,572.1M798.2,570.8 L796.5,567.7M803,574.2293092753638 L799.2,574.6 L795.3,576.2M799.2,574.6 L795.9,571.4M803,576.9572544728298 L798.0,577.9 L793.1,577.4M798.0,577.9 L796.2,575.5M803,579.6602155105413 L798.6,578.5 L794.3,580.8M803,581.797188900819 L796.7,581.8 L790.4,578.9M796.7,581.8 L793.0,578.7M803,585.2893030052218 L795.5,585.6 L788.1,588.0M795.5,585.6 L794.5,582.3M803,588.6387266059114 L795.1,587.0 L787.2,587.0M803,591.6889951678413 L796.8,592.2 L790.6,589.8M796.8,592.2 L795.3,593.1M803,596.0848099375787 L795.2,596.3 L787.5,596.9M795.2,596.3 L793.4,600.3M803,600.5797206142488 L795.5,601.4 L788.1,604.1M795.5,601.4 L792.7,597.7M803,603.4945877591774 L798.0,603.9 L793.1,605.5M798.0,603.9 L796.0,606.8M803,606.9549373257706 L797.0,606.6 L791.1,609.5M797.0,606.6 L796.0,609.0M803,609.7767177019184 L797.0,608.6 L790.9,608.3M797.0,608.6 L795.7,609.7M803,612.0343912917572 L798.5,610.1 L794.1,611.8M803,615.2777177945363 L798.2,614.3 L793.4,615.7M798.2,614.3 L796.5,618.0M803,618.2799778594265 L796.7,619.7 L790.4,618.9M803,620.7076272473793 L798.8,619.7 L794.6,617.0M803,623.1395176281894 L799.3,625.1 L795.5,625.7M799.3,625.1 L798.1,622.8M803,626.1117142424519 L797.8,628.0 L792.5,627.1M797.8,628.0 L795.1,625.1M803,628.3281848965278 L797.5,629.1 L792.0,626.5M797.5,629.1 L794.4,631.2M803,631.2856870900564 L799.0,630.0 L795.0,631.3M803,635.4863264051638 L797.2,633.9 L791.4,631.2M797.2,633.9 L795.7,634.9M803,637.697007146277 L798.5,636.6 L794.0,633.7M798.5,636.6 L796.1,637.1M803,640.6677171608884 L795.8,640.6 L788.6,643.3M795.8,640.6 L792.0,636.8M803,645.1506018656806 L799.0,645.3 L795.0,645.5M799.0,645.3 L795.3,641.9M803,648.7576280175068 L797.4,648.0 L791.9,649.3M803,651.0156531924603 L798.1,650.8 L793.3,650.8M803,653.1480233492325 L797.7,652.6 L792.4,654.9M797.7,652.6 L794.2,654.5M803,656.710488340741 L798.9,654.9 L794.9,655.4" fill="none" stroke="#000" stroke-width="1.3"/><path d="M786,657 L790,670 L788,680 L791,690 L796,704 L789,713 L784,725 L786,732" fill="none" stroke="#000" stroke-width="2.6"/><path d="M786,657 L790,670 L788,680 L791,690 L796,704 L789,713 L784,725 L786,732" fill="none" stroke="#024567" stroke-width="1"/><path d="M223,675h3v1h-3zM223,676h3v1h-3zM218,682h1v1h-1zM225,682h3v1h-3zM225,683h3v1h-3zM226,684h2v1h-2zM221,688h2v1h-2zM223,689h1v1h-1zM216,693h1v1h-1zM220,696h1v1h-1zM219,697h2v1h-2zM210,700h2v1h-2zM210,701h3v1h-3zM210,702h3v1h-3zM218,702h1v1h-1zM218,703h1v1h-1zM218,704h1v1h-1zM201,705h2v1h-2zM199,706h3v1h-3zM215,707h2v1h-2zM215,708h1v1h-1zM196,710h1v1h-1zM211,710h2v1h-2zM195,711h2v1h-2zM211,711h1v1h-1zM196,712h1v1h-1zM210,712h2v1h-2zM195,713h3v1h-3zM203,713h1v1h-1zM196,714h2v1h-2zM203,714h1v1h-1zM184,715h1v1h-1zM183,716h3v1h-3zM197,716h1v1h-1zM183,717h2v1h-2zM197,717h2v1h-2zM197,718h2v1h-2zM192,722h2v1h-2zM199,722h1v1h-1zM193,723h1v1h-1zM204,724h1v1h-1zM188,726h2v1h-2zM192,726h1v1h-1zM215,726h1v1h-1zM188,727h2v1h-2zM192,727h2v1h-2zM211,727h1v1h-1zM193,728h1v1h-1zM218,738h2v1h-2zM219,739h1v1h-1zM219,740h1v1h-1zM221,744h2v1h-2z" fill="#5b504b"/><path d="M16,718 L25,716 L32,719 L39,722 L34,729 L30,729 L16,721Z" fill="#5b504b" stroke="#000" stroke-width="1"/><path d="M249.8,678.5 L253.5,687 L252.2,700.6 L246,711.7 L236.2,722.8 L224,731.4" fill="none" stroke="#000" stroke-width="1.2" stroke-dasharray="6 1 3 2 9 2 2 3 5 1"/><path d="M511,712 L522,716 L532,719 M533,719 L545,714 L558,706 L569,699" fill="none" stroke="#000" stroke-width="1.6"/><path d="M621,681 L631,686 L638,693 L643,703 L655,715 L658,727 L671,736 L680,748 L683,757 L701,759 L706,771 L713,783 L711,792" fill="none" stroke="#000" stroke-width="2.2"/><path d="M6,256 L37,255 L52,254 L81,243 L111,236 L135,226 L153,223 L160,226 L172,224 L187,217 L205,203 L228,192 L272,170 L300,165 L330,155 L380,145 L420,132 L460,134 L482,140 L490,137 L517,137 L524,143 L551,159 L573,160 L593,160 L618,148 L642,150 L658,143 L690,126 L714,113 L739,99 L769,84 L806,71M181,6 L194,20 L201,42 L200,94 L189,113 L185,131 L174,155 L162,177 L153,190 L145,202 L148,210 L160,224 L163,227 L167,252 L172,288 L177,325 L182,362 L183,380 L177,400 L163,429 L158,454 L148,478 L135,508 L131,540 L131,580 L127,597 L128,639 L133,659 L133,673M6,460 L49,465 L91,476 L133,474 L148,478 L172,478 L200,476 L259,474 L284,466 L301,446 L333,414 L345,402 L367,400 L380,392 L394,371 L415,367 L439,363 L470,364 L478,364 L528,354 L556,351 L573,347 L583,351 L595,353 L606,353 L616,360 L631,362 L680,370 L729,372 L754,372 L778,357 L806,340M472,6 L471,25 L469,42 L460,52 L435,65 L420,91 L405,125 L400,170 L397,200 L397,222 L397,252 L396,276 L397,301 L401,338 L401,355 L402,374 L405,381 L403,396 L409,411 L419,432 L424,442 L427,449 L439,471 L432,491 L420,513 L400,542 L390,557 L367,575 L338,594 L313,604 L306,617 L306,626M506,240 L498,252 L488,276 L471,308 L454,330 L427,350 L412,362 L405,381 L388,386 L384,390 L369,398 L350,400M259,474 L249,493 L237,515 L234,528 L217,547 L215,580 L205,602 L190,641 L186,655 L180,666 L168,680 L161,687M6,661 L15,658 L49,649 L81,641 L111,641 L148,644 L172,651 L187,656 L200,654 L222,646 L244,643 L269,644 L293,639 L306,626 L318,624 L343,626 L362,636 L380,634 L392,624 L417,619 L442,617 L461,620 L479,615 L513,617 L540,626 L565,634 L580,639 L606,640 L631,644 L668,651 L704,659 L739,661 L783,654 L806,654M81,641 L94,659 L108,668 L133,673 L158,683 L172,676 L187,658M6,617 L14,634 L12,656 L15,661M439,471 L462,472 L486,461 L511,446 L526,429 L548,400 L556,380 L565,370 L578,360 L583,351 L593,336 L614,322 L643,308 L680,284 L724,259 L739,254 L759,242 L778,232 L806,222M593,160 L578,182 L567,192 L557,205 L540,222 L523,238 L535,252 L543,284 L557,308 L558,319 L570,325 L579,341 L583,351 L582,359 L592,367 L602,381 L613,410 L628,422 L638,429 L631,444 L629,491 L633,523 L645,543 L652,580 L658,592 L672,627 L687,641 L704,659 L714,673 L720,690 L729,708 L740,729 L747,748 L750,771 L754,792M240,6 L248,15 L258,30 L263,42 L264,52 L272,59 L290,60 L300,55 L320,58 L345,80 L370,100 L395,115 L405,125 L430,150 L460,185 L474,217 L488,234 L506,240 L514,236 L523,238M240,6 L236,12 L228,22 L228,52 L221,62 L201,71M658,143 L673,158 L685,177 L690,187 L702,190 L717,190 L734,215 L746,217 L759,239 L766,264 L771,281 L783,293 L806,306M714,190 L751,182 L798,172 L806,175M739,254 L744,264 L764,279 L783,289M628,422 L645,439 L680,459 L709,466 L759,474 L798,486 L806,493M806,535 L801,562 L796,575 L786,592 L786,634 L788,659 L803,673M572,310 L570,325" fill="none" stroke="#806c1a" stroke-width="1" shape-rendering="crispEdges"/><ellipse cx="401" cy="127" rx="35" ry="27" fill="none" stroke="#806c1a" stroke-width="1"/><ellipse cx="586" cy="348" rx="10" ry="12" fill="none" stroke="#806c1a" stroke-width="1"/><ellipse cx="167" cy="226" rx="9" ry="6" fill="none" stroke="#806c1a" stroke-width="1"/><circle cx="783" cy="654" r="5" fill="none" stroke="#806c1a" stroke-width="1"/><path d="M6,105 L155,105.5 L156.2,112.2 L161,114.7 L159.9,123.3 L156.2,128.3 L150,132 L138,149.2 L187,149.2M204.3,6 L201.9,11.1 L208,22.2 L208,28.9 L203.1,30.8 L201.3,34.5 L205.6,38.2 L206.8,41.9 L212.3,53 L214.2,56.7 L217.9,60.3 L221.6,59.1 L219.1,54.2 L216.7,55.4 L219,59 L223,58 L225.3,57.9 L226.5,61.6 L231.4,62.8 L231.4,69 L227.1,73.9 L227.7,78.8 L231.4,81.3 L226.5,86.2 L227.7,91.1 L224,96 L221.6,98.5 L215.4,92.4 L211.7,93.6 L209.1,103.6 L205.4,107.3 L202.9,104.9 L204.2,102.4 L201.7,97.5 L198,98.7 L198,102.4 L201.7,104.2 L200.5,107.3 L199.3,111 L201.7,118.4 L196.8,118.4 L194.3,120.9 L196.8,124.6 L200.5,125.2 L198,127 L191.9,126.4 L188.2,127.6 L191.9,131.9 L196.8,136.9 L191.9,140.6 L189.4,144.3 L187,149.2 L187,152.9 L191.9,156.6 L190.6,159 L185.7,157.8 L183.3,160.3 L186.9,164 L183.3,166.4 L179.6,168.9 L174.6,171.4 L169.7,170.7 L169.7,175 L172.2,178.7 L175.9,180 L174.6,182.4 L169.7,184.9 L172.2,189.8 L168.5,188.6 L164.8,188.6 L162.3,192.3 L162.8,194.9 L164,197.4 L161.6,202.3 L157.2,196.2 L154.8,197.4 L152.3,202.3 L156,204.8 L159.7,203.5 L157.9,207.2 L153.5,211.6 L154.8,214.6 L159.1,215.9 L160.3,219.6 L158.5,222.6 L160.3,225.7 L156,226.3 L153.5,227 L152.3,230.6 L151.7,234.3 L147.4,235.6 L143.7,236.2 L142.5,238.6 L146.2,241.7 L147.4,245.4 L144.9,247.9 L141,251 L136.5,253.6 L134,249.9 L131.6,247.5 L129.1,249.9 L131.6,254.9 L132.8,261 L127.9,261 L126.7,256.1 L124.2,259.8 L123,264.7 L131.6,267.2 L126.7,270.9 L123,267.2 L121.7,274.6 L125.4,278.3 L121.7,281.9 L123,290.6 L116.8,293 L115.6,299.2 L114.3,294.3 L109.4,294.3 L110.6,298 L109.4,301.6 L104.5,302.9 L103.3,307.8 L97.1,305.3 L98.3,309 L105.7,311.5 L104.5,314 L95.9,312.7 L94.6,316.4 L100.8,318.9 L99.6,323.8 L93.4,325 L92.2,327.5 L84.8,330 L92.2,332.4 L87.2,337.4 L86.8,340 L91.7,344.9 L90.5,348 L83.1,347.4 L80.6,349.9 L81.9,353.5 L89.3,355.4 L86.8,357.2 L81.9,356 L79.4,353.5 L75.7,353.5 L74.5,356 L76.9,358.5 L80.6,360.9 L80.6,364 L74.5,365.9 L75.7,369.6 L78.2,372 L75.7,374.5 L74.5,376.9 L79.4,378.2 L76.9,379.4 L81.9,381.9 L86.8,376.9 L85.6,375.7 L83.1,379.4 L80.6,384.3 L81.9,390.5 L85.6,394.2 L88,393 L86.8,390.5 L84.3,391.7 L85.6,400.3 L84.3,404 L78.2,403.4 L76.9,406.5 L79.4,410.2 L81.9,412.7 L79.4,416.4 L75.7,420 L76.9,424.4 L80.6,425 L81.9,420 L83.1,417.6 L85.6,421.3 L85.6,427.4 L80.6,431.1 L79.4,436.1 L79.3,438.7 L86.7,439.9 L87.9,442.4 L81.7,446.1 L80.5,451 L83,452.2 L90.3,451 L90.3,448.5 L87.9,448.5 L87.9,453.5 L84.2,455.9 L83,459.6 L84.2,464.6 L90.3,467 L94,467 L91.6,470.7 L92.8,474.4 L97.7,475.6 L100.2,471.9 L96.5,476.9 L94,479.3 L91.6,484.3 L89.1,486.7 L81.7,485.5 L79.3,488 L79.3,492.9 L84.2,495.3 L90.3,492.9 L90.3,490.4 L86.7,490.4 L87.9,495.3 L84.2,497.8 L80.5,499 L81.7,501.5 L84.2,504 L84.2,506.4 L76.8,508.9 L75.6,513.8 L70.6,517.5 L66.9,518.7 L71.9,521.2 L69.4,523.7 L64.5,526.1 L63.2,527.8 L66.6,526.7 L72.1,527.8 L71,524.4 L67.7,526.7 L62.1,528.9 L62.1,536.6 L57.7,539.4 L54.4,536.6 L53.3,540 L56.6,542.2 L61,541.1 L61,543.3 L53.3,546.6 L52.2,548.8 L53.3,554.4 L55.5,555.5 L56.6,558.8 L53.3,561.6 L49.9,561 L48.3,557.7 L51,556.6 L52.2,559.9 L51,562.1 L53.3,566.6 L53.3,569.9 L43.3,570.4 L46.6,576.5 L44.4,582.1 L48.8,587.6 L49.9,591 L44.4,594.3M144,238.5 L588,239 L679,239M209,104.2 L311,105 L310,89 L325,92 L480,93 L636,96 L786,94 L806,98M225.3,54.2 L228.032,52.2303 L230.702,50.2071 L232.604,47.517 L233.9,44.3 L236.363,41.1189 L240,39.4 L243.1,38.327 L246.2,39.4 L249.565,41.9198 L253.6,43.1 L256.914,44.3862 L260.005,46.1015 L263,48 L266.284,49.1554 L269.234,50.9114 L272,53 L275.968,52.2434 L280,52 L282.486,48.7776 L284,45 L282.795,41.4565 L281.473,37.9759 L279.108,35.0571 L277,32 L278.236,28.7605 L280.307,25.9854 L282,23 L285.239,22.6081 L288.396,21.1518 L291.711,21.7495 L295,22 L300,20 L302.412,17.4123 L305,15 L304.27,12 L303.614,9 L305,6M636,95 L638.744,93.7456 L641.205,91.6934 L644.185,91.107 L646.872,89.6934 L649.9,89.2456 L653,89 L656.103,87.995 L659.027,86.3368 L662.137,85.3595 L665.242,84.3637 L668.385,83.5074 L671.77,83.5388 L675,83 L676.22,79.7521 L677.236,76.3901 L680,74 L683.07,73.2093 L685.806,71.418 L688.691,70.0738 L691.754,69.2618 L695,69 L695.547,65.9734 L697.262,63.2064 L697,60 L700.599,58.4429 L703.715,56.0804 L707,54 L708.512,51.1687 L708,48 L710.999,46.9572 L713.556,45.1033 L716.122,43.2656 L719,42 L721.686,40.3331 L724.34,38.5974 L727.562,38.1229 L730.281,36.5299 L733.113,35.1881 L736.24,34.5021 L739,33 L741.788,31.2141 L744.241,29.0331 L747.141,27.3786 L748.936,24.4242 L750.872,21.6365 L753.527,19.6939 L756.302,17.8916 L759,16 L761.219,13.6486 L764,12 L760.986,11.2989 L757.818,10.9581 L755.366,8.94571 L752.766,7.27884 L750,6M764,12 L766,17 L765.925,20.656 L767.314,23.8725 L769,27 L771.463,29.1034 L773.425,31.775 L775.515,34.302 L778.226,36.1254 L780.694,38.2225 L783.612,39.8113 L786,42 L789.224,41.2872 L792.037,39.5899 L795.037,38.339 L798,37 L800.698,35.3831 L803.098,33.2909 L806,32M786,94 L784.136,96.712 L783.306,99.7687 L783,103 L781.92,105.909 L780.692,108.799 L780.337,111.805 L781.235,114.978 L781,118 L778.196,119.535 L775.072,119.789 L772.094,120.624 L769,121 L767.556,124.197 L766.238,127.484 L764.238,130.284 L761.214,132.353 L759,135 L756,134.398 L753,134.763 L750,135.751 L747,135.353 L744,135 L740.826,135.834 L737.654,136.669 L734.565,137.706 L732,140 L728.967,141.688 L726.001,143.456 L723.217,145.438 L721.178,148.301 L719,151 L717.073,147.09 L714,144 L710.605,145.237 L707,145 L704.743,147.304 L702.712,149.89 L700.207,151.883 L697,153 L696.311,156.822 L694.425,160.046 L692,163 L689.119,164.205 L686.82,166.242 L683.986,167.515 L682,170 L679,170.191 L676,170 L673.739,172.315 L671.401,174.508 L668,175 L664.617,177.663 L661,180 L657.759,181.639 L654.693,183.539 L651.578,185.367 L649,188 L646.208,186.397 L643.185,185.834 L640,186 L636.377,186.906 L632.767,187.885 L629,188 L625.54,188.839 L623.056,191.435 L620,193 L617.726,195.782 L615.579,198.709 L612,200 L610.857,203.628 L610.303,207.416 L609,211 L605,215 L601,214.43 L597,215 L594,214 L591,218 L591.003,221.787 L589,225 L589.618,228.562 L589.204,232.05 L588.213,235.497 L588,239M300,238 L307,248 L303,286 L298,323 L293,380 L289,417 L284,461 L280,508 L281,552 L282,580 L285,609 L286,649M492,239 L497,261 L501,279 L508,328 L516,380 L526,429 L538,459 L540,474 L545,481 L534,491 L533,503 L534,538 L530,580 L538,594 L543,609 L547,619M344,594 L538,594M344,594 L343.468,597.3 L343.449,600.719 L342.846,604.003 L341,607 L343.002,609.499 L345.347,611.722 L346.957,614.534 L348.768,617.186 L351.308,619.254 L353,622 L355.309,624.674 L356.234,628.155 L358.107,631.083 L360,634 L357.943,637.261 L357,641 L358.624,644.146 L359.316,647.572 L360,651M547,619 L580,621 L606,624 L744,633 L746,644 L749,651 L756,651 L760,639 L757,619 L766,610 L786,617M679,239 L677,244 L674.318,245.594 L672.412,248.092 L670.637,250.743 L668.517,252.992 L665.854,254.607 L663,256 L661.926,260.16 L660,264 L662.437,266.079 L664.189,269.013 L666.8,270.875 L670.068,271.916 L672.864,273.545 L675,276 L677.624,277.844 L680.006,279.992 L682.069,282.539 L685,284 L688.333,283.195 L691.667,282.868 L695,284 L696.379,286.741 L697.16,289.795 L698.214,292.707 L699.334,295.584 L701.036,298.154 L703.426,300.362 L705,303 L704.732,306.52 L704.975,309.938 L707,313 L709.173,315.711 L711.017,318.655 L712.849,321.607 L714.09,324.975 L716.346,327.628 L719,330 L721.621,332.22 L724.033,334.763 L726.775,336.797 L729.578,338.736 L732.604,340.335 L735.896,341.523 L739,343 L740.911,345.346 L743.205,347.391 L745.103,349.748 L747.537,351.681 L749.535,353.959 L751.138,356.549 L752.606,359.246 L754,362 L756.9,363.5 L758.773,366.284 L761.391,368.137 L764,370 L764.584,373.35 L764.661,376.801 L766,380 L767.302,383.105 L768.356,386.358 L770.718,388.826 L771.747,392.094 L773.576,394.883 L775.69,397.5 L778,400 L780.317,402.097 L782.978,403.676 L784.922,406.331 L787.858,407.499 L790.163,409.612 L793.043,410.863 L796,412 L796.585,415.619 L798,419 L799.323,422.005 L800.721,424.976 L801.233,428.341 L802.104,431.546 L804.308,434.159 L806,437M679,239 L709,227 L732,221 L741,220 L806,222M6,415.1 L79.4,415.1M44.4,594.3 L186,594.3 L182,609 L177,622 L187,641 L190,645 L192,654 L195,664 L197,668" fill="none" stroke="#000" stroke-width="1" shape-rendering="crispEdges"/><circle cx="407" cy="407" r="159.5" fill="none" stroke="#c8c8c8" stroke-width="1" shape-rendering="crispEdges"/><circle cx="407" cy="407" r="279.5" fill="none" stroke="#c8c8c8" stroke-width="1" shape-rendering="crispEdges"/><circle cx="407" cy="407" r="399.5" fill="none" stroke="#c8c8c8" stroke-width="1" shape-rendering="crispEdges"/><circle cx="407" cy="407" r="519.5" fill="none" stroke="#c8c8c8" stroke-width="1" shape-rendering="crispEdges"/><circle cx="407" cy="407" r="39.5" fill="none" stroke="#ff1010" stroke-width="1" shape-rendering="crispEdges"/><rect x="394.0" y="5.5" width="22.5" height="4" fill="#5b504b"/><rect x="394.0" y="125.5" width="22.600000000000023" height="4" fill="#5b504b"/><rect x="394.5" y="245.5" width="22.69999999999999" height="4" fill="#5b504b"/><rect x="398.0" y="365.5" width="15.300000000000011" height="4" fill="#5b504b"/><text x="394.84" y="11.1" font-size="10.5" font-weight="normal" fill="#f4eca0" textLength="20.83" lengthAdjust="spacingAndGlyphs" font-family="Liberation Mono" >313</text><text x="394.72" y="131.1" font-size="10.5" font-weight="normal" fill="#f4eca0" textLength="21.17" lengthAdjust="spacingAndGlyphs" font-family="Liberation Mono" >219</text><text x="395.22" y="251.1" font-size="10.5" font-weight="normal" fill="#f4eca0" textLength="21.16" lengthAdjust="spacingAndGlyphs" font-family="Liberation Mono" >125</text><text x="398.86" y="371.1" font-size="10.5" font-weight="normal" fill="#f4eca0" textLength="13.48" lengthAdjust="spacingAndGlyphs" font-family="Liberation Mono" >31</text><circle cx="13.5" cy="21.5" r="4.3" fill="none" stroke="#f0c400" stroke-width="1.15"/><path d="M11.0,21.5H16.0" stroke="#f0c400" stroke-width="1" shape-rendering="crispEdges"/><circle cx="51.5" cy="68.5" r="4.3" fill="none" stroke="#f0c400" stroke-width="1.15"/><path d="M49.0,68.5H54.0" stroke="#f0c400" stroke-width="1" shape-rendering="crispEdges"/><circle cx="8.5" cy="154.5" r="4.3" fill="none" stroke="#e04400" stroke-width="1.15"/><path d="M6.0,154.5H11.0" stroke="#e04400" stroke-width="1" shape-rendering="crispEdges"/><circle cx="64.5" cy="164.5" r="4.3" fill="none" stroke="#e88400" stroke-width="1.15"/><path d="M62.0,164.5H67.0M64.5,162.0V167.0" stroke="#e88400" stroke-width="1" shape-rendering="crispEdges"/><circle cx="68.5" cy="166.5" r="4.3" fill="none" stroke="#f0e000" stroke-width="1.15"/><path d="M66.0,166.5H71.0M68.5,164.0V169.0" stroke="#f0e000" stroke-width="1" shape-rendering="crispEdges"/><circle cx="89.5" cy="170.5" r="4.3" fill="none" stroke="#e04400" stroke-width="1.15"/><path d="M87.0,170.5H92.0M89.5,168.0V173.0" stroke="#e04400" stroke-width="1" shape-rendering="crispEdges"/><circle cx="35.5" cy="198.5" r="4.3" fill="none" stroke="#f0e000" stroke-width="1.15"/><path d="M33.0,198.5H38.0" stroke="#f0e000" stroke-width="1" shape-rendering="crispEdges"/><circle cx="32.5" cy="204.5" r="4.3" fill="none" stroke="#f0c400" stroke-width="1.15"/><path d="M30.0,204.5H35.0" stroke="#f0c400" stroke-width="1" shape-rendering="crispEdges"/><path d="M19.5,202.5H27.5M23.5,198.5V206.5" stroke="#e04400" stroke-width="1" shape-rendering="crispEdges"/><circle cx="126.5" cy="213.5" r="4.3" fill="none" stroke="#f0c400" stroke-width="1.15"/><path d="M124.0,213.5H129.0" stroke="#f0c400" stroke-width="1" shape-rendering="crispEdges"/><circle cx="26.5" cy="231.5" r="4.3" fill="none" stroke="#f0e000" stroke-width="1.15"/><path d="M24.0,231.5H29.0" stroke="#f0e000" stroke-width="1" shape-rendering="crispEdges"/><circle cx="87.5" cy="253.5" r="4.3" fill="none" stroke="#e04400" stroke-width="1.15"/><path d="M85.0,253.5H90.0" stroke="#e04400" stroke-width="1" shape-rendering="crispEdges"/><circle cx="58.5" cy="311.5" r="4.3" fill="none" stroke="#f0c400" stroke-width="1.15"/><path d="M56.0,311.5H61.0" stroke="#f0c400" stroke-width="1" shape-rendering="crispEdges"/><circle cx="91.5" cy="570.5" r="4.3" fill="none" stroke="#e04400" stroke-width="1.15"/><path d="M89.0,570.5H94.0" stroke="#e04400" stroke-width="1" shape-rendering="crispEdges"/><circle cx="92.5" cy="606.5" r="4.3" fill="none" stroke="#e04400" stroke-width="1.15"/><path d="M90.0,606.5H95.0M92.5,604.0V609.0" stroke="#e04400" stroke-width="1" shape-rendering="crispEdges"/><circle cx="119.5" cy="608.5" r="4.3" fill="none" stroke="#f0c400" stroke-width="1.15"/><path d="M117.0,608.5H122.0" stroke="#f0c400" stroke-width="1" shape-rendering="crispEdges"/><circle cx="130.5" cy="618.5" r="4.3" fill="none" stroke="#f0a000" stroke-width="1.15"/><path d="M128.0,618.5H133.0" stroke="#f0a000" stroke-width="1" shape-rendering="crispEdges"/><circle cx="137.5" cy="631.5" r="4.3" fill="none" stroke="#f0e000" stroke-width="1.15"/><path d="M135.0,631.5H140.0" stroke="#f0e000" stroke-width="1" shape-rendering="crispEdges"/><circle cx="52.5" cy="612.5" r="4.3" fill="none" stroke="#e88400" stroke-width="1.15"/><path d="M50.0,612.5H55.0" stroke="#e88400" stroke-width="1" shape-rendering="crispEdges"/><circle cx="66.5" cy="623.5" r="4.3" fill="none" stroke="#e04400" stroke-width="1.15"/><path d="M64.0,623.5H69.0M66.5,621.0V626.0" stroke="#e04400" stroke-width="1" shape-rendering="crispEdges"/><circle cx="84.5" cy="638.5" r="4.3" fill="none" stroke="#f0a000" stroke-width="1.15"/><path d="M82.0,638.5H87.0" stroke="#f0a000" stroke-width="1" shape-rendering="crispEdges"/><circle cx="100.5" cy="650.5" r="4.3" fill="none" stroke="#e04400" stroke-width="1.15"/><path d="M98.0,650.5H103.0M100.5,648.0V653.0" stroke="#e04400" stroke-width="1" shape-rendering="crispEdges"/><circle cx="38.5" cy="658.5" r="4.3" fill="none" stroke="#f0a000" stroke-width="1.15"/><path d="M36.0,658.5H41.0" stroke="#f0a000" stroke-width="1" shape-rendering="crispEdges"/><circle cx="9.5" cy="660.5" r="4.3" fill="none" stroke="#e88400" stroke-width="1.15"/><path d="M7.0,660.5H12.0M9.5,658.0V663.0" stroke="#e88400" stroke-width="1" shape-rendering="crispEdges"/><circle cx="30.5" cy="671.5" r="4.3" fill="none" stroke="#f0a000" stroke-width="1.15"/><path d="M28.0,671.5H33.0" stroke="#f0a000" stroke-width="1" shape-rendering="crispEdges"/><circle cx="39.5" cy="670.5" r="4.3" fill="none" stroke="#f0e000" stroke-width="1.15"/><path d="M37.0,670.5H42.0M39.5,668.0V673.0" stroke="#f0e000" stroke-width="1" shape-rendering="crispEdges"/><circle cx="76.5" cy="678.5" r="4.3" fill="none" stroke="#f0e000" stroke-width="1.15"/><path d="M74.0,678.5H79.0M76.5,676.0V681.0" stroke="#f0e000" stroke-width="1" shape-rendering="crispEdges"/><circle cx="84.5" cy="686.5" r="4.3" fill="none" stroke="#f0e000" stroke-width="1.15"/><path d="M82.0,686.5H87.0M84.5,684.0V689.0" stroke="#f0e000" stroke-width="1" shape-rendering="crispEdges"/><circle cx="80.5" cy="695.5" r="4.3" fill="none" stroke="#e88400" stroke-width="1.15"/><path d="M78.0,695.5H83.0" stroke="#e88400" stroke-width="1" shape-rendering="crispEdges"/><circle cx="41.5" cy="746.5" r="4.3" fill="none" stroke="#f0c400" stroke-width="1.15"/><path d="M39.0,746.5H44.0" stroke="#f0c400" stroke-width="1" shape-rendering="crispEdges"/><path d="M389.5,32.5H397.5M393.5,28.5V36.5" stroke="#f0e000" stroke-width="1" shape-rendering="crispEdges"/><circle cx="446.5" cy="41.5" r="4.3" fill="none" stroke="#f0e000" stroke-width="1.15"/><path d="M444.0,41.5H449.0" stroke="#f0e000" stroke-width="1" shape-rendering="crispEdges"/><circle cx="427.5" cy="67.5" r="4.3" fill="none" stroke="#f0a000" stroke-width="1.15"/><path d="M425.0,67.5H430.0" stroke="#f0a000" stroke-width="1" shape-rendering="crispEdges"/><circle cx="436.5" cy="68.5" r="4.3" fill="none" stroke="#f0a000" stroke-width="1.15"/><path d="M434.0,68.5H439.0" stroke="#f0a000" stroke-width="1" shape-rendering="crispEdges"/><circle cx="418.5" cy="75.5" r="4.3" fill="none" stroke="#e88400" stroke-width="1.15"/><path d="M416.0,75.5H421.0" stroke="#e88400" stroke-width="1" shape-rendering="crispEdges"/><circle cx="425.5" cy="78.5" r="4.3" fill="none" stroke="#f0a000" stroke-width="1.15"/><path d="M423.0,78.5H428.0M425.5,76.0V81.0" stroke="#f0a000" stroke-width="1" shape-rendering="crispEdges"/><circle cx="413.5" cy="91.5" r="4.3" fill="none" stroke="#f0c400" stroke-width="1.15"/><path d="M411.0,91.5H416.0" stroke="#f0c400" stroke-width="1" shape-rendering="crispEdges"/><circle cx="435.5" cy="158.5" r="4.3" fill="none" stroke="#f0a000" stroke-width="1.15"/><path d="M433.0,158.5H438.0" stroke="#f0a000" stroke-width="1" shape-rendering="crispEdges"/><circle cx="428.5" cy="166.5" r="4.3" fill="none" stroke="#f0a000" stroke-width="1.15"/><path d="M426.0,166.5H431.0M428.5,164.0V169.0" stroke="#f0a000" stroke-width="1" shape-rendering="crispEdges"/><circle cx="616.5" cy="16.5" r="4.3" fill="none" stroke="#f0c400" stroke-width="1.15"/><path d="M614.0,16.5H619.0" stroke="#f0c400" stroke-width="1" shape-rendering="crispEdges"/><circle cx="626.5" cy="25.5" r="4.3" fill="none" stroke="#f0c400" stroke-width="1.15"/><path d="M624.0,25.5H629.0M626.5,23.0V28.0" stroke="#f0c400" stroke-width="1" shape-rendering="crispEdges"/><circle cx="719.5" cy="206.5" r="4.3" fill="none" stroke="#f0a000" stroke-width="1.15"/><path d="M717.0,206.5H722.0M719.5,204.0V209.0" stroke="#f0a000" stroke-width="1" shape-rendering="crispEdges"/><circle cx="647.5" cy="262.5" r="4.3" fill="none" stroke="#e04400" stroke-width="1.15"/><path d="M645.0,262.5H650.0" stroke="#e04400" stroke-width="1" shape-rendering="crispEdges"/><circle cx="657.5" cy="283.5" r="4.3" fill="none" stroke="#e04400" stroke-width="1.15"/><path d="M655.0,283.5H660.0M657.5,281.0V286.0" stroke="#e04400" stroke-width="1" shape-rendering="crispEdges"/><path d="M779.5,224.5H787.5" stroke="#f0e000" stroke-width="1" shape-rendering="crispEdges"/></svg>
<svg width="1138" height="812" viewBox="0 0 1138 812" style="position:absolute;left:0;top:0" font-family="Liberation Sans">
<rect x="8" y="758" width="246" height="46" fill="#000"/>
<rect x="9.5" y="759.5" width="243" height="42.5" fill="none" stroke="#a8a8a8"/>
<circle cx="60.5" cy="780.5" r="4.5" fill="none" stroke="#00e8f0"/><path d="M58,780.5H63M81.8,780.5H89.2" stroke="#00e8f0"/>
<circle cx="110.5" cy="780.5" r="4.5" fill="none" stroke="#00e8f0"/><path d="M108,780.5H113M110.5,778V783M131.7,780.5H139.1M135.4,777V784.5" stroke="#00e8f0"/>
<circle cx="60.5" cy="793.5" r="4.5" fill="none" stroke="#f0f000"/><path d="M58,793.5H63M81.8,793.5H89.2" stroke="#f0f000"/>
<circle cx="110.5" cy="793.5" r="4.5" fill="none" stroke="#f0f000"/><path d="M108,793.5H113M110.5,791V796M131.7,793.5H139.1M135.4,790V797.5" stroke="#f0f000"/>
<rect x="685" y="792" width="121" height="14" fill="#000"/>
<rect x="812.5" y="8.5" width="319" height="319" rx="6" fill="none" stroke="#b4b4b4"/>
<rect x="812.5" y="333.5" width="319" height="114" rx="6" fill="none" stroke="#b4b4b4"/>
<rect x="812.5" y="453.5" width="319" height="349" rx="6" fill="none" stroke="#b4b4b4"/>
<rect x="819.5" y="16.5" width="57" height="17" fill="#600000" stroke="#d0d0d0"/>
<rect x="883.5" y="16.5" width="57" height="17" fill="#333" stroke="#d0d0d0"/>
<rect x="994.5" y="16.5" width="127" height="17" fill="#333" stroke="#d0d0d0"/>
<rect x="821.5" y="64.5" width="81" height="15" fill="#5e5e5e" stroke="#c8c8c8"/>
<rect x="931.5" y="64.5" width="81" height="15" fill="#5e5e5e" stroke="#c8c8c8"/>
<rect x="1041.5" y="64.5" width="81" height="15" fill="#5e5e5e" stroke="#c8c8c8"/>
<path d="M821,217.5H1124M821,358.5H1123" stroke="#a0a0a0"/>
<rect x="925" y="227" width="19" height="11" fill="#ff0000"/>
<rect x="1028" y="227" width="27.5" height="11" fill="#99ccff"/>
<rect x="925" y="281" width="3" height="11" fill="#e070b0"/>
<rect x="1028" y="281" width="3" height="11" fill="#00e000"/>
<rect x="925.5" y="227.5" width="50" height="10.5" rx="2" fill="none" stroke="#808080"/>
<rect x="1028.5" y="227.5" width="50" height="10.5" rx="2" fill="none" stroke="#808080"/>
<rect x="925.5" y="281.5" width="50" height="10.5" rx="2" fill="none" stroke="#808080"/>
<rect x="1028.5" y="281.5" width="50" height="10.5" rx="2" fill="none" stroke="#808080"/>
<path d="M1015.7,232.5H1022.4M1015.7,286.5H1022.4" stroke="#ececec" stroke-width="1.6"/>
<path d="M1088.5,542.5V777.5M822,777.5H1088.5" stroke="#c8c8c8" stroke-width="1" fill="none"/><path d="M1084.5,777.5H1088.5M1086.5,738.4H1089.5M1084.5,699.2H1088.5M1086.5,660.0H1089.5M1084.5,620.9H1088.5M1086.5,581.8H1089.5M1084.5,542.6H1088.5M1088.5,777.5V780M1044.2,777.5V780M999.9,777.5V780M955.6,777.5V780M911.3,777.5V780M867.0,777.5V780M822.7,777.5V780" stroke="#c8c8c8" stroke-width="1" fill="none"/><polyline points="822,777.5 822.8,769.4 824,769.4 825.2,777.5 828.3,777.5 829.5,769.4 832.6,769.4 834.5,777.5 840.6,777.5 843,761.4 844.9,761.4 846.1,769.4 849.2,753.4 851,753.4 853.5,777.5 854.8,777.5 856.6,769.4 859.7,769.4 861.5,777.5 863.4,769.4 866.4,769.4 868.3,777.5 870.1,777.5 873.2,761.4 874.4,761.4 877.5,777.5 882.4,777.5 886.4,746.4 887.4,746.4 889.3,761.4 891.7,761.4 893,765 894.9,761.4 899,777.5 911.3,777.5 915.6,761.4 917.5,761.4 920.6,777.5 923,761.4 924.9,761.4 929.2,777.5 930.4,769.4 939,769.4 940.9,761.4 944.6,761.4 946.4,777.5 948.3,761.4 950.1,761.4 951.3,769.4 953.8,753.4 955,753.4 954.5,761.4 959.6,761.4 962,753.4 965,753.4 966.5,777.5 968.6,777.5 971.2,753.4 972.4,753.4 975,777.5 978.2,777.5 982.7,753.4 984,753.4 987.2,777.5 1019.3,777.5 1021.2,769.4 1023.8,769.4 1025.7,777.5 1034,777.5 1036.6,769.4 1039.2,769.4 1041.1,777.5 1045,777.5 1048.2,761.4 1049.5,761.4 1052.6,777.5 1054.5,769.4 1056.4,769.4 1058.4,777.5 1070.6,777.5 1072.5,769.4 1076.3,769.4 1078.3,777.5 1084.7,777.5 1087.9,761.4 1088.5,761.4" fill="none" stroke="#ffffff" stroke-width="1"/><polyline points="841,777.5 843.5,769.4 845,769.4" fill="none" stroke="#ff0000" stroke-width="1"/><polyline points="847,769.4 849.5,761.4 851,761.4 853,777.5" fill="none" stroke="#ff0000" stroke-width="1"/><polyline points="873.5,769.4 876,777.5" fill="none" stroke="#ff0000" stroke-width="1"/><polyline points="949.5,777.5 952,769.4 954,761.4" fill="none" stroke="#ff0000" stroke-width="1"/><polyline points="959,761.4 961,769.4 962,777.5" fill="none" stroke="#ff0000" stroke-width="1"/><polyline points="1043.5,777.5 1046,769.4" fill="none" stroke="#ff0000" stroke-width="1"/><polyline points="842,777.5 843.5,769.4 845.5,769.4 847.5,777.5 849.5,769.4 851.5,769.4 853.5,777.5" fill="none" stroke="#90c8ff" stroke-width="1"/><polyline points="871,777.5 873,769.4 875,769.4 877,777.5" fill="none" stroke="#90c8ff" stroke-width="1"/><polyline points="884,777.5 886,761.4 887.5,761.4 889,769" fill="none" stroke="#90c8ff" stroke-width="1"/><polyline points="948,777.5 950,769.4 951,761.4 955,769.4 959,769.4 961,777.5" fill="none" stroke="#90c8ff" stroke-width="1"/><polyline points="968,777.5 972,761.4" fill="none" stroke="#90c8ff" stroke-width="1"/><polyline points="980,769.4 982.5,761.4 984,761.4 986,777.5" fill="none" stroke="#90c8ff" stroke-width="1"/><polyline points="1045,777.5 1047,769.4 1050,777.5" fill="none" stroke="#90c8ff" stroke-width="1"/><polyline points="1085,777.5 1087,769.4" fill="none" stroke="#90c8ff" stroke-width="1"/><polyline points="883,777.5 885,769.4 888,769.4 890,777.5" fill="none" stroke="#e070b0" stroke-width="1"/><polyline points="969,777.5 971,761.4 973,761.4" fill="none" stroke="#e070b0" stroke-width="1"/><polyline points="1086,769.4 1088,769.4" fill="none" stroke="#e070b0" stroke-width="1"/><polyline points="980,777.5 981.5,769.4 984.5,769.4 986.5,777.5" fill="none" stroke="#00e000" stroke-width="1"/>
<text x="823.59" y="30.3" font-size="13" font-weight="bold" fill="#e0e0e0" textLength="48.89" lengthAdjust="spacingAndGlyphs" font-family="Liberation Sans" >STRIKE</text><text x="889.82" y="30.3" font-size="13" font-weight="bold" fill="#d0d0d0" textLength="44.27" lengthAdjust="spacingAndGlyphs" font-family="Liberation Sans" >NOISE</text><text x="997.80" y="30.3" font-size="13" font-weight="bold" fill="#ffffff" textLength="62.73" lengthAdjust="spacingAndGlyphs" font-family="Liberation Sans" >Bng 292°</text><text x="1075.26" y="30.3" font-size="13" font-weight="bold" fill="#00e000" textLength="43.47" lengthAdjust="spacingAndGlyphs" font-family="Liberation Sans" >416mi</text><text x="828.84" y="76.2" font-size="12" font-weight="normal" fill="#ececec" textLength="66.39" lengthAdjust="spacingAndGlyphs" font-family="Liberation Sans" >Strikes/min</text><text x="942.94" y="76.2" font-size="12" font-weight="normal" fill="#ececec" textLength="58.58" lengthAdjust="spacingAndGlyphs" font-family="Liberation Sans" >Close/min</text><text x="1049.52" y="76.2" font-size="12" font-weight="normal" fill="#ececec" textLength="63.99" lengthAdjust="spacingAndGlyphs" font-family="Liberation Sans" >Noises/min</text><text x="884.07" y="111.8" font-size="29.5" font-weight="bold" fill="#ffffff" textLength="17.60" lengthAdjust="spacingAndGlyphs" font-family="Liberation Sans" >1</text><text x="993.01" y="111.8" font-size="29" font-weight="bold" fill="#ffffff" textLength="20.42" lengthAdjust="spacingAndGlyphs" font-family="Liberation Sans" >0</text><text x="1102.82" y="111.8" font-size="29" font-weight="bold" fill="#c0c0c0" textLength="20.31" lengthAdjust="spacingAndGlyphs" font-family="Liberation Sans" >0</text><text x="826.17" y="142.9" font-size="13" font-weight="normal" fill="#ececec" textLength="76.76" lengthAdjust="spacingAndGlyphs" font-family="Liberation Sans" >Total Strikes</text><text x="944.48" y="142.9" font-size="13" font-weight="normal" fill="#ececec" textLength="68.76" lengthAdjust="spacingAndGlyphs" font-family="Liberation Sans" >Total Close</text><text x="1047.18" y="142.9" font-size="13" font-weight="normal" fill="#ececec" textLength="75.55" lengthAdjust="spacingAndGlyphs" font-family="Liberation Sans" >Total Noises</text><text x="870.89" y="160.5" font-size="13" font-weight="normal" fill="#ececec" textLength="31.96" lengthAdjust="spacingAndGlyphs" font-family="Liberation Sans" >1354</text><text x="1004.92" y="160.5" font-size="13" font-weight="normal" fill="#ececec" textLength="8.40" lengthAdjust="spacingAndGlyphs" font-family="Liberation Sans" >0</text><text x="1107.25" y="160.5" font-size="13" font-weight="normal" fill="#ececec" textLength="15.76" lengthAdjust="spacingAndGlyphs" font-family="Liberation Sans" >82</text><text x="820.07" y="215" font-size="13" font-weight="normal" fill="#c4c4c4" textLength="166.57" lengthAdjust="spacingAndGlyphs" font-family="Liberation Sans" >Lightning type distribution</text><text x="820.80" y="236.7" font-size="13" font-weight="bold" fill="#ffffff" textLength="85.51" lengthAdjust="spacingAndGlyphs" font-family="Liberation Sans" >Cloud-ground</text><text x="912.25" y="236.7" font-size="13" font-weight="normal" fill="#ececec" textLength="9.49" lengthAdjust="spacingAndGlyphs" font-family="Liberation Sans" >+</text><text x="978.66" y="236.7" font-size="13" font-weight="bold" fill="#ffffff" textLength="29.71" lengthAdjust="spacingAndGlyphs" font-family="Liberation Sans" >36%</text><text x="1082.04" y="236.7" font-size="13" font-weight="bold" fill="#ffffff" textLength="29.72" lengthAdjust="spacingAndGlyphs" font-family="Liberation Sans" >55%</text><text x="820.32" y="261" font-size="14" font-weight="normal" fill="#d4d0cc" textLength="38.82" lengthAdjust="spacingAndGlyphs" font-family="Liberation Serif" >Count</text><text x="925.18" y="260.8" font-size="13" font-weight="bold" fill="#ffffff" textLength="23.74" lengthAdjust="spacingAndGlyphs" font-family="Liberation Sans" >488</text><text x="1028.07" y="260.8" font-size="13" font-weight="bold" fill="#ffffff" textLength="23.14" lengthAdjust="spacingAndGlyphs" font-family="Liberation Sans" >751</text><text x="820.16" y="290.5" font-size="13" font-weight="bold" fill="#ffffff" textLength="65.71" lengthAdjust="spacingAndGlyphs" font-family="Liberation Sans" >Intracloud</text><text x="912.25" y="290.5" font-size="13" font-weight="normal" fill="#ececec" textLength="9.49" lengthAdjust="spacingAndGlyphs" font-family="Liberation Sans" >+</text><text x="978.64" y="290.5" font-size="13" font-weight="bold" fill="#ffffff" textLength="22.53" lengthAdjust="spacingAndGlyphs" font-family="Liberation Sans" >3%</text><text x="1082.04" y="290.5" font-size="13" font-weight="bold" fill="#ffffff" textLength="21.40" lengthAdjust="spacingAndGlyphs" font-family="Liberation Sans" >5%</text><text x="820.32" y="314.8" font-size="14" font-weight="normal" fill="#d4d0cc" textLength="38.82" lengthAdjust="spacingAndGlyphs" font-family="Liberation Serif" >Count</text><text x="925.20" y="314.6" font-size="13" font-weight="bold" fill="#ffffff" font-family="Liberation Sans" >42</text><text x="1028.10" y="314.6" font-size="13" font-weight="bold" fill="#ffffff" font-family="Liberation Sans" >73</text><text x="821.22" y="352.9" font-size="16" font-weight="bold" fill="#00e000" textLength="203.28" lengthAdjust="spacingAndGlyphs" font-family="Liberation Sans" >3/6/2026 12:05:19 PM</text><text x="820.66" y="388" font-size="13" font-weight="normal" fill="#ececec" textLength="49.76" lengthAdjust="spacingAndGlyphs" font-family="Liberation Sans" >Squelch</text><text x="908.96" y="388" font-size="13" font-weight="normal" fill="#ececec" textLength="7.81" lengthAdjust="spacingAndGlyphs" font-family="Liberation Sans" >0</text><text x="980.19" y="388" font-size="13" font-weight="normal" fill="#ececec" textLength="45.58" lengthAdjust="spacingAndGlyphs" font-family="Liberation Sans" >Upload</text><text x="1059.90" y="388" font-size="13" font-weight="normal" fill="#c4c4c4" textLength="55.45" lengthAdjust="spacingAndGlyphs" font-family="Liberation Sans" >Disabled</text><text x="820.22" y="407.8" font-size="13" font-weight="normal" fill="#ececec" textLength="73.34" lengthAdjust="spacingAndGlyphs" font-family="Liberation Sans" >Persistence</text><text x="908.84" y="407.8" font-size="13" font-weight="normal" fill="#ececec" textLength="42.75" lengthAdjust="spacingAndGlyphs" font-family="Liberation Sans" >90 min</text><text x="980.63" y="407.8" font-size="13" font-weight="normal" fill="#ececec" textLength="51.99" lengthAdjust="spacingAndGlyphs" font-family="Liberation Sans" >Capture</text><text x="1061.00" y="407.8" font-size="13" font-weight="normal" fill="#00e000" textLength="36.82" lengthAdjust="spacingAndGlyphs" font-family="Liberation Sans" >Active</text><text x="820.23" y="427.6" font-size="13" font-weight="normal" fill="#ececec" textLength="41.01" lengthAdjust="spacingAndGlyphs" font-family="Liberation Sans" >Range</text><text x="908.95" y="427.6" font-size="13" font-weight="normal" fill="#ececec" textLength="42.75" lengthAdjust="spacingAndGlyphs" font-family="Liberation Sans" >313 mi</text><text x="980.26" y="427.6" font-size="13" font-weight="normal" fill="#ececec" textLength="53.34" lengthAdjust="spacingAndGlyphs" font-family="Liberation Sans" >Receiver</text><text x="1059.90" y="427.6" font-size="13" font-weight="normal" fill="#00e000" textLength="52.38" lengthAdjust="spacingAndGlyphs" font-family="Liberation Sans" >Enabled</text><text x="820.21" y="475" font-size="13" font-weight="normal" fill="#c4c4c4" textLength="44.92" lengthAdjust="spacingAndGlyphs" font-family="Liberation Sans" >Uptime</text><text x="909.49" y="475" font-size="13" font-weight="normal" fill="#ececec" textLength="52.26" lengthAdjust="spacingAndGlyphs" font-family="Liberation Sans" >1271:50</text><text x="980.21" y="475" font-size="13" font-weight="normal" fill="#c4c4c4" textLength="63.14" lengthAdjust="spacingAndGlyphs" font-family="Liberation Sans" >Peak time</text><text x="1059.89" y="475" font-size="13" font-weight="normal" fill="#c4c4c4" textLength="24.92" lengthAdjust="spacingAndGlyphs" font-family="Liberation Sans" >Plot</text><text x="820.18" y="497.8" font-size="13" font-weight="normal" fill="#c4c4c4" textLength="62.23" lengthAdjust="spacingAndGlyphs" font-family="Liberation Sans" >Peak rate</text><text x="909.50" y="497.8" font-size="13" font-weight="normal" fill="#ececec" textLength="42.79" lengthAdjust="spacingAndGlyphs" font-family="Liberation Sans" >12/min</text><text x="980.65" y="497.8" font-size="13" font-weight="normal" fill="#ececec" textLength="51.63" lengthAdjust="spacingAndGlyphs" font-family="Liberation Sans" >2:51 AM</text><text x="1060.33" y="497.8" font-size="13" font-weight="normal" fill="#ececec" textLength="36.85" lengthAdjust="spacingAndGlyphs" font-family="Liberation Sans" >Strike</text><text x="822.37" y="527.8" font-size="13" font-weight="normal" fill="#c4c4c4" textLength="77.25" lengthAdjust="spacingAndGlyphs" font-family="Liberation Sans" >Trend graph</text><text x="907.85" y="527.8" font-size="13" font-weight="normal" fill="#ececec" textLength="42.34" lengthAdjust="spacingAndGlyphs" font-family="Liberation Sans" >60 min</text><text x="1091.78" y="547.2" font-size="12" font-weight="normal" fill="#d0d0d0" textLength="13.99" lengthAdjust="spacingAndGlyphs" font-family="Liberation Sans" >30</text><text x="1091.56" y="625.1" font-size="12" font-weight="normal" fill="#d0d0d0" textLength="14.21" lengthAdjust="spacingAndGlyphs" font-family="Liberation Sans" >20</text><text x="1091.22" y="703" font-size="12" font-weight="normal" fill="#d0d0d0" textLength="14.57" lengthAdjust="spacingAndGlyphs" font-family="Liberation Sans" >10</text><text x="819.77" y="792.9" font-size="12" font-weight="normal" fill="#d0d0d0" textLength="14.11" lengthAdjust="spacingAndGlyphs" font-family="Liberation Sans" >60</text><text x="863.78" y="792.9" font-size="12" font-weight="normal" fill="#d0d0d0" textLength="13.99" lengthAdjust="spacingAndGlyphs" font-family="Liberation Sans" >50</text><text x="909.40" y="792.9" font-size="12" font-weight="normal" fill="#d0d0d0" textLength="13.66" lengthAdjust="spacingAndGlyphs" font-family="Liberation Sans" >40</text><text x="952.78" y="792.9" font-size="12" font-weight="normal" fill="#d0d0d0" textLength="13.88" lengthAdjust="spacingAndGlyphs" font-family="Liberation Sans" >30</text><text x="996.87" y="792.9" font-size="12" font-weight="normal" fill="#d0d0d0" textLength="14.11" lengthAdjust="spacingAndGlyphs" font-family="Liberation Sans" >20</text><text x="1041.53" y="792.9" font-size="12" font-weight="normal" fill="#d0d0d0" textLength="14.46" lengthAdjust="spacingAndGlyphs" font-family="Liberation Sans" >10</text><text x="1087.48" y="792.9" font-size="12" font-weight="normal" fill="#d0d0d0" textLength="7.02" lengthAdjust="spacingAndGlyphs" font-family="Liberation Sans" >0</text><text x="1099.48" y="792.9" font-size="12" font-weight="normal" fill="#d0d0d0" textLength="19.77" lengthAdjust="spacingAndGlyphs" font-family="Liberation Sans" >min</text><text x="12.62" y="770.9" font-size="10" font-weight="normal" fill="#e0e0e0" textLength="36.61" lengthAdjust="spacingAndGlyphs" font-family="Liberation Sans" >Symbols</text><text x="52.40" y="770.9" font-size="10" font-weight="normal" fill="#e0e0e0" textLength="18.44" lengthAdjust="spacingAndGlyphs" font-family="Liberation Sans" >-CG</text><text x="77.33" y="770.9" font-size="10" font-weight="normal" fill="#e0e0e0" textLength="15.57" lengthAdjust="spacingAndGlyphs" font-family="Liberation Sans" >-IC</text><text x="98.39" y="770.9" font-size="10" font-weight="normal" fill="#e0e0e0" textLength="21.16" lengthAdjust="spacingAndGlyphs" font-family="Liberation Sans" >+CG</text><text x="123.11" y="770.9" font-size="10" font-weight="normal" fill="#e0e0e0" textLength="18.60" lengthAdjust="spacingAndGlyphs" font-family="Liberation Sans" >+IC</text><text x="152.54" y="770.9" font-size="10" font-weight="normal" fill="#e0e0e0" textLength="90.77" lengthAdjust="spacingAndGlyphs" font-family="Liberation Sans" >Strike age color codes</text><text x="12.38" y="783.6" font-size="10" font-weight="normal" fill="#e0e0e0" textLength="28.60" lengthAdjust="spacingAndGlyphs" font-family="Liberation Sans" >Recent</text><text x="12.69" y="796.5" font-size="10" font-weight="normal" fill="#e0e0e0" textLength="15.99" lengthAdjust="spacingAndGlyphs" font-family="Liberation Sans" >Old</text><text x="152.47" y="783.6" font-size="10" font-weight="normal" fill="#f0e000" textLength="17.71" lengthAdjust="spacingAndGlyphs" font-family="Liberation Sans" >15+</text><text x="187.89" y="783.6" font-size="10" font-weight="normal" fill="#f0c400" textLength="17.38" lengthAdjust="spacingAndGlyphs" font-family="Liberation Sans" >30+</text><text x="222.90" y="783.6" font-size="10" font-weight="normal" fill="#f0a000" textLength="17.17" lengthAdjust="spacingAndGlyphs" font-family="Liberation Sans" >45+</text><text x="152.68" y="796.5" font-size="10" font-weight="normal" fill="#e88400" textLength="17.49" lengthAdjust="spacingAndGlyphs" font-family="Liberation Sans" >60+</text><text x="187.78" y="796.5" font-size="10" font-weight="normal" fill="#e06400" textLength="17.49" lengthAdjust="spacingAndGlyphs" font-family="Liberation Sans" >75+</text><text x="222.69" y="796.5" font-size="10" font-weight="normal" fill="#e04400" textLength="17.38" lengthAdjust="spacingAndGlyphs" font-family="Liberation Sans" >90+</text><text x="688.51" y="802.1" font-size="10" font-weight="normal" fill="#e8e8e8" textLength="113.78" lengthAdjust="spacingAndGlyphs" font-family="Liberation Sans" >©2005 Astrogenic Systems</text>
</svg>
</body></html>
